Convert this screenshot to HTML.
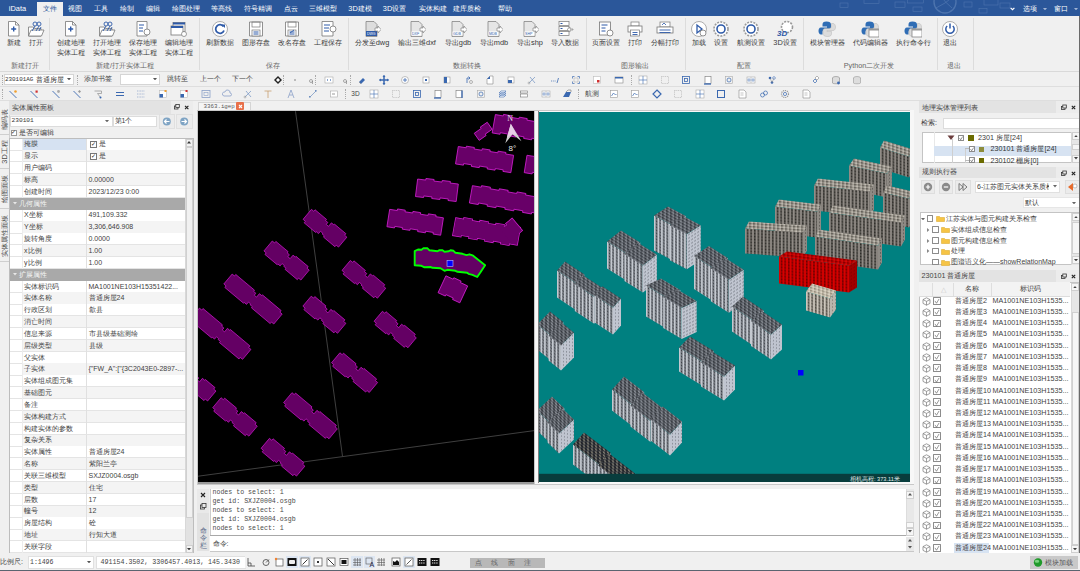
<!DOCTYPE html>
<html><head><meta charset="utf-8"><style>
html,body{margin:0;padding:0;width:1080px;height:571px;overflow:hidden;background:#f0f0f0}
body{position:relative;font-family:"Liberation Sans",sans-serif}
#r>div{position:absolute}
#r>svg{position:absolute;overflow:hidden}
</style></head><body><div id="r" style="position:absolute;left:0;top:0;width:1080px;height:571px;overflow:hidden">
<div style="left:0px;top:100.5px;width:1080px;height:471px;background:#f0f0f0"></div>
<div style="left:8.6px;top:101px;width:0.6px;height:170px;background:#d0d0d0"></div>
<div style="left:0px;top:104px;width:9px;height:30.5px;background:#f0f0f0;border-bottom:1px solid #cfcfcf;box-sizing:border-box"></div>
<div style="left:-45.5px;top:114.25px;width:100px;height:10px;line-height:10px;text-align:center;font-size:7.3px;color:#4a4a4a;white-space:nowrap;transform:rotate(-90deg)">编码表</div>
<div style="left:0px;top:134.5px;width:9px;height:34.5px;background:#f0f0f0;border-bottom:1px solid #cfcfcf;box-sizing:border-box"></div>
<div style="left:-45.5px;top:146.75px;width:100px;height:10px;line-height:10px;text-align:center;font-size:7.3px;color:#4a4a4a;white-space:nowrap;transform:rotate(-90deg)">3D工程</div>
<div style="left:0px;top:169px;width:9px;height:40px;background:#f0f0f0;border-bottom:1px solid #cfcfcf;box-sizing:border-box"></div>
<div style="left:-45.5px;top:184.0px;width:100px;height:10px;line-height:10px;text-align:center;font-size:7.3px;color:#4a4a4a;white-space:nowrap;transform:rotate(-90deg)">绘图面板</div>
<div style="left:0px;top:209px;width:9px;height:53px;background:#f0f0f0;border-bottom:1px solid #cfcfcf;box-sizing:border-box"></div>
<div style="left:-45.5px;top:230.5px;width:100px;height:10px;line-height:10px;text-align:center;font-size:7.3px;color:#4a4a4a;white-space:nowrap;transform:rotate(-90deg)">实体属性面板</div>
<div style="left:9px;top:101px;width:184px;height:13.5px;background:#e3e3e3"></div>
<div style="left:171px;top:101px;width:22px;height:13.5px;background:#ececec"></div>
<div style="left:12px;top:100.6px;height:14.4px;line-height:14.4px;font-size:7.2px;color:#424242;white-space:nowrap;">实体属性面板</div>
<svg style="position:absolute;left:171px;top:101px;" width="22" height="13" viewBox="0 0 22 13"><rect x="3.5" y="5" width="3.5" height="3" fill="none" stroke="#333" stroke-width="0.8"/><rect x="4.8" y="3.5" width="3.5" height="3" fill="#ececec" stroke="#333" stroke-width="0.8"/><path d="M14 4.8l3.4 3.4M17.4 4.8l-3.4 3.4" stroke="#222" stroke-width="1.1"/></svg>
<div style="left:9.5px;top:115.5px;width:103px;height:11px;background:#fff;border:1px solid #dcdcdc;box-sizing:border-box"></div>
<div style="left:11.5px;top:115.0px;height:12.4px;line-height:12.4px;font-size:6.2px;color:#3a3a3a;white-space:nowrap;font-family:'Liberation Mono',monospace">230101</div>
<svg style="position:absolute;left:105.0px;top:119.8px" width="4" height="2.4"><polygon points="0,0 4,0 2.0,2.4" fill="#666"/></svg>
<div style="left:113px;top:115.5px;width:44px;height:11px;background:#fff;border:1px solid #dcdcdc;box-sizing:border-box"></div>
<div style="left:114.5px;top:114px;height:14px;line-height:14px;font-size:7px;color:#3a3a3a;white-space:nowrap;">第1个</div>
<div style="left:158.5px;top:114px;width:16px;height:15px;background:#ececec;border:1px solid #e0e0e0;box-sizing:border-box"></div>
<div style="left:175.5px;top:114px;width:17px;height:15px;background:#ececec;border:1px solid #e0e0e0;box-sizing:border-box"></div>
<svg style="position:absolute;left:160px;top:115px;" width="14" height="13" viewBox="0 0 14 13"><circle cx="6.8" cy="6.5" r="4" fill="#7fa4c4"/><path d="M9.5 6.5h-5M6.5 4.5l-2 2 2 2" stroke="#fff" stroke-width="1.2" fill="none"/></svg>
<svg style="position:absolute;left:177px;top:115px;" width="14" height="13" viewBox="0 0 14 13"><circle cx="7.2" cy="6.5" r="4" fill="#7fa4c4"/><path d="M4.5 6.5h5M7.5 4.5l2 2-2 2" stroke="#fff" stroke-width="1.2" fill="none"/></svg>
<div style="left:10.5px;top:130px;width:6px;height:6px;background:#fff;border:1px solid #999;box-sizing:border-box"></div>
<div style="left:11px;top:127.30000000000001px;height:11.0px;line-height:11.0px;font-size:5.5px;color:#333;white-space:nowrap;">✓</div>
<div style="left:19px;top:125.8px;height:14.4px;line-height:14.4px;font-size:7.2px;color:#3a3a3a;white-space:nowrap;">是否可编辑</div>
<div style="left:9px;top:138px;width:184.5px;height:415.5px;background:#fff;border:1px solid #bdbdbd;box-sizing:border-box"></div>
<div style="left:22px;top:138.5px;width:163px;height:11.84px;background:#ffffff"></div>
<div style="left:22px;top:138.5px;width:64px;height:11.84px;background:#d6e2f2"></div>
<div style="left:10px;top:149.64000000000001px;width:175px;height:0.8px;background:#e4e4e4"></div>
<div style="left:86px;top:138.5px;width:0.8px;height:11.84px;background:#e0e0e0"></div>
<div style="left:22px;top:138.5px;width:0.8px;height:11.84px;background:#ececec"></div>
<div style="left:24px;top:137.42px;height:14px;line-height:14px;font-size:7px;color:#424242;white-space:nowrap;">掩膜</div>
<div style="left:89.5px;top:141.0px;width:7px;height:7px;background:#fff;border:1px solid #777;box-sizing:border-box"></div>
<div style="left:90.5px;top:138.42px;height:12px;line-height:12px;font-size:6px;color:#222;white-space:nowrap;">✓</div>
<div style="left:99px;top:137.42px;height:14px;line-height:14px;font-size:7px;color:#424242;white-space:nowrap;">是</div>
<div style="left:22px;top:150.34px;width:163px;height:11.84px;background:#f4f4f4"></div>
<div style="left:10px;top:161.48000000000002px;width:175px;height:0.8px;background:#e4e4e4"></div>
<div style="left:86px;top:150.34px;width:0.8px;height:11.84px;background:#e0e0e0"></div>
<div style="left:22px;top:150.34px;width:0.8px;height:11.84px;background:#ececec"></div>
<div style="left:24px;top:149.26px;height:14px;line-height:14px;font-size:7px;color:#424242;white-space:nowrap;">显示</div>
<div style="left:89.5px;top:152.84px;width:7px;height:7px;background:#fff;border:1px solid #777;box-sizing:border-box"></div>
<div style="left:90.5px;top:150.26px;height:12px;line-height:12px;font-size:6px;color:#222;white-space:nowrap;">✓</div>
<div style="left:99px;top:149.26px;height:14px;line-height:14px;font-size:7px;color:#424242;white-space:nowrap;">是</div>
<div style="left:22px;top:162.18px;width:163px;height:11.84px;background:#ffffff"></div>
<div style="left:10px;top:173.32000000000002px;width:175px;height:0.8px;background:#e4e4e4"></div>
<div style="left:86px;top:162.18px;width:0.8px;height:11.84px;background:#e0e0e0"></div>
<div style="left:22px;top:162.18px;width:0.8px;height:11.84px;background:#ececec"></div>
<div style="left:24px;top:161.1px;height:14px;line-height:14px;font-size:7px;color:#424242;white-space:nowrap;">用户编码</div>
<div style="left:22px;top:174.02px;width:163px;height:11.84px;background:#f4f4f4"></div>
<div style="left:10px;top:185.16000000000003px;width:175px;height:0.8px;background:#e4e4e4"></div>
<div style="left:86px;top:174.02px;width:0.8px;height:11.84px;background:#e0e0e0"></div>
<div style="left:22px;top:174.02px;width:0.8px;height:11.84px;background:#ececec"></div>
<div style="left:24px;top:172.94px;height:14px;line-height:14px;font-size:7px;color:#424242;white-space:nowrap;">标高</div>
<div style="left:88.5px;top:172.94px;height:14px;line-height:14px;font-size:7px;color:#424242;white-space:nowrap;">0.00000</div>
<div style="left:22px;top:185.86px;width:163px;height:11.84px;background:#ffffff"></div>
<div style="left:10px;top:197.00000000000003px;width:175px;height:0.8px;background:#e4e4e4"></div>
<div style="left:86px;top:185.86px;width:0.8px;height:11.84px;background:#e0e0e0"></div>
<div style="left:22px;top:185.86px;width:0.8px;height:11.84px;background:#ececec"></div>
<div style="left:24px;top:184.78px;height:14px;line-height:14px;font-size:7px;color:#424242;white-space:nowrap;">创建时间</div>
<div style="left:88.5px;top:184.78px;height:14px;line-height:14px;font-size:7px;color:#424242;white-space:nowrap;">2023/12/23 0:00</div>
<div style="left:10px;top:197.70000000000002px;width:175px;height:11.84px;background:#a9a9a9"></div>
<svg style="position:absolute;left:13.0px;top:202.42000000000002px" width="4" height="2.4"><polygon points="0,0 4,0 2.0,2.4" fill="#e8e8e8"/></svg>
<div style="left:19px;top:196.62px;height:14px;line-height:14px;font-size:7px;color:#f4f4f4;white-space:nowrap;">几何属性</div>
<div style="left:22px;top:209.54000000000002px;width:163px;height:11.84px;background:#ffffff"></div>
<div style="left:10px;top:220.68000000000004px;width:175px;height:0.8px;background:#e4e4e4"></div>
<div style="left:86px;top:209.54000000000002px;width:0.8px;height:11.84px;background:#e0e0e0"></div>
<div style="left:22px;top:209.54000000000002px;width:0.8px;height:11.84px;background:#ececec"></div>
<div style="left:24px;top:208.46px;height:14px;line-height:14px;font-size:7px;color:#424242;white-space:nowrap;">X坐标</div>
<div style="left:88.5px;top:208.46px;height:14px;line-height:14px;font-size:7px;color:#424242;white-space:nowrap;">491,109.332</div>
<div style="left:22px;top:221.38000000000002px;width:163px;height:11.84px;background:#f4f4f4"></div>
<div style="left:10px;top:232.52000000000004px;width:175px;height:0.8px;background:#e4e4e4"></div>
<div style="left:86px;top:221.38000000000002px;width:0.8px;height:11.84px;background:#e0e0e0"></div>
<div style="left:22px;top:221.38000000000002px;width:0.8px;height:11.84px;background:#ececec"></div>
<div style="left:24px;top:220.3px;height:14px;line-height:14px;font-size:7px;color:#424242;white-space:nowrap;">Y坐标</div>
<div style="left:88.5px;top:220.3px;height:14px;line-height:14px;font-size:7px;color:#424242;white-space:nowrap;">3,306,646.908</div>
<div style="left:22px;top:233.22000000000003px;width:163px;height:11.84px;background:#ffffff"></div>
<div style="left:10px;top:244.36000000000004px;width:175px;height:0.8px;background:#e4e4e4"></div>
<div style="left:86px;top:233.22000000000003px;width:0.8px;height:11.84px;background:#e0e0e0"></div>
<div style="left:22px;top:233.22000000000003px;width:0.8px;height:11.84px;background:#ececec"></div>
<div style="left:24px;top:232.14000000000001px;height:14px;line-height:14px;font-size:7px;color:#424242;white-space:nowrap;">旋转角度</div>
<div style="left:88.5px;top:232.14000000000001px;height:14px;line-height:14px;font-size:7px;color:#424242;white-space:nowrap;">0.0000</div>
<div style="left:22px;top:245.06000000000003px;width:163px;height:11.84px;background:#f4f4f4"></div>
<div style="left:10px;top:256.20000000000005px;width:175px;height:0.8px;background:#e4e4e4"></div>
<div style="left:86px;top:245.06000000000003px;width:0.8px;height:11.84px;background:#e0e0e0"></div>
<div style="left:22px;top:245.06000000000003px;width:0.8px;height:11.84px;background:#ececec"></div>
<div style="left:24px;top:243.98000000000002px;height:14px;line-height:14px;font-size:7px;color:#424242;white-space:nowrap;">x比例</div>
<div style="left:88.5px;top:243.98000000000002px;height:14px;line-height:14px;font-size:7px;color:#424242;white-space:nowrap;">1.00</div>
<div style="left:22px;top:256.90000000000003px;width:163px;height:11.84px;background:#ffffff"></div>
<div style="left:10px;top:268.04px;width:175px;height:0.8px;background:#e4e4e4"></div>
<div style="left:86px;top:256.90000000000003px;width:0.8px;height:11.84px;background:#e0e0e0"></div>
<div style="left:22px;top:256.90000000000003px;width:0.8px;height:11.84px;background:#ececec"></div>
<div style="left:24px;top:255.82000000000005px;height:14px;line-height:14px;font-size:7px;color:#424242;white-space:nowrap;">y比例</div>
<div style="left:88.5px;top:255.82000000000005px;height:14px;line-height:14px;font-size:7px;color:#424242;white-space:nowrap;">1.00</div>
<div style="left:10px;top:268.74px;width:175px;height:11.84px;background:#a9a9a9"></div>
<svg style="position:absolute;left:13.0px;top:273.46000000000004px" width="4" height="2.4"><polygon points="0,0 4,0 2.0,2.4" fill="#e8e8e8"/></svg>
<div style="left:19px;top:267.66px;height:14px;line-height:14px;font-size:7px;color:#f4f4f4;white-space:nowrap;">扩展属性</div>
<div style="left:22px;top:280.58px;width:163px;height:11.84px;background:#ffffff"></div>
<div style="left:10px;top:291.71999999999997px;width:175px;height:0.8px;background:#e4e4e4"></div>
<div style="left:86px;top:280.58px;width:0.8px;height:11.84px;background:#e0e0e0"></div>
<div style="left:22px;top:280.58px;width:0.8px;height:11.84px;background:#ececec"></div>
<div style="left:24px;top:279.5px;height:14px;line-height:14px;font-size:7px;color:#424242;white-space:nowrap;">实体标识码</div>
<div style="left:88.5px;top:279.5px;height:14px;line-height:14px;font-size:7px;color:#424242;white-space:nowrap;">MA1001NE103H15351422...</div>
<div style="left:22px;top:292.41999999999996px;width:163px;height:11.84px;background:#f4f4f4"></div>
<div style="left:10px;top:303.55999999999995px;width:175px;height:0.8px;background:#e4e4e4"></div>
<div style="left:86px;top:292.41999999999996px;width:0.8px;height:11.84px;background:#e0e0e0"></div>
<div style="left:22px;top:292.41999999999996px;width:0.8px;height:11.84px;background:#ececec"></div>
<div style="left:24px;top:291.34px;height:14px;line-height:14px;font-size:7px;color:#424242;white-space:nowrap;">实体名称</div>
<div style="left:88.5px;top:291.34px;height:14px;line-height:14px;font-size:7px;color:#424242;white-space:nowrap;">普通房屋24</div>
<div style="left:22px;top:304.25999999999993px;width:163px;height:11.84px;background:#ffffff"></div>
<div style="left:10px;top:315.3999999999999px;width:175px;height:0.8px;background:#e4e4e4"></div>
<div style="left:86px;top:304.25999999999993px;width:0.8px;height:11.84px;background:#e0e0e0"></div>
<div style="left:22px;top:304.25999999999993px;width:0.8px;height:11.84px;background:#ececec"></div>
<div style="left:24px;top:303.17999999999995px;height:14px;line-height:14px;font-size:7px;color:#424242;white-space:nowrap;">行政区划</div>
<div style="left:88.5px;top:303.17999999999995px;height:14px;line-height:14px;font-size:7px;color:#424242;white-space:nowrap;">歙县</div>
<div style="left:22px;top:316.0999999999999px;width:163px;height:11.84px;background:#f4f4f4"></div>
<div style="left:10px;top:327.2399999999999px;width:175px;height:0.8px;background:#e4e4e4"></div>
<div style="left:86px;top:316.0999999999999px;width:0.8px;height:11.84px;background:#e0e0e0"></div>
<div style="left:22px;top:316.0999999999999px;width:0.8px;height:11.84px;background:#ececec"></div>
<div style="left:24px;top:315.0199999999999px;height:14px;line-height:14px;font-size:7px;color:#424242;white-space:nowrap;">消亡时间</div>
<div style="left:22px;top:327.9399999999999px;width:163px;height:11.84px;background:#ffffff"></div>
<div style="left:10px;top:339.07999999999987px;width:175px;height:0.8px;background:#e4e4e4"></div>
<div style="left:86px;top:327.9399999999999px;width:0.8px;height:11.84px;background:#e0e0e0"></div>
<div style="left:22px;top:327.9399999999999px;width:0.8px;height:11.84px;background:#ececec"></div>
<div style="left:24px;top:326.8599999999999px;height:14px;line-height:14px;font-size:7px;color:#424242;white-space:nowrap;">信息来源</div>
<div style="left:88.5px;top:326.8599999999999px;height:14px;line-height:14px;font-size:7px;color:#424242;white-space:nowrap;">市县级基础测绘</div>
<div style="left:22px;top:339.77999999999986px;width:163px;height:11.84px;background:#f4f4f4"></div>
<div style="left:10px;top:350.91999999999985px;width:175px;height:0.8px;background:#e4e4e4"></div>
<div style="left:86px;top:339.77999999999986px;width:0.8px;height:11.84px;background:#e0e0e0"></div>
<div style="left:22px;top:339.77999999999986px;width:0.8px;height:11.84px;background:#ececec"></div>
<div style="left:24px;top:338.6999999999999px;height:14px;line-height:14px;font-size:7px;color:#424242;white-space:nowrap;">层级类型</div>
<div style="left:88.5px;top:338.6999999999999px;height:14px;line-height:14px;font-size:7px;color:#424242;white-space:nowrap;">县级</div>
<div style="left:22px;top:351.61999999999983px;width:163px;height:11.84px;background:#ffffff"></div>
<div style="left:10px;top:362.7599999999998px;width:175px;height:0.8px;background:#e4e4e4"></div>
<div style="left:86px;top:351.61999999999983px;width:0.8px;height:11.84px;background:#e0e0e0"></div>
<div style="left:22px;top:351.61999999999983px;width:0.8px;height:11.84px;background:#ececec"></div>
<div style="left:24px;top:350.53999999999985px;height:14px;line-height:14px;font-size:7px;color:#424242;white-space:nowrap;">父实体</div>
<div style="left:22px;top:363.4599999999998px;width:163px;height:11.84px;background:#f4f4f4"></div>
<div style="left:10px;top:374.5999999999998px;width:175px;height:0.8px;background:#e4e4e4"></div>
<div style="left:86px;top:363.4599999999998px;width:0.8px;height:11.84px;background:#e0e0e0"></div>
<div style="left:22px;top:363.4599999999998px;width:0.8px;height:11.84px;background:#ececec"></div>
<div style="left:24px;top:362.3799999999998px;height:14px;line-height:14px;font-size:7px;color:#424242;white-space:nowrap;">子实体</div>
<div style="left:88.5px;top:362.3799999999998px;height:14px;line-height:14px;font-size:7px;color:#424242;white-space:nowrap;">{"FW_A":["{3C2043E0-2897-...</div>
<div style="left:22px;top:375.2999999999998px;width:163px;height:11.84px;background:#ffffff"></div>
<div style="left:10px;top:386.43999999999977px;width:175px;height:0.8px;background:#e4e4e4"></div>
<div style="left:86px;top:375.2999999999998px;width:0.8px;height:11.84px;background:#e0e0e0"></div>
<div style="left:22px;top:375.2999999999998px;width:0.8px;height:11.84px;background:#ececec"></div>
<div style="left:24px;top:374.2199999999998px;height:14px;line-height:14px;font-size:7px;color:#424242;white-space:nowrap;">实体组成图元集</div>
<div style="left:22px;top:387.13999999999976px;width:163px;height:11.84px;background:#f4f4f4"></div>
<div style="left:10px;top:398.27999999999975px;width:175px;height:0.8px;background:#e4e4e4"></div>
<div style="left:86px;top:387.13999999999976px;width:0.8px;height:11.84px;background:#e0e0e0"></div>
<div style="left:22px;top:387.13999999999976px;width:0.8px;height:11.84px;background:#ececec"></div>
<div style="left:24px;top:386.0599999999998px;height:14px;line-height:14px;font-size:7px;color:#424242;white-space:nowrap;">基础图元</div>
<div style="left:22px;top:398.97999999999973px;width:163px;height:11.84px;background:#ffffff"></div>
<div style="left:10px;top:410.1199999999997px;width:175px;height:0.8px;background:#e4e4e4"></div>
<div style="left:86px;top:398.97999999999973px;width:0.8px;height:11.84px;background:#e0e0e0"></div>
<div style="left:22px;top:398.97999999999973px;width:0.8px;height:11.84px;background:#ececec"></div>
<div style="left:24px;top:397.89999999999975px;height:14px;line-height:14px;font-size:7px;color:#424242;white-space:nowrap;">备注</div>
<div style="left:22px;top:410.8199999999997px;width:163px;height:11.84px;background:#f4f4f4"></div>
<div style="left:10px;top:421.9599999999997px;width:175px;height:0.8px;background:#e4e4e4"></div>
<div style="left:86px;top:410.8199999999997px;width:0.8px;height:11.84px;background:#e0e0e0"></div>
<div style="left:22px;top:410.8199999999997px;width:0.8px;height:11.84px;background:#ececec"></div>
<div style="left:24px;top:409.7399999999997px;height:14px;line-height:14px;font-size:7px;color:#424242;white-space:nowrap;">实体构建方式</div>
<div style="left:22px;top:422.6599999999997px;width:163px;height:11.84px;background:#ffffff"></div>
<div style="left:10px;top:433.79999999999967px;width:175px;height:0.8px;background:#e4e4e4"></div>
<div style="left:86px;top:422.6599999999997px;width:0.8px;height:11.84px;background:#e0e0e0"></div>
<div style="left:22px;top:422.6599999999997px;width:0.8px;height:11.84px;background:#ececec"></div>
<div style="left:24px;top:421.5799999999997px;height:14px;line-height:14px;font-size:7px;color:#424242;white-space:nowrap;">构建实体的参数</div>
<div style="left:22px;top:434.49999999999966px;width:163px;height:11.84px;background:#f4f4f4"></div>
<div style="left:10px;top:445.63999999999965px;width:175px;height:0.8px;background:#e4e4e4"></div>
<div style="left:86px;top:434.49999999999966px;width:0.8px;height:11.84px;background:#e0e0e0"></div>
<div style="left:22px;top:434.49999999999966px;width:0.8px;height:11.84px;background:#ececec"></div>
<div style="left:24px;top:433.4199999999997px;height:14px;line-height:14px;font-size:7px;color:#424242;white-space:nowrap;">复杂关系</div>
<div style="left:22px;top:446.33999999999963px;width:163px;height:11.84px;background:#ffffff"></div>
<div style="left:10px;top:457.4799999999996px;width:175px;height:0.8px;background:#e4e4e4"></div>
<div style="left:86px;top:446.33999999999963px;width:0.8px;height:11.84px;background:#e0e0e0"></div>
<div style="left:22px;top:446.33999999999963px;width:0.8px;height:11.84px;background:#ececec"></div>
<div style="left:24px;top:445.25999999999965px;height:14px;line-height:14px;font-size:7px;color:#424242;white-space:nowrap;">实体属性</div>
<div style="left:88.5px;top:445.25999999999965px;height:14px;line-height:14px;font-size:7px;color:#424242;white-space:nowrap;">普通房屋24</div>
<div style="left:22px;top:458.1799999999996px;width:163px;height:11.84px;background:#f4f4f4"></div>
<div style="left:10px;top:469.3199999999996px;width:175px;height:0.8px;background:#e4e4e4"></div>
<div style="left:86px;top:458.1799999999996px;width:0.8px;height:11.84px;background:#e0e0e0"></div>
<div style="left:22px;top:458.1799999999996px;width:0.8px;height:11.84px;background:#ececec"></div>
<div style="left:24px;top:457.0999999999996px;height:14px;line-height:14px;font-size:7px;color:#424242;white-space:nowrap;">名称</div>
<div style="left:88.5px;top:457.0999999999996px;height:14px;line-height:14px;font-size:7px;color:#424242;white-space:nowrap;">紫阳兰亭</div>
<div style="left:22px;top:470.0199999999996px;width:163px;height:11.84px;background:#ffffff"></div>
<div style="left:10px;top:481.15999999999957px;width:175px;height:0.8px;background:#e4e4e4"></div>
<div style="left:86px;top:470.0199999999996px;width:0.8px;height:11.84px;background:#e0e0e0"></div>
<div style="left:22px;top:470.0199999999996px;width:0.8px;height:11.84px;background:#ececec"></div>
<div style="left:24px;top:468.9399999999996px;height:14px;line-height:14px;font-size:7px;color:#424242;white-space:nowrap;">关联三维模型</div>
<div style="left:88.5px;top:468.9399999999996px;height:14px;line-height:14px;font-size:7px;color:#424242;white-space:nowrap;">SXJZ0004.osgb</div>
<div style="left:22px;top:481.85999999999956px;width:163px;height:11.84px;background:#f4f4f4"></div>
<div style="left:10px;top:492.99999999999955px;width:175px;height:0.8px;background:#e4e4e4"></div>
<div style="left:86px;top:481.85999999999956px;width:0.8px;height:11.84px;background:#e0e0e0"></div>
<div style="left:22px;top:481.85999999999956px;width:0.8px;height:11.84px;background:#ececec"></div>
<div style="left:24px;top:480.7799999999996px;height:14px;line-height:14px;font-size:7px;color:#424242;white-space:nowrap;">类型</div>
<div style="left:88.5px;top:480.7799999999996px;height:14px;line-height:14px;font-size:7px;color:#424242;white-space:nowrap;">住宅</div>
<div style="left:22px;top:493.69999999999953px;width:163px;height:11.84px;background:#ffffff"></div>
<div style="left:10px;top:504.8399999999995px;width:175px;height:0.8px;background:#e4e4e4"></div>
<div style="left:86px;top:493.69999999999953px;width:0.8px;height:11.84px;background:#e0e0e0"></div>
<div style="left:22px;top:493.69999999999953px;width:0.8px;height:11.84px;background:#ececec"></div>
<div style="left:24px;top:492.61999999999955px;height:14px;line-height:14px;font-size:7px;color:#424242;white-space:nowrap;">层数</div>
<div style="left:88.5px;top:492.61999999999955px;height:14px;line-height:14px;font-size:7px;color:#424242;white-space:nowrap;">17</div>
<div style="left:22px;top:505.5399999999995px;width:163px;height:11.84px;background:#f4f4f4"></div>
<div style="left:10px;top:516.6799999999995px;width:175px;height:0.8px;background:#e4e4e4"></div>
<div style="left:86px;top:505.5399999999995px;width:0.8px;height:11.84px;background:#e0e0e0"></div>
<div style="left:22px;top:505.5399999999995px;width:0.8px;height:11.84px;background:#ececec"></div>
<div style="left:24px;top:504.4599999999995px;height:14px;line-height:14px;font-size:7px;color:#424242;white-space:nowrap;">幢号</div>
<div style="left:88.5px;top:504.4599999999995px;height:14px;line-height:14px;font-size:7px;color:#424242;white-space:nowrap;">12</div>
<div style="left:22px;top:517.3799999999995px;width:163px;height:11.84px;background:#ffffff"></div>
<div style="left:10px;top:528.5199999999995px;width:175px;height:0.8px;background:#e4e4e4"></div>
<div style="left:86px;top:517.3799999999995px;width:0.8px;height:11.84px;background:#e0e0e0"></div>
<div style="left:22px;top:517.3799999999995px;width:0.8px;height:11.84px;background:#ececec"></div>
<div style="left:24px;top:516.2999999999995px;height:14px;line-height:14px;font-size:7px;color:#424242;white-space:nowrap;">房屋结构</div>
<div style="left:88.5px;top:516.2999999999995px;height:14px;line-height:14px;font-size:7px;color:#424242;white-space:nowrap;">砼</div>
<div style="left:22px;top:529.2199999999996px;width:163px;height:11.84px;background:#f4f4f4"></div>
<div style="left:10px;top:540.3599999999996px;width:175px;height:0.8px;background:#e4e4e4"></div>
<div style="left:86px;top:529.2199999999996px;width:0.8px;height:11.84px;background:#e0e0e0"></div>
<div style="left:22px;top:529.2199999999996px;width:0.8px;height:11.84px;background:#ececec"></div>
<div style="left:24px;top:528.1399999999995px;height:14px;line-height:14px;font-size:7px;color:#424242;white-space:nowrap;">地址</div>
<div style="left:88.5px;top:528.1399999999995px;height:14px;line-height:14px;font-size:7px;color:#424242;white-space:nowrap;">行知大道</div>
<div style="left:22px;top:541.0599999999996px;width:163px;height:11.84px;background:#ffffff"></div>
<div style="left:10px;top:552.1999999999996px;width:175px;height:0.8px;background:#e4e4e4"></div>
<div style="left:86px;top:541.0599999999996px;width:0.8px;height:11.84px;background:#e0e0e0"></div>
<div style="left:22px;top:541.0599999999996px;width:0.8px;height:11.84px;background:#ececec"></div>
<div style="left:24px;top:539.9799999999996px;height:14px;line-height:14px;font-size:7px;color:#424242;white-space:nowrap;">关联字段</div>
<div style="left:185px;top:138.5px;width:8px;height:414px;background:#e2e2e2;border-left:1px solid #d8d8d8;box-sizing:border-box"></div>
<div style="left:185.5px;top:146.5px;width:7px;height:371.5px;background:#f1f1f1;border:1px solid #d0d0d0;box-sizing:border-box"></div>
<div style="left:185.5px;top:138.5px;width:7.5px;height:8px;background:#f4f4f4;border:1px solid #cfcfcf;box-sizing:border-box"></div>
<svg style="position:absolute;left:187.3px;top:141.3px" width="4" height="2.4"><polygon points="0,2.4 4,2.4 2.0,0" fill="#3a3a3a"/></svg>
<div style="left:185.5px;top:545px;width:7.5px;height:8px;background:#f4f4f4;border:1px solid #cfcfcf;box-sizing:border-box"></div>
<svg style="position:absolute;left:187.3px;top:547.8px" width="4" height="2.4"><polygon points="0,0 4,0 2.0,2.4" fill="#3a3a3a"/></svg>
<div style="left:0px;top:0px;width:1080px;height:15.5px;background:#2b579a"></div>
<svg style="position:absolute;left:800px;top:0px;" width="280" height="15.5" viewBox="0 0 280 15.5"><rect x="40" y="3" width="8" height="4.5" fill="none" stroke="#4d74ae" stroke-width="0.6"/><rect x="64" y="-1" width="15" height="4.5" fill="none" stroke="#4d74ae" stroke-width="0.6"/><rect x="95" y="2" width="10" height="5.5" fill="none" stroke="#4d74ae" stroke-width="0.6"/><rect x="107.5" y="-1" width="16" height="4" fill="none" stroke="#4d74ae" stroke-width="0.6"/><rect x="113" y="7" width="9" height="4.5" fill="none" stroke="#4d74ae" stroke-width="0.6"/><rect x="164" y="2" width="8" height="5" fill="none" stroke="#4d74ae" stroke-width="0.6"/><rect x="179" y="8.5" width="8" height="4.5" fill="none" stroke="#4d74ae" stroke-width="0.6"/><rect x="184" y="-1" width="14" height="6" fill="none" stroke="#4d74ae" stroke-width="0.6"/><rect x="200" y="3" width="10" height="5" fill="none" stroke="#4d74ae" stroke-width="0.6"/><circle cx="145" cy="2" r="11" fill="none" stroke="#4d74ae" stroke-width="1.4"/><path d="M136 8 q9 -4 18 -12 M140 -6 q4 8 12 14" fill="none" stroke="#4d74ae" stroke-width="0.8"/></svg>
<div style="left:37px;top:1.6px;width:25.5px;height:14px;background:#f0f0f0"></div>
<div style="left:-82.5px;width:200px;text-align:center;top:1.9000000000000004px;height:14.8px;line-height:14.8px;font-size:7.4px;color:#ffffff;white-space:nowrap;">iData</div>
<div style="left:-50.5px;width:200px;text-align:center;top:1.9000000000000004px;height:14.8px;line-height:14.8px;font-size:7.4px;color:#2b579a;white-space:nowrap;">文件</div>
<div style="left:-25px;width:200px;text-align:center;top:1.9000000000000004px;height:14.8px;line-height:14.8px;font-size:7.4px;color:#ffffff;white-space:nowrap;">视图</div>
<div style="left:1px;width:200px;text-align:center;top:1.9000000000000004px;height:14.8px;line-height:14.8px;font-size:7.4px;color:#ffffff;white-space:nowrap;">工具</div>
<div style="left:27px;width:200px;text-align:center;top:1.9000000000000004px;height:14.8px;line-height:14.8px;font-size:7.4px;color:#ffffff;white-space:nowrap;">绘制</div>
<div style="left:53px;width:200px;text-align:center;top:1.9000000000000004px;height:14.8px;line-height:14.8px;font-size:7.4px;color:#ffffff;white-space:nowrap;">编辑</div>
<div style="left:86px;width:200px;text-align:center;top:1.9000000000000004px;height:14.8px;line-height:14.8px;font-size:7.4px;color:#ffffff;white-space:nowrap;">绘图处理</div>
<div style="left:121px;width:200px;text-align:center;top:1.9000000000000004px;height:14.8px;line-height:14.8px;font-size:7.4px;color:#ffffff;white-space:nowrap;">等高线</div>
<div style="left:157.5px;width:200px;text-align:center;top:1.9000000000000004px;height:14.8px;line-height:14.8px;font-size:7.4px;color:#ffffff;white-space:nowrap;">符号精调</div>
<div style="left:190.5px;width:200px;text-align:center;top:1.9000000000000004px;height:14.8px;line-height:14.8px;font-size:7.4px;color:#ffffff;white-space:nowrap;">点云</div>
<div style="left:223px;width:200px;text-align:center;top:1.9000000000000004px;height:14.8px;line-height:14.8px;font-size:7.4px;color:#ffffff;white-space:nowrap;">三维模型</div>
<div style="left:260px;width:200px;text-align:center;top:1.9000000000000004px;height:14.8px;line-height:14.8px;font-size:7.4px;color:#ffffff;white-space:nowrap;">3D建模</div>
<div style="left:294.5px;width:200px;text-align:center;top:1.9000000000000004px;height:14.8px;line-height:14.8px;font-size:7.4px;color:#ffffff;white-space:nowrap;">3D设置</div>
<div style="left:332.5px;width:200px;text-align:center;top:1.9000000000000004px;height:14.8px;line-height:14.8px;font-size:7.4px;color:#ffffff;white-space:nowrap;">实体构建</div>
<div style="left:367px;width:200px;text-align:center;top:1.9000000000000004px;height:14.8px;line-height:14.8px;font-size:7.4px;color:#ffffff;white-space:nowrap;">建库质检</div>
<div style="left:405px;width:200px;text-align:center;top:1.9000000000000004px;height:14.8px;line-height:14.8px;font-size:7.4px;color:#ffffff;white-space:nowrap;">帮助</div>
<svg style="position:absolute;left:1009.5px;top:6.5px;" width="5" height="4" viewBox="0 0 5 4"><path d="M0.6 0.8l1.9 1.9 1.9-1.9" fill="none" stroke="#fff" stroke-width="1.2"/></svg>
<div style="left:930px;width:200px;text-align:center;top:1.9000000000000004px;height:14.8px;line-height:14.8px;font-size:7.4px;color:#fff;white-space:nowrap;">选项</div>
<svg style="position:absolute;left:1042.5px;top:7.8px" width="4" height="2.4"><polygon points="0,0 4,0 2.0,2.4" fill="#9fb3d3"/></svg>
<div style="left:960.5px;width:200px;text-align:center;top:1.9000000000000004px;height:14.8px;line-height:14.8px;font-size:7.4px;color:#fff;white-space:nowrap;">窗口</div>
<svg style="position:absolute;left:1073.5px;top:7.8px" width="4" height="2.4"><polygon points="0,0 4,0 2.0,2.4" fill="#9fb3d3"/></svg>
<div style="left:0px;top:15.5px;width:1080px;height:56.5px;background:#f0f0f0;border-bottom:1px solid #d9d9d9;box-sizing:border-box"></div>
<div style="left:49px;top:18px;width:0.8px;height:52px;background:#dcdcdc"></div>
<div style="left:199px;top:18px;width:0.8px;height:52px;background:#dcdcdc"></div>
<div style="left:348px;top:18px;width:0.8px;height:52px;background:#dcdcdc"></div>
<div style="left:586px;top:18px;width:0.8px;height:52px;background:#dcdcdc"></div>
<div style="left:685px;top:18px;width:0.8px;height:52px;background:#dcdcdc"></div>
<div style="left:802.6px;top:18px;width:0.8px;height:52px;background:#dcdcdc"></div>
<div style="left:937px;top:18px;width:0.8px;height:52px;background:#dcdcdc"></div>
<div style="left:972.6px;top:18px;width:0.8px;height:52px;background:#dcdcdc"></div>
<div style="left:-75px;width:200px;text-align:center;top:59.099999999999994px;height:14.4px;line-height:14.4px;font-size:7.2px;color:#666;white-space:nowrap;">新建打开</div>
<div style="left:25px;width:200px;text-align:center;top:59.099999999999994px;height:14.4px;line-height:14.4px;font-size:7.2px;color:#666;white-space:nowrap;">新建/打开实体工程</div>
<div style="left:173px;width:200px;text-align:center;top:59.099999999999994px;height:14.4px;line-height:14.4px;font-size:7.2px;color:#666;white-space:nowrap;">保存</div>
<div style="left:367px;width:200px;text-align:center;top:59.099999999999994px;height:14.4px;line-height:14.4px;font-size:7.2px;color:#666;white-space:nowrap;">数据转换</div>
<div style="left:535px;width:200px;text-align:center;top:59.099999999999994px;height:14.4px;line-height:14.4px;font-size:7.2px;color:#666;white-space:nowrap;">图形输出</div>
<div style="left:644px;width:200px;text-align:center;top:59.099999999999994px;height:14.4px;line-height:14.4px;font-size:7.2px;color:#666;white-space:nowrap;">配置</div>
<div style="left:769px;width:200px;text-align:center;top:59.099999999999994px;height:14.4px;line-height:14.4px;font-size:7.2px;color:#666;white-space:nowrap;">Python二次开发</div>
<div style="left:854px;width:200px;text-align:center;top:59.099999999999994px;height:14.4px;line-height:14.4px;font-size:7.2px;color:#666;white-space:nowrap;">退出</div>
<div style="left:-86px;width:200px;text-align:center;top:36.4px;height:14.8px;line-height:14.8px;font-size:7.4px;color:#383838;white-space:nowrap;">新建</div>
<svg style="position:absolute;left:5px;top:19.5px;" width="18" height="18" viewBox="0 0 18 18"><path d="M3.5 1.5h7l3.5 3.5v11h-10.5z" fill="#fff" stroke="#777" stroke-width="0.8"/><path d="M10.5 1.5v3.5h3.5" fill="none" stroke="#777" stroke-width="0.8"/><path d="M8.7 6.5v5M6.2 9h5" stroke="#2e5aa8" stroke-width="1.4"/></svg>
<div style="left:-64px;width:200px;text-align:center;top:36.4px;height:14.8px;line-height:14.8px;font-size:7.4px;color:#383838;white-space:nowrap;">打开</div>
<svg style="position:absolute;left:27px;top:19.5px;" width="18" height="18" viewBox="0 0 18 18"><path d="M1.5 7h5l1 1.5h6.5v7.5h-12.5z" fill="#fff" stroke="#777" stroke-width="0.8"/><path d="M1.5 16l2.5-6h13l-2.5 6z" fill="#fff" stroke="#777" stroke-width="0.8"/><circle cx="8" cy="4" r="2" fill="none" stroke="#2e5aa8" stroke-width="0.9"/><circle cx="12" cy="4" r="2" fill="none" stroke="#2e5aa8" stroke-width="0.9"/><path d="M5 11l3-5M9 11l3-5M12 11l2-4" stroke="#2e5aa8" stroke-width="0.9"/></svg>
<div style="left:-29px;width:200px;text-align:center;top:36.4px;height:14.8px;line-height:14.8px;font-size:7.4px;color:#383838;white-space:nowrap;">创建地理</div>
<div style="left:-29px;width:200px;text-align:center;top:45.9px;height:14.8px;line-height:14.8px;font-size:7.4px;color:#383838;white-space:nowrap;">实体工程</div>
<svg style="position:absolute;left:62px;top:19.5px;" width="18" height="18" viewBox="0 0 18 18"><path d="M3.5 1.5h7l3.5 3.5v11h-10.5z" fill="#fff" stroke="#777" stroke-width="0.8"/><path d="M10.5 1.5v3.5h3.5" fill="none" stroke="#777" stroke-width="0.8"/><path d="M8.7 6.5v5M6.2 9h5" stroke="#2e5aa8" stroke-width="1.4"/></svg>
<div style="left:7px;width:200px;text-align:center;top:36.4px;height:14.8px;line-height:14.8px;font-size:7.4px;color:#383838;white-space:nowrap;">打开地理</div>
<div style="left:7px;width:200px;text-align:center;top:45.9px;height:14.8px;line-height:14.8px;font-size:7.4px;color:#383838;white-space:nowrap;">实体工程</div>
<svg style="position:absolute;left:98px;top:19.5px;" width="18" height="18" viewBox="0 0 18 18"><path d="M1.5 7h5l1 1.5h6.5v7.5h-12.5z" fill="#fff" stroke="#777" stroke-width="0.8"/><path d="M1.5 16l2.5-6h13l-2.5 6z" fill="#fff" stroke="#777" stroke-width="0.8"/><circle cx="8" cy="4" r="2" fill="none" stroke="#2e5aa8" stroke-width="0.9"/><circle cx="12" cy="4" r="2" fill="none" stroke="#2e5aa8" stroke-width="0.9"/><path d="M5 11l3-5M9 11l3-5M12 11l2-4" stroke="#2e5aa8" stroke-width="0.9"/></svg>
<div style="left:43px;width:200px;text-align:center;top:36.4px;height:14.8px;line-height:14.8px;font-size:7.4px;color:#383838;white-space:nowrap;">保存地理</div>
<div style="left:43px;width:200px;text-align:center;top:45.9px;height:14.8px;line-height:14.8px;font-size:7.4px;color:#383838;white-space:nowrap;">实体工程</div>
<svg style="position:absolute;left:134px;top:19.5px;" width="18" height="18" viewBox="0 0 18 18"><path d="M3 1.5h10v14.5h-10z" fill="#fff" stroke="#777" stroke-width="0.8"/><path d="M5 5h5M5 8h4M5 11h4" stroke="#2e5aa8" stroke-width="1"/><circle cx="13" cy="12" r="3" fill="#fff" stroke="#777" stroke-width="0.8"/></svg>
<div style="left:79px;width:200px;text-align:center;top:36.4px;height:14.8px;line-height:14.8px;font-size:7.4px;color:#383838;white-space:nowrap;">编辑地理</div>
<div style="left:79px;width:200px;text-align:center;top:45.9px;height:14.8px;line-height:14.8px;font-size:7.4px;color:#383838;white-space:nowrap;">实体工程</div>
<svg style="position:absolute;left:170px;top:19.5px;" width="18" height="18" viewBox="0 0 18 18"><rect x="3" y="2.5" width="12" height="9" fill="#fff" stroke="#777" stroke-width="0.8"/><rect x="3" y="2.5" width="12" height="2" fill="#2e5aa8"/><rect x="1" y="6" width="12" height="9" fill="#fff" stroke="#777" stroke-width="0.8"/><rect x="1" y="6" width="12" height="2" fill="#2e5aa8"/><circle cx="14" cy="14" r="2.5" fill="#fff" stroke="#777" stroke-width="0.7"/></svg>
<div style="left:120px;width:200px;text-align:center;top:36.4px;height:14.8px;line-height:14.8px;font-size:7.4px;color:#383838;white-space:nowrap;">刷新数据</div>
<svg style="position:absolute;left:211px;top:19.5px;" width="18" height="18" viewBox="0 0 18 18"><circle cx="9" cy="9" r="7.5" fill="#fff" stroke="#999" stroke-width="0.8"/><path d="M12.5 6.5a4.3 4.3 0 1 0 0.5 4" fill="none" stroke="#2e5aa8" stroke-width="1.8"/><path d="M10.5 4.5h3.5v3.5z" fill="#2e5aa8"/></svg>
<div style="left:156px;width:200px;text-align:center;top:36.4px;height:14.8px;line-height:14.8px;font-size:7.4px;color:#383838;white-space:nowrap;">图形存盘</div>
<svg style="position:absolute;left:247px;top:19.5px;" width="18" height="18" viewBox="0 0 18 18"><path d="M2.5 2h13v14h-13z" fill="#fff" stroke="#777" stroke-width="0.8"/><rect x="5" y="2" width="8" height="5" fill="none" stroke="#777" stroke-width="0.7"/><rect x="5" y="10" width="8" height="6" fill="#fff" stroke="#777" stroke-width="0.7"/><path d="M6.5 12h5M6.5 14h5" stroke="#2e5aa8" stroke-width="1"/></svg>
<div style="left:192px;width:200px;text-align:center;top:36.4px;height:14.8px;line-height:14.8px;font-size:7.4px;color:#383838;white-space:nowrap;">改名存盘</div>
<svg style="position:absolute;left:283px;top:19.5px;" width="18" height="18" viewBox="0 0 18 18"><path d="M2.5 2h13v14h-13z" fill="#fff" stroke="#777" stroke-width="0.8"/><rect x="5" y="2" width="8" height="5" fill="none" stroke="#777" stroke-width="0.7"/><rect x="5" y="10" width="8" height="6" fill="#fff" stroke="#777" stroke-width="0.7"/><path d="M6.5 12h5M6.5 14h5" stroke="#2e5aa8" stroke-width="1"/><path d="M7 13l4-3" stroke="#2e5aa8" stroke-width="0.9"/></svg>
<div style="left:228px;width:200px;text-align:center;top:36.4px;height:14.8px;line-height:14.8px;font-size:7.4px;color:#383838;white-space:nowrap;">工程保存</div>
<svg style="position:absolute;left:319px;top:19.5px;" width="18" height="18" viewBox="0 0 18 18"><path d="M3 1.5h11v14.5h-11z" fill="#fff" stroke="#777" stroke-width="0.8"/><path d="M5 5h6M5 8h5M5 11h5" stroke="#2e5aa8" stroke-width="1"/><circle cx="14" cy="9" r="3" fill="#fff" stroke="#777" stroke-width="0.8"/></svg>
<div style="left:272px;width:200px;text-align:center;top:36.4px;height:14.8px;line-height:14.8px;font-size:7.4px;color:#383838;white-space:nowrap;">分发至dwg</div>
<svg style="position:absolute;left:363px;top:19.5px;" width="18" height="18" viewBox="0 0 18 18"><path d="M3 1.5h8l3 3v12h-11z" fill="#ddd" stroke="#777" stroke-width="0.7"/><rect x="3" y="11" width="11" height="5" fill="#2e5aa8"/><text x="4" y="15.3" font-size="3.5" fill="#fff" font-family="Liberation Sans">DWG</text><path d="M12 8h3v-2l3 3.5-3 3.5v-2h-3z" fill="#fff" stroke="#777" stroke-width="0.6"/></svg>
<div style="left:317px;width:200px;text-align:center;top:36.4px;height:14.8px;line-height:14.8px;font-size:7.4px;color:#383838;white-space:nowrap;">输出三维dxf</div>
<svg style="position:absolute;left:408px;top:19.5px;" width="18" height="18" viewBox="0 0 18 18"><path d="M3 1.5h8l3 3v12h-11z" fill="#e6e6e6" stroke="#777" stroke-width="0.7"/><rect x="3.5" y="11.5" width="10" height="4" fill="#fff"/><text x="4" y="15.2" font-size="3.6" fill="#2e5aa8" font-family="Liberation Sans">DXF</text><path d="M12 8h3v-2l3 3.5-3 3.5v-2h-3z" fill="#fff" stroke="#777" stroke-width="0.6"/></svg>
<div style="left:358px;width:200px;text-align:center;top:36.4px;height:14.8px;line-height:14.8px;font-size:7.4px;color:#383838;white-space:nowrap;">导出gdb</div>
<svg style="position:absolute;left:449px;top:19.5px;" width="18" height="18" viewBox="0 0 18 18"><path d="M3 1.5h8l3 3v12h-11z" fill="#e6e6e6" stroke="#777" stroke-width="0.7"/><rect x="3.5" y="11.5" width="10" height="4" fill="#fff"/><text x="4" y="15.2" font-size="3.6" fill="#2e5aa8" font-family="Liberation Sans">GDB</text><path d="M12 8h3v-2l3 3.5-3 3.5v-2h-3z" fill="#fff" stroke="#777" stroke-width="0.6"/></svg>
<div style="left:394px;width:200px;text-align:center;top:36.4px;height:14.8px;line-height:14.8px;font-size:7.4px;color:#383838;white-space:nowrap;">导出mdb</div>
<svg style="position:absolute;left:485px;top:19.5px;" width="18" height="18" viewBox="0 0 18 18"><path d="M3 1.5h8l3 3v12h-11z" fill="#e6e6e6" stroke="#777" stroke-width="0.7"/><rect x="3.5" y="11.5" width="10" height="4" fill="#fff"/><text x="4" y="15.2" font-size="3.6" fill="#2e5aa8" font-family="Liberation Sans">MDB</text><path d="M12 8h3v-2l3 3.5-3 3.5v-2h-3z" fill="#fff" stroke="#777" stroke-width="0.6"/></svg>
<div style="left:430px;width:200px;text-align:center;top:36.4px;height:14.8px;line-height:14.8px;font-size:7.4px;color:#383838;white-space:nowrap;">导出shp</div>
<svg style="position:absolute;left:521px;top:19.5px;" width="18" height="18" viewBox="0 0 18 18"><path d="M3 1.5h8l3 3v12h-11z" fill="#e6e6e6" stroke="#777" stroke-width="0.7"/><rect x="3.5" y="11.5" width="10" height="4" fill="#fff"/><text x="4" y="15.2" font-size="3.6" fill="#2e5aa8" font-family="Liberation Sans">SHP</text><path d="M12 8h3v-2l3 3.5-3 3.5v-2h-3z" fill="#fff" stroke="#777" stroke-width="0.6"/></svg>
<div style="left:465px;width:200px;text-align:center;top:36.4px;height:14.8px;line-height:14.8px;font-size:7.4px;color:#383838;white-space:nowrap;">导入数据</div>
<svg style="position:absolute;left:556px;top:19.5px;" width="18" height="18" viewBox="0 0 18 18"><rect x="3" y="1.5" width="10" height="4" fill="#fff" stroke="#777" stroke-width="0.7"/><rect x="3" y="6.5" width="10" height="4" fill="#fff" stroke="#777" stroke-width="0.7"/><rect x="3" y="11.5" width="10" height="4" fill="#fff" stroke="#777" stroke-width="0.7"/><path d="M4.5 3.5h2M4.5 8.5h2M4.5 13.5h2" stroke="#2e5aa8" stroke-width="1"/><path d="M17 9h-3v-2l-3 2.5 3 2.5v-2h3z" fill="#fff" stroke="#777" stroke-width="0.6"/></svg>
<div style="left:506px;width:200px;text-align:center;top:36.4px;height:14.8px;line-height:14.8px;font-size:7.4px;color:#383838;white-space:nowrap;">页面设置</div>
<svg style="position:absolute;left:597px;top:19.5px;" width="18" height="18" viewBox="0 0 18 18"><rect x="2.5" y="2" width="11" height="13" fill="#fff" stroke="#777" stroke-width="0.8"/><path d="M4.5 5h6M4.5 8h4M4.5 11h4" stroke="#2e5aa8" stroke-width="1"/><circle cx="13" cy="13" r="3" fill="#fff" stroke="#777" stroke-width="0.8"/></svg>
<div style="left:535px;width:200px;text-align:center;top:36.4px;height:14.8px;line-height:14.8px;font-size:7.4px;color:#383838;white-space:nowrap;">打印</div>
<svg style="position:absolute;left:626px;top:19.5px;" width="18" height="18" viewBox="0 0 18 18"><rect x="5" y="2" width="8" height="4" fill="#fff" stroke="#777" stroke-width="0.7"/><rect x="2" y="6" width="14" height="6" fill="#fff" stroke="#777" stroke-width="0.8"/><rect x="4.5" y="10" width="9" height="6" fill="#fff" stroke="#777" stroke-width="0.7"/><path d="M6.5 12.5h5M6.5 14.5h5" stroke="#2e5aa8" stroke-width="0.9"/></svg>
<div style="left:565px;width:200px;text-align:center;top:36.4px;height:14.8px;line-height:14.8px;font-size:7.4px;color:#383838;white-space:nowrap;">分幅打印</div>
<svg style="position:absolute;left:656px;top:19.5px;" width="18" height="18" viewBox="0 0 18 18"><rect x="4" y="2" width="10" height="5" fill="#fff" stroke="#777" stroke-width="0.7"/><rect x="1" y="7" width="16" height="6" fill="#fff" stroke="#777" stroke-width="0.8"/><path d="M3.5 10h11M3.5 12.5h11" stroke="#2e5aa8" stroke-width="0.9"/><path d="M6 5l2-2 2 2" stroke="#2e5aa8" stroke-width="0.8" fill="none"/></svg>
<div style="left:599px;width:200px;text-align:center;top:36.4px;height:14.8px;line-height:14.8px;font-size:7.4px;color:#383838;white-space:nowrap;">加载</div>
<svg style="position:absolute;left:690px;top:19.5px;" width="18" height="18" viewBox="0 0 18 18"><circle cx="9" cy="9" r="7.5" fill="#fff" stroke="#999" stroke-width="0.8"/><path d="M7 5v8l5-4z" fill="none" stroke="#2e5aa8" stroke-width="1.3"/><circle cx="13" cy="13" r="3" fill="#fff" stroke="#777" stroke-width="0.8"/></svg>
<div style="left:621px;width:200px;text-align:center;top:36.4px;height:14.8px;line-height:14.8px;font-size:7.4px;color:#383838;white-space:nowrap;">设置</div>
<svg style="position:absolute;left:712px;top:19.5px;" width="18" height="18" viewBox="0 0 18 18"><circle cx="9" cy="9" r="7" fill="#fff" stroke="#999" stroke-width="1.6" stroke-dasharray="2 1.2"/><circle cx="9" cy="9" r="4" fill="#fff" stroke="#2e5aa8" stroke-width="1.6"/></svg>
<div style="left:650.5px;width:200px;text-align:center;top:36.4px;height:14.8px;line-height:14.8px;font-size:7.4px;color:#383838;white-space:nowrap;">航测设置</div>
<svg style="position:absolute;left:741.5px;top:19.5px;" width="18" height="18" viewBox="0 0 18 18"><circle cx="9" cy="9" r="7" fill="#fff" stroke="#999" stroke-width="1.6" stroke-dasharray="2 1.2"/><circle cx="9" cy="9" r="4" fill="#fff" stroke="#2e5aa8" stroke-width="1.6"/></svg>
<div style="left:685px;width:200px;text-align:center;top:36.4px;height:14.8px;line-height:14.8px;font-size:7.4px;color:#383838;white-space:nowrap;">3D设置</div>
<svg style="position:absolute;left:776px;top:19.5px;" width="18" height="18" viewBox="0 0 18 18"><circle cx="11" cy="7" r="5.5" fill="#fff" stroke="#999" stroke-width="1.6" stroke-dasharray="2 1.2"/><text x="1" y="16" font-size="8" font-weight="bold" font-style="italic" fill="#2e5aa8" font-family="Liberation Sans">3D</text></svg>
<div style="left:727px;width:200px;text-align:center;top:36.4px;height:14.8px;line-height:14.8px;font-size:7.4px;color:#383838;white-space:nowrap;">模块管理器</div>
<svg style="position:absolute;left:818px;top:19.5px;" width="18" height="18" viewBox="0 0 18 18"><path d="M8.5 1.5c-3 0-4 1-4 3v2h4.5v1h-6c-2 0-2.5 2-2.5 3.5s0.8 3.5 2.5 3.5h1.5v-2.5c0-1.5 1-2.5 2.5-2.5h4c1.5 0 2-1 2-2v-3c0-2-1.5-3-4.5-3z" fill="#2f6db5"/><path d="M9.5 16.5c3 0 4-1 4-3v-2h-4.5v-1h6c2 0 2.5-2 2.5-3.5s-0.8-3.5-2.5-3.5h-1.5v2.5c0 1.5-1 2.5-2.5 2.5h-4c-1.5 0-2 1-2 2v3c0 2 1.5 3 4.5 3z" fill="#dcdcdc" stroke="#aaa" stroke-width="0.4"/></svg>
<div style="left:770px;width:200px;text-align:center;top:36.4px;height:14.8px;line-height:14.8px;font-size:7.4px;color:#383838;white-space:nowrap;">代码编辑器</div>
<svg style="position:absolute;left:861px;top:19.5px;" width="18" height="18" viewBox="0 0 18 18"><path d="M8.5 1.5c-3 0-4 1-4 3v2h4.5v1h-6c-2 0-2.5 2-2.5 3.5s0.8 3.5 2.5 3.5h1.5v-2.5c0-1.5 1-2.5 2.5-2.5h4c1.5 0 2-1 2-2v-3c0-2-1.5-3-4.5-3z" fill="#2f6db5"/><path d="M9.5 16.5c3 0 4-1 4-3v-2h-4.5v-1h6c2 0 2.5-2 2.5-3.5s-0.8-3.5-2.5-3.5h-1.5v2.5c0 1.5-1 2.5-2.5 2.5h-4c-1.5 0-2 1-2 2v3c0 2 1.5 3 4.5 3z" fill="#dcdcdc" stroke="#aaa" stroke-width="0.4"/><rect x="8" y="9" width="10" height="8" fill="#fff" stroke="#777" stroke-width="0.7"/><rect x="8" y="9" width="10" height="1.5" fill="#999"/></svg>
<div style="left:813px;width:200px;text-align:center;top:36.4px;height:14.8px;line-height:14.8px;font-size:7.4px;color:#383838;white-space:nowrap;">执行命令行</div>
<svg style="position:absolute;left:904px;top:19.5px;" width="18" height="18" viewBox="0 0 18 18"><path d="M8.5 1.5c-3 0-4 1-4 3v2h4.5v1h-6c-2 0-2.5 2-2.5 3.5s0.8 3.5 2.5 3.5h1.5v-2.5c0-1.5 1-2.5 2.5-2.5h4c1.5 0 2-1 2-2v-3c0-2-1.5-3-4.5-3z" fill="#2f6db5"/><path d="M9.5 16.5c3 0 4-1 4-3v-2h-4.5v-1h6c2 0 2.5-2 2.5-3.5s-0.8-3.5-2.5-3.5h-1.5v2.5c0 1.5-1 2.5-2.5 2.5h-4c-1.5 0-2 1-2 2v3c0 2 1.5 3 4.5 3z" fill="#dcdcdc" stroke="#aaa" stroke-width="0.4"/><rect x="8" y="9" width="10" height="8" fill="#fff" stroke="#777" stroke-width="0.7"/><rect x="8" y="9" width="10" height="1.5" fill="#999"/></svg>
<div style="left:850px;width:200px;text-align:center;top:36.4px;height:14.8px;line-height:14.8px;font-size:7.4px;color:#383838;white-space:nowrap;">退出</div>
<svg style="position:absolute;left:941px;top:19.5px;" width="18" height="18" viewBox="0 0 18 18"><circle cx="9" cy="9" r="7.5" fill="#fff" stroke="#999" stroke-width="0.8"/><path d="M6.2 6a4.2 4.2 0 1 0 5.6 0" fill="none" stroke="#2e5aa8" stroke-width="1.5"/><path d="M9 3.5v5" stroke="#2e5aa8" stroke-width="1.5"/></svg>
<div style="left:0px;top:72px;width:1080px;height:14.5px;background:#f0f0f0;border-bottom:1px solid #dedede;box-sizing:border-box"></div>
<div style="left:0px;top:86.5px;width:1080px;height:14px;background:#f0f0f0;border-bottom:1px solid #dedede;box-sizing:border-box"></div>
<div style="left:3.5px;top:74px;width:70.5px;height:10.5px;background:#fff;border:1px solid #d5d5d5;box-sizing:border-box"></div>
<div style="left:5px;top:73.6px;height:11.8px;line-height:11.8px;font-size:5.9px;color:#333;white-space:nowrap;font-family:'Liberation Mono',monospace">230101AG</div>
<div style="left:35.5px;top:72.6px;height:13.4px;line-height:13.4px;font-size:6.7px;color:#333;white-space:nowrap;">普通房屋</div>
<svg style="position:absolute;left:66.5px;top:78.1px" width="4" height="2.4"><polygon points="0,0 4,0 2.0,2.4" fill="#555"/></svg>
<div style="left:1.5px;top:74.5px;width:0.8px;height:10px;border-left:1px dotted #aaa"></div>
<div style="left:77px;top:74.5px;width:0.8px;height:10px;border-left:1px dotted #aaa"></div>
<div style="left:283px;top:74.5px;width:0.8px;height:10px;border-left:1px dotted #aaa"></div>
<div style="left:315px;top:74.5px;width:0.8px;height:10px;border-left:1px dotted #aaa"></div>
<div style="left:350px;top:74.5px;width:0.8px;height:10px;border-left:1px dotted #aaa"></div>
<div style="left:630.5px;top:74.5px;width:0.8px;height:10px;border-left:1px dotted #aaa"></div>
<div style="left:-2px;width:200px;text-align:center;top:72.1px;height:14.4px;line-height:14.4px;font-size:7.2px;color:#444;white-space:nowrap;">添加书签</div>
<div style="left:120px;top:74px;width:39.5px;height:10.5px;background:#fff;border:1px solid #d5d5d5;box-sizing:border-box"></div>
<svg style="position:absolute;left:152.5px;top:78.1px" width="4" height="2.4"><polygon points="0,0 4,0 2.0,2.4" fill="#555"/></svg>
<div style="left:77px;width:200px;text-align:center;top:72.1px;height:14.4px;line-height:14.4px;font-size:7.2px;color:#444;white-space:nowrap;">跳转至</div>
<div style="left:110px;width:200px;text-align:center;top:72.1px;height:14.4px;line-height:14.4px;font-size:7.2px;color:#444;white-space:nowrap;">上一个</div>
<div style="left:142px;width:200px;text-align:center;top:72.1px;height:14.4px;line-height:14.4px;font-size:7.2px;color:#444;white-space:nowrap;">下一个</div>
<svg style="position:absolute;left:272.5px;top:74.5px;" width="10" height="10" viewBox="0 0 10 10"><path d="M1 5l4-4 4 4-4 4z" fill="#222"/><path d="M3 5l2-2 2 2-2 2z" fill="#fff"/></svg>
<svg style="position:absolute;left:290px;top:74.5px;" width="10" height="10" viewBox="0 0 10 10"><rect x="4" y="4" width="2" height="2" fill="#bbb"/></svg>
<svg style="position:absolute;left:305px;top:74.5px;" width="10" height="10" viewBox="0 0 10 10"><circle cx="6" cy="6" r="1.5" fill="none" stroke="#777" stroke-width="0.6"/><path d="M7.5 6v3" stroke="#777" stroke-width="0.6"/></svg>
<svg style="position:absolute;left:324px;top:74.5px;" width="10" height="10" viewBox="0 0 10 10"><rect x="1" y="2" width="8" height="6" fill="#fff" stroke="#aaa" stroke-width="0.6"/><path d="M3.5 4v2M6.5 4v2" stroke="#3a68b0" stroke-width="0.6"/></svg>
<svg style="position:absolute;left:339px;top:74.5px;" width="10" height="10" viewBox="0 0 10 10"><circle cx="6" cy="6" r="1.5" fill="none" stroke="#777" stroke-width="0.6"/><path d="M7.5 6v3" stroke="#777" stroke-width="0.6"/></svg>
<svg style="position:absolute;left:357px;top:74.5px;" width="10" height="10" viewBox="0 0 10 10"><path d="M2 7l4-4 2 2-4 4z" fill="#3a68b0"/><path d="M2 7l2 2" stroke="#888" stroke-width="0.6"/></svg>
<svg style="position:absolute;left:379px;top:74.5px;" width="10" height="10" viewBox="0 0 10 10"><path d="M5 0.5v9M0.5 5h9" stroke="#3a68b0" stroke-width="1.5"/><path d="M5 0l1.5 2h-3zM5 10l1.5-2h-3zM0 5l2-1.5v3zM10 5l-2-1.5v3z" fill="#3a68b0"/></svg>
<svg style="position:absolute;left:400px;top:74.5px;" width="10" height="10" viewBox="0 0 10 10"><circle cx="5" cy="5" r="3.5" fill="#fff" stroke="#999" stroke-width="0.6"/><path d="M5 3v4M3 5h4" stroke="#3a68b0" stroke-width="0.8"/></svg>
<svg style="position:absolute;left:421px;top:74.5px;" width="10" height="10" viewBox="0 0 10 10"><rect x="2" y="2" width="6" height="6" fill="#fff" stroke="#999" stroke-width="0.6"/><rect x="4" y="4" width="2" height="2" fill="#3a68b0"/></svg>
<svg style="position:absolute;left:442px;top:74.5px;" width="10" height="10" viewBox="0 0 10 10"><rect x="2" y="2" width="6" height="6" fill="#fff" stroke="#999" stroke-width="0.6"/><rect x="2" y="2" width="3" height="6" fill="#3a68b0"/></svg>
<svg style="position:absolute;left:464px;top:74.5px;" width="10" height="10" viewBox="0 0 10 10"><path d="M3 8v-5h3l-1.5-1.5M6 3l-1.5 1.5" fill="none" stroke="#3a68b0" stroke-width="0.8"/><circle cx="7" cy="7" r="1.5" fill="none" stroke="#888" stroke-width="0.6"/></svg>
<svg style="position:absolute;left:485px;top:74.5px;" width="10" height="10" viewBox="0 0 10 10"><path d="M2 9v-5l3-3h3v8z" fill="#fff" stroke="#888" stroke-width="0.6"/><path d="M5 1v3h-3" fill="#3a68b0"/></svg>
<svg style="position:absolute;left:506px;top:74.5px;" width="10" height="10" viewBox="0 0 10 10"><rect x="2" y="2" width="6" height="6" fill="#fff" stroke="#999" stroke-width="0.6"/><rect x="2" y="5" width="4" height="3" fill="#3a68b0"/></svg>
<svg style="position:absolute;left:527px;top:74.5px;" width="10" height="10" viewBox="0 0 10 10"><path d="M2 8l6-6M3 2l5 6" stroke="#7090c0" stroke-width="0.7"/><circle cx="2" cy="8" r="1" fill="none" stroke="#9a9a9a" stroke-width="0.6"/></svg>
<svg style="position:absolute;left:550px;top:74.5px;" width="10" height="10" viewBox="0 0 10 10"><path d="M1 6h5" stroke="#3a68b0" stroke-width="0.7" stroke-dasharray="1 0.8"/><path d="M7 8l1.5-5" stroke="#3a68b0" stroke-width="0.8"/></svg>
<svg style="position:absolute;left:571px;top:74.5px;" width="10" height="10" viewBox="0 0 10 10"><path d="M1.5 3.5v-2h2M6.5 1.5h2v2M8.5 6.5v2h-2M3.5 8.5h-2v-2" fill="none" stroke="#3a68b0" stroke-width="0.7"/><rect x="3" y="3" width="4" height="4" fill="none" stroke="#aaa" stroke-width="0.5"/></svg>
<svg style="position:absolute;left:592px;top:74.5px;" width="10" height="10" viewBox="0 0 10 10"><rect x="1.5" y="1.5" width="7" height="7" fill="#fff" stroke="#bbb" stroke-width="0.6"/><rect x="5" y="5" width="2.5" height="2.5" fill="#d03030"/></svg>
<svg style="position:absolute;left:614px;top:74.5px;" width="10" height="10" viewBox="0 0 10 10"><rect x="1" y="2" width="8" height="6" fill="#fff" stroke="#888" stroke-width="0.6"/><rect x="1" y="2" width="8" height="1.5" fill="#3a68b0"/></svg>
<svg style="position:absolute;left:638px;top:74.5px;" width="10" height="10" viewBox="0 0 10 10"><rect x="1" y="1" width="8" height="8" fill="#fff" stroke="#aaa" stroke-width="0.6"/><path d="M5 1v8M1 5h8" stroke="#3a68b0" stroke-width="0.6"/></svg>
<svg style="position:absolute;left:660px;top:74.5px;" width="10" height="10" viewBox="0 0 10 10"><rect x="1.5" y="1.5" width="7" height="7" fill="none" stroke="#aaa" stroke-width="0.6" stroke-dasharray="1 0.8"/></svg>
<svg style="position:absolute;left:681px;top:74.5px;" width="10" height="10" viewBox="0 0 10 10"><rect x="1.5" y="1.5" width="7" height="7" fill="none" stroke="#3a68b0" stroke-width="0.8"/><rect x="3.5" y="3.5" width="3" height="3" fill="none" stroke="#3a68b0" stroke-width="0.8"/></svg>
<svg style="position:absolute;left:703px;top:74.5px;" width="10" height="10" viewBox="0 0 10 10"><rect x="2" y="1.5" width="6" height="7" fill="#fff" stroke="#777" stroke-width="0.6"/><path d="M1 9h7" stroke="#3a68b0" stroke-width="1.3"/></svg>
<svg style="position:absolute;left:724px;top:74.5px;" width="10" height="10" viewBox="0 0 10 10"><rect x="1.5" y="1.5" width="7" height="7" fill="none" stroke="#aaa" stroke-width="0.6"/><circle cx="5" cy="5" r="2" fill="none" stroke="#3a68b0" stroke-width="0.7"/></svg>
<svg style="position:absolute;left:746px;top:74.5px;" width="10" height="10" viewBox="0 0 10 10"><rect x="1" y="2" width="8" height="6" fill="#fff" stroke="#aaa" stroke-width="0.6"/><path d="M5 2v6" stroke="#aaa" stroke-width="0.5"/><rect x="2" y="4" width="2" height="2" fill="none" stroke="#3a68b0" stroke-width="0.5"/><rect x="6" y="4" width="2" height="2" fill="none" stroke="#3a68b0" stroke-width="0.5"/></svg>
<svg style="position:absolute;left:767px;top:74.5px;" width="10" height="10" viewBox="0 0 10 10"><circle cx="3" cy="3" r="1.3" fill="#3a68b0"/><circle cx="7" cy="3" r="1.3" fill="#fff" stroke="#3a68b0" stroke-width="0.6"/><circle cx="5" cy="7.5" r="1.3" fill="#3a68b0"/><path d="M3 3l2 4.5 2-4.5" fill="none" stroke="#888" stroke-width="0.5"/></svg>
<svg style="position:absolute;left:810px;top:74.5px;" width="10" height="10" viewBox="0 0 10 10"><path d="M3 6l2-2 2 2-2 2z" fill="none" stroke="#3a68b0" stroke-width="0.7"/><path d="M5 3l2-2 2 2-2 2z" fill="#fff" stroke="#888" stroke-width="0.6"/></svg>
<svg style="position:absolute;left:831px;top:74.5px;" width="10" height="10" viewBox="0 0 10 10"><ellipse cx="5" cy="3" rx="3.5" ry="1.5" fill="#ddd" stroke="#888" stroke-width="0.6"/><path d="M1.5 3v5c0 1 7 1 7 0v-5" fill="#ddd" stroke="#888" stroke-width="0.6"/><circle cx="7.5" cy="8" r="1.4" fill="#3a68b0"/></svg>
<svg style="position:absolute;left:852px;top:74.5px;" width="10" height="10" viewBox="0 0 10 10"><ellipse cx="5" cy="3" rx="3.5" ry="1.5" fill="#ddd" stroke="#999" stroke-width="0.6"/><path d="M1.5 3v5c0 1 7 1 7 0v-5" fill="#ddd" stroke="#999" stroke-width="0.6"/></svg>
<svg style="position:absolute;left:7.5px;top:88.5px;" width="10" height="10" viewBox="0 0 10 10"><path d="M1.5 2l7 7" stroke="#3a68b0" stroke-width="0.9"/><circle cx="7.5" cy="2.5" r="1.3" fill="#f0a030"/></svg>
<svg style="position:absolute;left:29px;top:88.5px;" width="10" height="10" viewBox="0 0 10 10"><path d="M1.5 2l7 7" stroke="#3a68b0" stroke-width="0.9"/><rect x="6.5" y="1.5" width="2.2" height="2.2" fill="#d03030"/></svg>
<svg style="position:absolute;left:50.5px;top:88.5px;" width="10" height="10" viewBox="0 0 10 10"><path d="M1.5 2l7 7" stroke="#3a68b0" stroke-width="0.9"/><circle cx="7.5" cy="2.5" r="1.4" fill="#aaa"/></svg>
<svg style="position:absolute;left:72px;top:88.5px;" width="10" height="10" viewBox="0 0 10 10"><path d="M1.5 2l7 7" stroke="#3a68b0" stroke-width="0.9"/><path d="M7.5 1l1.5 1.5-1.5 1.5-1.5-1.5z" fill="#999"/></svg>
<svg style="position:absolute;left:93px;top:88.5px;" width="10" height="10" viewBox="0 0 10 10"><path d="M1.5 2h7v2.5h-4l3 4" fill="none" stroke="#9a9a9a" stroke-width="0.8"/><circle cx="7.5" cy="8.5" r="1" fill="#3a68b0"/></svg>
<svg style="position:absolute;left:115px;top:88.5px;" width="10" height="10" viewBox="0 0 10 10"><path d="M1 3.5h8M1 6.5h8" stroke="#3a68b0" stroke-width="1"/></svg>
<svg style="position:absolute;left:136px;top:88.5px;" width="10" height="10" viewBox="0 0 10 10"><path d="M1 2h8M1 5h8M1 8h8" stroke="#8aa0c8" stroke-width="0.7" stroke-dasharray="1 0.6"/></svg>
<svg style="position:absolute;left:157.5px;top:88.5px;" width="10" height="10" viewBox="0 0 10 10"><rect x="1.5" y="1.5" width="7" height="7" fill="#fff" stroke="#bbb" stroke-width="0.6"/><rect x="1.5" y="5" width="3.5" height="3.5" fill="#3a68b0"/><rect x="6.5" y="1" width="2" height="2" fill="#f0a030"/></svg>
<svg style="position:absolute;left:179px;top:88.5px;" width="10" height="10" viewBox="0 0 10 10"><rect x="1.5" y="1.5" width="7" height="7" fill="#fff" stroke="#bbb" stroke-width="0.6"/><rect x="1.5" y="5" width="3.5" height="3.5" fill="#3a68b0"/><rect x="6.5" y="1" width="2" height="2" fill="#d03030"/></svg>
<svg style="position:absolute;left:200.5px;top:88.5px;" width="10" height="10" viewBox="0 0 10 10"><rect x="1" y="1.5" width="8" height="7" fill="none" stroke="#8aa0c8" stroke-width="0.8"/><rect x="3" y="3.5" width="4" height="3" fill="none" stroke="#8aa0c8" stroke-width="0.6"/></svg>
<svg style="position:absolute;left:222px;top:88.5px;" width="10" height="10" viewBox="0 0 10 10"><path d="M2 7a2 2 0 0 1 1-4a2.5 2.5 0 0 1 5 1a1.5 1.5 0 0 1 0 3z" fill="none" stroke="#8aa0c8" stroke-width="0.8"/></svg>
<svg style="position:absolute;left:243px;top:88.5px;" width="10" height="10" viewBox="0 0 10 10"><path d="M2 8l6-6M3 2l5 6" stroke="#7090c0" stroke-width="0.7"/><circle cx="2" cy="8" r="1" fill="none" stroke="#9a9a9a" stroke-width="0.6"/></svg>
<svg style="position:absolute;left:262.5px;top:88.5px;" width="10" height="10" viewBox="0 0 10 10"><path d="M1.5 2h7M5 2v7" stroke="#c8a070" stroke-width="0.8"/></svg>
<svg style="position:absolute;left:286px;top:88.5px;" width="10" height="10" viewBox="0 0 10 10"><path d="M2 9l3-8 3 8M3.3 6h3.4" fill="none" stroke="#8aa0c8" stroke-width="0.8"/></svg>
<svg style="position:absolute;left:307.5px;top:88.5px;" width="10" height="10" viewBox="0 0 10 10"><path d="M2 8l6-6" stroke="#7090c0" stroke-width="0.7"/><rect x="1" y="7" width="1.6" height="1.6" fill="#7090c0"/><rect x="7" y="1" width="1.6" height="1.6" fill="#7090c0"/></svg>
<svg style="position:absolute;left:329px;top:88.5px;" width="10" height="10" viewBox="0 0 10 10"><rect x="1.5" y="2" width="7" height="6" fill="#fff" stroke="#aaa" stroke-width="0.6"/><rect x="3" y="4" width="3" height="2" fill="#ccc"/></svg>
<svg style="position:absolute;left:369px;top:88.5px;" width="10" height="10" viewBox="0 0 10 10"><rect x="1" y="1" width="8" height="8" fill="#fff" stroke="#aaa" stroke-width="0.6"/><path d="M5 1v8M1 5h8" stroke="#3a68b0" stroke-width="0.6"/></svg>
<svg style="position:absolute;left:391px;top:88.5px;" width="10" height="10" viewBox="0 0 10 10"><rect x="1.5" y="1.5" width="7" height="7" fill="none" stroke="#aaa" stroke-width="0.6" stroke-dasharray="1 0.8"/></svg>
<svg style="position:absolute;left:412px;top:88.5px;" width="10" height="10" viewBox="0 0 10 10"><rect x="1.5" y="1.5" width="7" height="7" fill="none" stroke="#3a68b0" stroke-width="0.8"/><rect x="3.5" y="3.5" width="3" height="3" fill="none" stroke="#3a68b0" stroke-width="0.8"/></svg>
<svg style="position:absolute;left:433px;top:88.5px;" width="10" height="10" viewBox="0 0 10 10"><rect x="2" y="1.5" width="6" height="7" fill="#fff" stroke="#777" stroke-width="0.6"/><path d="M1 9h7" stroke="#3a68b0" stroke-width="1.3"/></svg>
<svg style="position:absolute;left:454px;top:88.5px;" width="10" height="10" viewBox="0 0 10 10"><rect x="2" y="1.5" width="6" height="7" fill="#fff" stroke="#777" stroke-width="0.6"/><path d="M8 1.5v7.5" stroke="#3a68b0" stroke-width="1.3"/></svg>
<svg style="position:absolute;left:476px;top:88.5px;" width="10" height="10" viewBox="0 0 10 10"><rect x="1.5" y="1.5" width="7" height="7" fill="none" stroke="#aaa" stroke-width="0.6"/><circle cx="5" cy="5" r="2" fill="none" stroke="#3a68b0" stroke-width="0.7"/></svg>
<svg style="position:absolute;left:497px;top:88.5px;" width="10" height="10" viewBox="0 0 10 10"><path d="M2 4l2-2h5l-2 2z M2 6l2-2h5l-2 2z M2 8l2-2h5l-2 2z" fill="#fff" stroke="#3a68b0" stroke-width="0.6"/></svg>
<svg style="position:absolute;left:519px;top:88.5px;" width="10" height="10" viewBox="0 0 10 10"><rect x="1.5" y="2" width="7" height="2" fill="#fff" stroke="#777" stroke-width="0.6"/><rect x="1.5" y="5" width="7" height="3" fill="#fff" stroke="#777" stroke-width="0.6"/></svg>
<svg style="position:absolute;left:540.5px;top:88.5px;" width="10" height="10" viewBox="0 0 10 10"><rect x="1" y="2" width="8" height="6" fill="#fff" stroke="#aaa" stroke-width="0.6"/><path d="M5 2v6" stroke="#aaa" stroke-width="0.5"/><rect x="2" y="4" width="2" height="2" fill="none" stroke="#3a68b0" stroke-width="0.5"/><rect x="6" y="4" width="2" height="2" fill="none" stroke="#3a68b0" stroke-width="0.5"/></svg>
<svg style="position:absolute;left:562px;top:88.5px;" width="10" height="10" viewBox="0 0 10 10"><path d="M1 8l3-5h5l-2 5z" fill="#3a68b0"/><path d="M4 3l2-2h3v2" fill="none" stroke="#777" stroke-width="0.6"/></svg>
<svg style="position:absolute;left:609px;top:88.5px;" width="10" height="10" viewBox="0 0 10 10"><rect x="1.5" y="1.5" width="7" height="7" fill="#fff" stroke="#999" stroke-width="0.6"/><path d="M2.5 7l2-3 2 2 1-1" fill="none" stroke="#3a68b0" stroke-width="0.7"/></svg>
<svg style="position:absolute;left:630px;top:88.5px;" width="10" height="10" viewBox="0 0 10 10"><rect x="1.5" y="1.5" width="7" height="7" fill="#fff" stroke="#999" stroke-width="0.6"/><path d="M2.5 7l2-3 2 2 1-1" fill="none" stroke="#3a68b0" stroke-width="0.7"/></svg>
<svg style="position:absolute;left:652px;top:88.5px;" width="10" height="10" viewBox="0 0 10 10"><path d="M5 1l4 4-4 4-4-4z" fill="none" stroke="#3a68b0" stroke-width="1.2"/></svg>
<svg style="position:absolute;left:673px;top:88.5px;" width="10" height="10" viewBox="0 0 10 10"><rect x="1.5" y="1.5" width="7" height="7" fill="none" stroke="#aaa" stroke-width="0.6" stroke-dasharray="1 0.8"/></svg>
<svg style="position:absolute;left:695px;top:88.5px;" width="10" height="10" viewBox="0 0 10 10"><rect x="1" y="1" width="8" height="8" fill="#fff" stroke="#aaa" stroke-width="0.6"/><path d="M5 1v8M1 5h8" stroke="#3a68b0" stroke-width="0.6"/></svg>
<svg style="position:absolute;left:716px;top:88.5px;" width="10" height="10" viewBox="0 0 10 10"><rect x="1.5" y="1.5" width="7" height="7" fill="none" stroke="#3a68b0" stroke-width="1"/></svg>
<svg style="position:absolute;left:737px;top:88.5px;" width="10" height="10" viewBox="0 0 10 10"><path d="M2 1h5l2 2v6h-7z" fill="#fff" stroke="#888" stroke-width="0.6"/><path d="M3.5 4h3M3.5 6h3" stroke="#888" stroke-width="0.5"/></svg>
<svg style="position:absolute;left:759px;top:88.5px;" width="10" height="10" viewBox="0 0 10 10"><circle cx="3.5" cy="6" r="2" fill="none" stroke="#3a68b0" stroke-width="0.7"/><circle cx="6.5" cy="4" r="2" fill="none" stroke="#3a68b0" stroke-width="0.7"/></svg>
<svg style="position:absolute;left:780px;top:88.5px;" width="10" height="10" viewBox="0 0 10 10"><circle cx="5" cy="5" r="3.5" fill="none" stroke="#999" stroke-width="1.2" stroke-dasharray="1.2 0.8"/><circle cx="5" cy="5" r="1.6" fill="none" stroke="#3a68b0" stroke-width="0.7"/></svg>
<svg style="position:absolute;left:801px;top:88.5px;" width="10" height="10" viewBox="0 0 10 10"><path d="M2 1h5l2 2v6h-7z" fill="#fff" stroke="#888" stroke-width="0.6"/><path d="M3.5 4h3M3.5 6h3" stroke="#888" stroke-width="0.5"/></svg>
<div style="left:345px;top:88.5px;width:0.8px;height:10px;border-left:1px dotted #aaa"></div>
<div style="left:578px;top:88.5px;width:0.8px;height:10px;border-left:1px dotted #aaa"></div>
<div style="left:255.5px;width:200px;text-align:center;top:87.0px;height:13.0px;line-height:13.0px;font-size:6.5px;color:#444;white-space:nowrap;">3D</div>
<div style="left:492px;width:200px;text-align:center;top:86.5px;height:14px;line-height:14px;font-size:7px;color:#444;white-space:nowrap;">航测</div>
<div style="left:1.5px;top:88.5px;width:0.8px;height:10px;border-left:1px dotted #aaa"></div>
<div style="left:197px;top:101px;width:716px;height:10px;background:#f0f0f0"></div>
<div style="left:197.5px;top:102px;width:53.5px;height:9px;background:#f5f5f5;border:1px solid #d5d5d5;border-bottom:none;box-sizing:border-box"></div>
<div style="left:203.5px;top:100.8px;height:11.6px;line-height:11.6px;font-size:5.8px;color:#555;white-space:nowrap;font-family:'Liberation Mono',monospace">3363.igep</div>
<div style="left:236px;top:102.2px;width:8px;height:8px;background:#e8704a;border-radius:1px"></div>
<svg style="position:absolute;left:237.5px;top:104px;" width="5" height="5" viewBox="0 0 5 5"><path d="M1 1l3 3M4 1l-3 3" stroke="#fff" stroke-width="1.1"/></svg>
<div style="left:196.5px;top:110px;width:338px;height:374.5px;background:#f4f4f4;border:1px solid #c8c8c8;box-sizing:border-box"></div>
<svg style="position:absolute;left:197.5px;top:110.7px;background:#000" width="336.5" height="371.3" viewBox="0 0 336.5 371.3"><line x1="97.5" y1="0.29999999999999716" x2="144.5" y2="345.3" stroke="#5a5a5a" stroke-width="0.7"/><line x1="-0.5" y1="365.3" x2="338.5" y2="319.3" stroke="#5a5a5a" stroke-width="0.7"/><polygon transform="translate(126.5,117.8) rotate(40)" points="-22.5,-6.5 -19.5,-6.5 -19.5,-8.5 -4.5,-8.5 -4.5,-7.0 -1.5,-7.0 -1.5,-4.5 1.5,-4.5 1.5,-9.0 4.5,-9.0 4.5,-10.0 19.5,-10.0 19.5,-8.0 22.5,-8.0 22.5,5.0 19.5,5.0 19.5,7.0 4.5,7.0 4.5,5.5 1.5,5.5 1.5,4.5 -1.5,4.5 -1.5,7.5 -4.5,7.5 -4.5,8.5 -19.5,8.5 -19.5,6.5 -22.5,6.5" fill="#640064" stroke="#c818c8" stroke-width="0.7"/><polygon transform="translate(88.10000000000002,150.10000000000002) rotate(40)" points="-23.5,-6.5 -20.5,-6.5 -20.5,-8.5 -4.5,-8.5 -4.5,-7.0 -1.5,-7.0 -1.5,-4.5 1.5,-4.5 1.5,-9.0 4.5,-9.0 4.5,-10.0 20.5,-10.0 20.5,-8.0 23.5,-8.0 23.5,5.0 20.5,5.0 20.5,7.0 4.5,7.0 4.5,5.5 1.5,5.5 1.5,4.5 -1.5,4.5 -1.5,7.5 -4.5,7.5 -4.5,8.5 -20.5,8.5 -20.5,6.5 -23.5,6.5" fill="#640064" stroke="#c818c8" stroke-width="0.7"/><polygon transform="translate(54.5,188.60000000000002) rotate(40)" points="-32.0,-6.5 -29.0,-6.5 -29.0,-8.5 -4.5,-8.5 -4.5,-7.0 -1.5,-7.0 -1.5,-4.5 1.5,-4.5 1.5,-9.0 4.5,-9.0 4.5,-10.0 29.0,-10.0 29.0,-8.0 32.0,-8.0 32.0,5.0 29.0,5.0 29.0,7.0 4.5,7.0 4.5,5.5 1.5,5.5 1.5,4.5 -1.5,4.5 -1.5,7.5 -4.5,7.5 -4.5,8.5 -29.0,8.5 -29.0,6.5 -32.0,6.5" fill="#640064" stroke="#c818c8" stroke-width="0.7"/><polygon transform="translate(22.5,223.3) rotate(40)" points="-33.0,-6.5 -30.0,-6.5 -30.0,-8.5 -4.5,-8.5 -4.5,-7.0 -1.5,-7.0 -1.5,-4.5 1.5,-4.5 1.5,-9.0 4.5,-9.0 4.5,-10.0 30.0,-10.0 30.0,-8.0 33.0,-8.0 33.0,5.0 30.0,5.0 30.0,7.0 4.5,7.0 4.5,5.5 1.5,5.5 1.5,4.5 -1.5,4.5 -1.5,7.5 -4.5,7.5 -4.5,8.5 -30.0,8.5 -30.0,6.5 -33.0,6.5" fill="#640064" stroke="#c818c8" stroke-width="0.7"/><polygon transform="translate(165.39999999999998,168.90000000000003) rotate(40)" points="-22.5,-6.5 -19.5,-6.5 -19.5,-8.5 -4.5,-8.5 -4.5,-7.0 -1.5,-7.0 -1.5,-4.5 1.5,-4.5 1.5,-9.0 4.5,-9.0 4.5,-10.0 19.5,-10.0 19.5,-8.0 22.5,-8.0 22.5,5.0 19.5,5.0 19.5,7.0 4.5,7.0 4.5,5.5 1.5,5.5 1.5,4.5 -1.5,4.5 -1.5,7.5 -4.5,7.5 -4.5,8.5 -19.5,8.5 -19.5,6.5 -22.5,6.5" fill="#640064" stroke="#c818c8" stroke-width="0.7"/><polygon transform="translate(125.89999999999998,204.3) rotate(40)" points="-22.0,-6.5 -19.0,-6.5 -19.0,-8.5 -4.5,-8.5 -4.5,-7.0 -1.5,-7.0 -1.5,-4.5 1.5,-4.5 1.5,-9.0 4.5,-9.0 4.5,-10.0 19.0,-10.0 19.0,-8.0 22.0,-8.0 22.0,5.0 19.0,5.0 19.0,7.0 4.5,7.0 4.5,5.5 1.5,5.5 1.5,4.5 -1.5,4.5 -1.5,7.5 -4.5,7.5 -4.5,8.5 -19.0,8.5 -19.0,6.5 -22.0,6.5" fill="#640064" stroke="#c818c8" stroke-width="0.7"/><polygon transform="translate(196.7,219.10000000000002) rotate(40)" points="-21.5,-6.5 -18.5,-6.5 -18.5,-8.5 -4.5,-8.5 -4.5,-7.0 -1.5,-7.0 -1.5,-4.5 1.5,-4.5 1.5,-9.0 4.5,-9.0 4.5,-10.0 18.5,-10.0 18.5,-8.0 21.5,-8.0 21.5,5.0 18.5,5.0 18.5,7.0 4.5,7.0 4.5,5.5 1.5,5.5 1.5,4.5 -1.5,4.5 -1.5,7.5 -4.5,7.5 -4.5,8.5 -18.5,8.5 -18.5,6.5 -21.5,6.5" fill="#640064" stroke="#c818c8" stroke-width="0.7"/><polygon transform="translate(156.10000000000002,262.2) rotate(40)" points="-24.0,-6.5 -21.0,-6.5 -21.0,-8.5 -4.5,-8.5 -4.5,-7.0 -1.5,-7.0 -1.5,-4.5 1.5,-4.5 1.5,-9.0 4.5,-9.0 4.5,-10.0 21.0,-10.0 21.0,-8.0 24.0,-8.0 24.0,5.0 21.0,5.0 21.0,7.0 4.5,7.0 4.5,5.5 1.5,5.5 1.5,4.5 -1.5,4.5 -1.5,7.5 -4.5,7.5 -4.5,8.5 -21.0,8.5 -21.0,6.5 -24.0,6.5" fill="#640064" stroke="#c818c8" stroke-width="0.7"/><polygon transform="translate(36.5,306.5) rotate(40)" points="-23.0,-6.5 -20.0,-6.5 -20.0,-8.5 -4.5,-8.5 -4.5,-7.0 -1.5,-7.0 -1.5,-4.5 1.5,-4.5 1.5,-9.0 4.5,-9.0 4.5,-10.0 20.0,-10.0 20.0,-8.0 23.0,-8.0 23.0,5.0 20.0,5.0 20.0,7.0 4.5,7.0 4.5,5.5 1.5,5.5 1.5,4.5 -1.5,4.5 -1.5,7.5 -4.5,7.5 -4.5,8.5 -20.0,8.5 -20.0,6.5 -23.0,6.5" fill="#640064" stroke="#c818c8" stroke-width="0.7"/><polygon transform="translate(112.0,305.3) rotate(40)" points="-29.0,-6.5 -26.0,-6.5 -26.0,-8.5 -4.5,-8.5 -4.5,-7.0 -1.5,-7.0 -1.5,-4.5 1.5,-4.5 1.5,-9.0 4.5,-9.0 4.5,-10.0 26.0,-10.0 26.0,-8.0 29.0,-8.0 29.0,5.0 26.0,5.0 26.0,7.0 4.5,7.0 4.5,5.5 1.5,5.5 1.5,4.5 -1.5,4.5 -1.5,7.5 -4.5,7.5 -4.5,8.5 -26.0,8.5 -26.0,6.5 -29.0,6.5" fill="#640064" stroke="#c818c8" stroke-width="0.7"/><polygon transform="translate(84.5,346.8) rotate(40)" points="-22.5,-6.5 -19.5,-6.5 -19.5,-8.5 -4.5,-8.5 -4.5,-7.0 -1.5,-7.0 -1.5,-4.5 1.5,-4.5 1.5,-9.0 4.5,-9.0 4.5,-10.0 19.5,-10.0 19.5,-8.0 22.5,-8.0 22.5,5.0 19.5,5.0 19.5,7.0 4.5,7.0 4.5,5.5 1.5,5.5 1.5,4.5 -1.5,4.5 -1.5,7.5 -4.5,7.5 -4.5,8.5 -19.5,8.5 -19.5,6.5 -22.5,6.5" fill="#640064" stroke="#c818c8" stroke-width="0.7"/><polygon transform="translate(-2.5,273.3) rotate(40)" points="-20.0,-6.5 -17.0,-6.5 -17.0,-8.5 -4.5,-8.5 -4.5,-7.0 -1.5,-7.0 -1.5,-4.5 1.5,-4.5 1.5,-9.0 4.5,-9.0 4.5,-10.0 17.0,-10.0 17.0,-8.0 20.0,-8.0 20.0,5.0 17.0,5.0 17.0,7.0 4.5,7.0 4.5,5.5 1.5,5.5 1.5,4.5 -1.5,4.5 -1.5,7.5 -4.5,7.5 -4.5,8.5 -17.0,8.5 -17.0,6.5 -20.0,6.5" fill="#640064" stroke="#c818c8" stroke-width="0.7"/><polygon transform="translate(286.7,47.8) rotate(9)" points="-28.0,-8.0 -20.0,-8.0 -20.0,-9.6 -12.0,-9.6 -12.0,-8.0 -4.0,-8.0 -4.0,-9.6 4.0,-9.6 4.0,-8.0 12.0,-8.0 12.0,-9.6 20.0,-9.6 20.0,-8.0 28.0,-8.0 28.0,9.6 20.0,9.6 20.0,8.0 12.0,8.0 12.0,9.6 4.0,9.6 4.0,8.0 -4.0,8.0 -4.0,9.6 -12.0,9.6 -12.0,8.0 -20.0,8.0 -20.0,9.6 -28.0,9.6" fill="#680068" stroke="#d020d0" stroke-width="0.8"/><polygon transform="translate(239.0,78.49999999999999) rotate(7)" points="-20.5,-8.0 -12.3,-8.0 -12.3,-9.6 -4.1,-9.6 -4.1,-8.0 4.1,-8.0 4.1,-9.6 12.3,-9.6 12.3,-8.0 20.5,-8.0 20.5,9.6 12.3,9.6 12.3,8.0 4.1,8.0 4.1,9.6 -4.1,9.6 -4.1,8.0 -12.3,8.0 -12.3,9.6 -20.5,9.6" fill="#680068" stroke="#d020d0" stroke-width="0.8"/><polygon transform="translate(308.5,88.8) rotate(10)" points="-36.0,-8.0 -27.0,-8.0 -27.0,-9.6 -18.0,-9.6 -18.0,-8.0 -9.0,-8.0 -9.0,-9.6 0.0,-9.6 0.0,-8.0 9.0,-8.0 9.0,-9.6 18.0,-9.6 18.0,-8.0 27.0,-8.0 27.0,-9.6 36.0,-9.6 36.0,8.0 27.0,8.0 27.0,9.6 18.0,9.6 18.0,8.0 9.0,8.0 9.0,9.6 0.0,9.6 0.0,8.0 -9.0,8.0 -9.0,9.6 -18.0,9.6 -18.0,8.0 -27.0,8.0 -27.0,9.6 -36.0,9.6" fill="#680068" stroke="#d020d0" stroke-width="0.8"/><polygon transform="translate(217.3,110.49999999999999) rotate(9)" points="-27.2,-8.0 -19.5,-8.0 -19.5,-9.6 -11.7,-9.6 -11.7,-8.0 -3.9,-8.0 -3.9,-9.6 3.9,-9.6 3.9,-8.0 11.7,-8.0 11.7,-9.6 19.5,-9.6 19.5,-8.0 27.2,-8.0 27.2,9.6 19.5,9.6 19.5,8.0 11.7,8.0 11.7,9.6 3.9,9.6 3.9,8.0 -3.9,8.0 -3.9,9.6 -11.7,9.6 -11.7,8.0 -19.5,8.0 -19.5,9.6 -27.2,9.6" fill="#680068" stroke="#d020d0" stroke-width="0.8"/><polygon transform="translate(255.2,177.60000000000002) rotate(25)" points="-12.0,-8.5 -4.0,-8.5 -4.0,-10.1 4.0,-10.1 4.0,-8.5 12.0,-8.5 12.0,10.1 4.0,10.1 4.0,8.5 -4.0,8.5 -4.0,10.1 -12.0,10.1" fill="#680068" stroke="#d020d0" stroke-width="0.8"/><polygon transform="translate(323.5,16.799999999999997) rotate(10)" points="-28.0,-8.5 -20.0,-8.5 -20.0,-10.1 -12.0,-10.1 -12.0,-8.5 -4.0,-8.5 -4.0,-10.1 4.0,-10.1 4.0,-8.5 12.0,-8.5 12.0,-10.1 20.0,-10.1 20.0,-8.5 28.0,-8.5 28.0,10.1 20.0,10.1 20.0,8.5 12.0,8.5 12.0,10.1 4.0,10.1 4.0,8.5 -4.0,8.5 -4.0,10.1 -12.0,10.1 -12.0,8.5 -20.0,8.5 -20.0,10.1 -28.0,10.1" fill="#680068" stroke="#d020d0" stroke-width="0.8"/><polygon transform="translate(347.5,55.3) rotate(9)" points="-20.0,-8.0 -12.0,-8.0 -12.0,-9.6 -4.0,-9.6 -4.0,-8.0 4.0,-8.0 4.0,-9.6 12.0,-9.6 12.0,-8.0 20.0,-8.0 20.0,9.6 12.0,9.6 12.0,8.0 4.0,8.0 4.0,9.6 -4.0,9.6 -4.0,8.0 -12.0,8.0 -12.0,9.6 -20.0,9.6" fill="#680068" stroke="#d020d0" stroke-width="0.8"/><polygon transform="translate(285.2,20.299999999999997) rotate(-35)" points="-8.5,-3.5 0.0,-3.5 0.0,-5.1 8.5,-5.1 8.5,3.5 0.0,3.5 0.0,5.1 -8.5,5.1" fill="#680068" stroke="#d020d0" stroke-width="0.8"/><polygon transform="translate(288.5,120.49999999999999) rotate(10)" points="-32.5,-8.0 -24.4,-8.0 -24.4,-9.6 -16.2,-9.6 -16.2,-8.0 -8.1,-8.0 -8.1,-9.6 0.0,-9.6 0.0,-8.0 8.1,-8.0 8.1,-9.6 16.2,-9.6 16.2,-8.0 24.4,-8.0 24.4,-9.6 32.5,-9.6 32.5,8.0 24.4,8.0 24.4,9.6 16.2,9.6 16.2,8.0 8.1,8.0 8.1,9.6 0.0,9.6 0.0,8.0 -8.1,8.0 -8.1,9.6 -16.2,9.6 -16.2,8.0 -24.4,8.0 -24.4,9.6 -32.5,9.6" fill="#680068" stroke="#d020d0" stroke-width="1.4"/><polygon transform="translate(313.5,119.3) rotate(-40)" points="-8.0,-7.0 0.0,-7.0 0.0,-8.6 8.0,-8.6 8.0,7.0 0.0,7.0 0.0,8.6 -8.0,8.6" fill="#680068" stroke="#d020d0" stroke-width="1.4"/><polygon transform="translate(288.5,120.49999999999999) rotate(10)" points="-32.5,-8.0 -24.4,-8.0 -24.4,-9.6 -16.2,-9.6 -16.2,-8.0 -8.1,-8.0 -8.1,-9.6 0.0,-9.6 0.0,-8.0 8.1,-8.0 8.1,-9.6 16.2,-9.6 16.2,-8.0 24.4,-8.0 24.4,-9.6 32.5,-9.6 32.5,8.0 24.4,8.0 24.4,9.6 16.2,9.6 16.2,8.0 8.1,8.0 8.1,9.6 0.0,9.6 0.0,8.0 -8.1,8.0 -8.1,9.6 -16.2,9.6 -16.2,8.0 -24.4,8.0 -24.4,9.6 -32.5,9.6" fill="#680068" stroke="none" stroke-width="0.8"/><polygon transform="translate(313.5,119.3) rotate(-40)" points="-8.0,-7.0 0.0,-7.0 0.0,-8.6 8.0,-8.6 8.0,7.0 0.0,7.0 0.0,8.6 -8.0,8.6" fill="#680068" stroke="none" stroke-width="0.8"/><polygon points="216.7,140.1 220.0,138.5 223.5,138.8 225.5,137.1 229.5,137.3 231.5,139.3 239.5,140.3 241.5,139.1 244.5,139.3 246.5,140.8 250.8,140.3 252.5,139.3 255.5,139.8 257.5,141.8 264.5,142.8 268.5,144.1 271.5,143.3 274.5,144.3 278.3,147.3 287.1,154.3 282.5,161.3 279.2,166.0 274.5,163.8 270.5,162.8 269.2,161.8 259.5,160.8 257.5,159.8 249.2,158.8 246.5,159.8 242.5,157.3 234.5,156.8 232.5,156.0 226.5,156.3 223.5,154.8 216.7,154.3" fill="#640064" stroke="#00ff00" stroke-width="1.9" stroke-linejoin="round"/><rect x="249.0" y="149.3" width="6" height="6" fill="#0000ff" stroke="#bbbbff" stroke-width="0.6"/><text x="309.3" y="9.799999999999997" font-size="8" fill="#ece4ec" font-family="Liberation Serif">N</text><path d="M312.8 12.799999999999997L307.3 32.3L314.5 23.299999999999997L323.5 30.299999999999997Z" fill="#cfcfcf"/><path d="M312.8 12.799999999999997L309.0 26.299999999999997L314.5 23.299999999999997L318.5 23.799999999999997Z" fill="#e8cde8"/><text x="310.5" y="40.3" font-size="8" fill="#e8e8e8" font-family="Liberation Sans">8°</text></svg>
<div style="left:197.5px;top:482px;width:336.5px;height:2px;background:#9a9a9a"></div>
<div style="left:534px;top:110px;width:380px;height:374.5px;background:#f8f8f8;border:1px solid #c8c8c8;box-sizing:border-box"></div>
<div style="left:538.2px;top:111px;width:0.9px;height:372px;background:#808080"></div>
<svg style="position:absolute;left:539px;top:111.5px;background:#008080" width="371.0" height="370.5" viewBox="0 0 371.0 370.5"><defs>
<pattern id="win" width="3" height="3.2" patternUnits="userSpaceOnUse"><rect x="0.6" y="0.8" width="1.6" height="1.6" fill="#3b3f47" opacity="0.75"/></pattern>
<pattern id="win2" width="3" height="3.2" patternUnits="userSpaceOnUse"><rect x="0.8" y="0.8" width="1.2" height="1.4" fill="#4a4e57" opacity="0.6"/></pattern>
<pattern id="roofpat" width="4" height="3" patternUnits="userSpaceOnUse"><rect x="0" y="0" width="2" height="1.5" fill="#3d4046"/><rect x="2" y="1.5" width="2" height="1.5" fill="#b5b8be"/></pattern>
<pattern id="wb" width="3" height="3.2" patternUnits="userSpaceOnUse"><rect x="0.5" y="0.8" width="1.8" height="1.8" fill="#2e2a26" opacity="0.8"/></pattern>
<pattern id="wb2" width="3" height="3.2" patternUnits="userSpaceOnUse"><rect x="0.5" y="0.8" width="1.6" height="1.6" fill="#2e2a26" opacity="0.6"/></pattern>
<pattern id="wr" width="3" height="3.2" patternUnits="userSpaceOnUse"><rect x="0.5" y="0.8" width="1.8" height="1.8" fill="#5a0000" opacity="0.9"/></pattern>
<pattern id="wr2" width="3" height="3.2" patternUnits="userSpaceOnUse"><rect x="0.5" y="0.8" width="1.8" height="1.8" fill="#5a0000" opacity="0.9"/></pattern>
</defs><defs><pattern id="pf1" width="3.6" height="3" patternUnits="userSpaceOnUse" patternTransform="translate(341,35.5) skewY(17.2)"><rect width="3.6" height="3" fill="#716d68"/><rect x="0" y="0" width="1.5" height="3" fill="#9a958e" opacity="0.8"/><rect x="1.8" y="0.5" width="1.5" height="2" fill="#24221f" opacity="0.9"/></pattern>
<pattern id="pe1" width="3" height="3.4" patternUnits="userSpaceOnUse" patternTransform="translate(370,44.5) skewY(-60.3)"><rect width="3" height="3.4" fill="#8e8a84"/><rect x="1.8" y="0.8" width="0.9" height="1.6" fill="#24221f" opacity="0.55"/></pattern>
<pattern id="pr1" width="4" height="3" patternUnits="userSpaceOnUse" patternTransform="translate(341,35.5) skewY(17.2)"><rect width="4" height="3" fill="#9c978e"/><rect x="0" y="0" width="2.2" height="1.5" fill="#55514b" opacity="0.8"/><rect x="2" y="1.5" width="2" height="1.5" fill="#d4cec4" opacity="0.7"/></pattern></defs><polygon points="341.0,35.5 370.0,44.5 370.0,65.5 341.0,56.5" fill="url(#pf1)"/><polygon points="370.0,44.5 374.0,37.5 374.0,58.5 370.0,65.5" fill="url(#pe1)"/><polygon points="341.0,35.5 370.0,44.5 374.0,37.5 345.0,28.5" fill="url(#pr1)"/><defs><pattern id="pf2" width="3.6" height="3" patternUnits="userSpaceOnUse" patternTransform="translate(310,53.5) skewY(11.9)"><rect width="3.6" height="3" fill="#716d68"/><rect x="0" y="0" width="1.5" height="3" fill="#9a958e" opacity="0.8"/><rect x="1.8" y="0.5" width="1.5" height="2" fill="#24221f" opacity="0.9"/></pattern>
<pattern id="pe2" width="3" height="3.4" patternUnits="userSpaceOnUse" patternTransform="translate(348,61.5) skewY(-54.5)"><rect width="3" height="3.4" fill="#8e8a84"/><rect x="1.8" y="0.8" width="0.9" height="1.6" fill="#24221f" opacity="0.55"/></pattern>
<pattern id="pr2" width="4" height="3" patternUnits="userSpaceOnUse" patternTransform="translate(310,53.5) skewY(11.9)"><rect width="4" height="3" fill="#9c978e"/><rect x="0" y="0" width="2.2" height="1.5" fill="#55514b" opacity="0.8"/><rect x="2" y="1.5" width="2" height="1.5" fill="#d4cec4" opacity="0.7"/></pattern></defs><polygon points="310.0,53.5 348.0,61.5 348.0,85.5 310.0,77.5" fill="url(#pf2)"/><polygon points="348.0,61.5 353.0,54.5 353.0,78.5 348.0,85.5" fill="url(#pe2)"/><polygon points="310.0,53.5 348.0,61.5 353.0,54.5 315.0,46.5" fill="url(#pr2)"/><defs><pattern id="pf3" width="3.6" height="3" patternUnits="userSpaceOnUse" patternTransform="translate(275,73.5) skewY(6.1)"><rect width="3.6" height="3" fill="#716d68"/><rect x="0" y="0" width="1.5" height="3" fill="#9a958e" opacity="0.8"/><rect x="1.8" y="0.5" width="1.5" height="2" fill="#24221f" opacity="0.9"/></pattern>
<pattern id="pe3" width="3" height="3.4" patternUnits="userSpaceOnUse" patternTransform="translate(331,79.5) skewY(-60.3)"><rect width="3" height="3.4" fill="#8e8a84"/><rect x="1.8" y="0.8" width="0.9" height="1.6" fill="#24221f" opacity="0.55"/></pattern>
<pattern id="pr3" width="4" height="3" patternUnits="userSpaceOnUse" patternTransform="translate(275,73.5) skewY(6.1)"><rect width="4" height="3" fill="#9c978e"/><rect x="0" y="0" width="2.2" height="1.5" fill="#55514b" opacity="0.8"/><rect x="2" y="1.5" width="2" height="1.5" fill="#d4cec4" opacity="0.7"/></pattern></defs><polygon points="275.0,73.5 331.0,79.5 331.0,104.5 275.0,98.5" fill="url(#pf3)"/><polygon points="331.0,79.5 335.0,72.5 335.0,97.5 331.0,104.5" fill="url(#pe3)"/><polygon points="275.0,73.5 331.0,79.5 335.0,72.5 279.0,66.5" fill="url(#pr3)"/><defs><pattern id="pf4" width="3.6" height="3" patternUnits="userSpaceOnUse" patternTransform="translate(344,80.5) skewY(13.0)"><rect width="3.6" height="3" fill="#716d68"/><rect x="0" y="0" width="1.5" height="3" fill="#9a958e" opacity="0.8"/><rect x="1.8" y="0.5" width="1.5" height="2" fill="#24221f" opacity="0.9"/></pattern>
<pattern id="pe4" width="3" height="3.4" patternUnits="userSpaceOnUse" patternTransform="translate(370,86.5) skewY(-60.3)"><rect width="3" height="3.4" fill="#8e8a84"/><rect x="1.8" y="0.8" width="0.9" height="1.6" fill="#24221f" opacity="0.55"/></pattern>
<pattern id="pr4" width="4" height="3" patternUnits="userSpaceOnUse" patternTransform="translate(344,80.5) skewY(13.0)"><rect width="4" height="3" fill="#9c978e"/><rect x="0" y="0" width="2.2" height="1.5" fill="#55514b" opacity="0.8"/><rect x="2" y="1.5" width="2" height="1.5" fill="#d4cec4" opacity="0.7"/></pattern></defs><polygon points="344.0,80.5 370.0,86.5 370.0,115.5 344.0,109.5" fill="url(#pf4)"/><polygon points="370.0,86.5 374.0,79.5 374.0,108.5 370.0,115.5" fill="url(#pe4)"/><polygon points="344.0,80.5 370.0,86.5 374.0,79.5 348.0,73.5" fill="url(#pr4)"/><defs><pattern id="pf5" width="3.6" height="3" patternUnits="userSpaceOnUse" patternTransform="translate(236,94.5) skewY(6.8)"><rect width="3.6" height="3" fill="#716d68"/><rect x="0" y="0" width="1.5" height="3" fill="#9a958e" opacity="0.8"/><rect x="1.8" y="0.5" width="1.5" height="2" fill="#24221f" opacity="0.9"/></pattern>
<pattern id="pe5" width="3" height="3.4" patternUnits="userSpaceOnUse" patternTransform="translate(278,99.5) skewY(-60.3)"><rect width="3" height="3.4" fill="#8e8a84"/><rect x="1.8" y="0.8" width="0.9" height="1.6" fill="#24221f" opacity="0.55"/></pattern>
<pattern id="pr5" width="4" height="3" patternUnits="userSpaceOnUse" patternTransform="translate(236,94.5) skewY(6.8)"><rect width="4" height="3" fill="#9c978e"/><rect x="0" y="0" width="2.2" height="1.5" fill="#55514b" opacity="0.8"/><rect x="2" y="1.5" width="2" height="1.5" fill="#d4cec4" opacity="0.7"/></pattern></defs><polygon points="236.0,94.5 278.0,99.5 278.0,125.5 236.0,120.5" fill="url(#pf5)"/><polygon points="278.0,99.5 282.0,92.5 282.0,118.5 278.0,125.5" fill="url(#pe5)"/><polygon points="236.0,94.5 278.0,99.5 282.0,92.5 240.0,87.5" fill="url(#pr5)"/><defs><pattern id="pf6" width="3.6" height="3" patternUnits="userSpaceOnUse" patternTransform="translate(290,100.5) skewY(7.9)"><rect width="3.6" height="3" fill="#716d68"/><rect x="0" y="0" width="1.5" height="3" fill="#9a958e" opacity="0.8"/><rect x="1.8" y="0.5" width="1.5" height="2" fill="#24221f" opacity="0.9"/></pattern>
<pattern id="pe6" width="3" height="3.4" patternUnits="userSpaceOnUse" patternTransform="translate(362,110.5) skewY(-60.3)"><rect width="3" height="3.4" fill="#8e8a84"/><rect x="1.8" y="0.8" width="0.9" height="1.6" fill="#24221f" opacity="0.55"/></pattern>
<pattern id="pr6" width="4" height="3" patternUnits="userSpaceOnUse" patternTransform="translate(290,100.5) skewY(7.9)"><rect width="4" height="3" fill="#9c978e"/><rect x="0" y="0" width="2.2" height="1.5" fill="#55514b" opacity="0.8"/><rect x="2" y="1.5" width="2" height="1.5" fill="#d4cec4" opacity="0.7"/></pattern></defs><polygon points="290.0,100.5 362.0,110.5 362.0,134.5 290.0,124.5" fill="url(#pf6)"/><polygon points="362.0,110.5 366.0,103.5 366.0,127.5 362.0,134.5" fill="url(#pe6)"/><polygon points="290.0,100.5 362.0,110.5 366.0,103.5 294.0,93.5" fill="url(#pr6)"/><defs><pattern id="pf7" width="3.6" height="3" patternUnits="userSpaceOnUse" patternTransform="translate(206,116.5) skewY(3.9)"><rect width="3.6" height="3" fill="#716d68"/><rect x="0" y="0" width="1.5" height="3" fill="#9a958e" opacity="0.8"/><rect x="1.8" y="0.5" width="1.5" height="2" fill="#24221f" opacity="0.9"/></pattern>
<pattern id="pe7" width="3" height="3.4" patternUnits="userSpaceOnUse" patternTransform="translate(264,120.5) skewY(-60.3)"><rect width="3" height="3.4" fill="#8e8a84"/><rect x="1.8" y="0.8" width="0.9" height="1.6" fill="#24221f" opacity="0.55"/></pattern>
<pattern id="pr7" width="4" height="3" patternUnits="userSpaceOnUse" patternTransform="translate(206,116.5) skewY(3.9)"><rect width="4" height="3" fill="#9c978e"/><rect x="0" y="0" width="2.2" height="1.5" fill="#55514b" opacity="0.8"/><rect x="2" y="1.5" width="2" height="1.5" fill="#d4cec4" opacity="0.7"/></pattern></defs><polygon points="206.0,116.5 264.0,120.5 264.0,145.5 206.0,141.5" fill="url(#pf7)"/><polygon points="264.0,120.5 268.0,113.5 268.0,138.5 264.0,145.5" fill="url(#pe7)"/><polygon points="206.0,116.5 264.0,120.5 268.0,113.5 210.0,109.5" fill="url(#pr7)"/><defs><pattern id="pf8" width="3.6" height="3" patternUnits="userSpaceOnUse" patternTransform="translate(276,124.5) skewY(8.1)"><rect width="3.6" height="3" fill="#716d68"/><rect x="0" y="0" width="1.5" height="3" fill="#9a958e" opacity="0.8"/><rect x="1.8" y="0.5" width="1.5" height="2" fill="#24221f" opacity="0.9"/></pattern>
<pattern id="pe8" width="3" height="3.4" patternUnits="userSpaceOnUse" patternTransform="translate(339,133.5) skewY(-60.3)"><rect width="3" height="3.4" fill="#8e8a84"/><rect x="1.8" y="0.8" width="0.9" height="1.6" fill="#24221f" opacity="0.55"/></pattern>
<pattern id="pr8" width="4" height="3" patternUnits="userSpaceOnUse" patternTransform="translate(276,124.5) skewY(8.1)"><rect width="4" height="3" fill="#9c978e"/><rect x="0" y="0" width="2.2" height="1.5" fill="#55514b" opacity="0.8"/><rect x="2" y="1.5" width="2" height="1.5" fill="#d4cec4" opacity="0.7"/></pattern></defs><polygon points="276.0,124.5 339.0,133.5 339.0,157.5 276.0,148.5" fill="url(#pf8)"/><polygon points="339.0,133.5 343.0,126.5 343.0,150.5 339.0,157.5" fill="url(#pe8)"/><polygon points="276.0,124.5 339.0,133.5 343.0,126.5 280.0,117.5" fill="url(#pr8)"/><defs><pattern id="pf9" width="3.6" height="3" patternUnits="userSpaceOnUse" patternTransform="translate(240,144.5) skewY(7.3)"><rect width="3.6" height="3" fill="#c00000"/><rect x="0" y="0" width="1.5" height="3" fill="#e00000" opacity="0.8"/><rect x="1.8" y="0.5" width="1.5" height="2" fill="#600000" opacity="0.9"/></pattern>
<pattern id="pe9" width="3" height="3.4" patternUnits="userSpaceOnUse" patternTransform="translate(310,153.5) skewY(-32.0)"><rect width="3" height="3.4" fill="#a00000"/><rect x="1.8" y="0.8" width="0.9" height="1.6" fill="#600000" opacity="0.55"/></pattern>
<pattern id="pr9" width="4" height="3" patternUnits="userSpaceOnUse" patternTransform="translate(240,144.5) skewY(7.3)"><rect width="4" height="3" fill="#c00000"/><rect x="0" y="0" width="2.2" height="1.5" fill="#700000" opacity="0.8"/><rect x="2" y="1.5" width="2" height="1.5" fill="#e01010" opacity="0.7"/></pattern></defs><polygon points="240.0,144.5 310.0,153.5 310.0,180.5 240.0,171.5" fill="url(#pf9)"/><polygon points="310.0,153.5 318.0,148.5 318.0,175.5 310.0,180.5" fill="url(#pe9)"/><polygon points="240.0,144.5 310.0,153.5 318.0,148.5 248.0,139.5" fill="url(#pr9)"/><defs><pattern id="pf10" width="3.6" height="3" patternUnits="userSpaceOnUse" patternTransform="translate(267,179.5) skewY(16.3)"><rect width="3.6" height="3" fill="#a09a90"/><rect x="0" y="0" width="1.5" height="3" fill="#d8d2c8" opacity="0.8"/><rect x="1.8" y="0.5" width="1.5" height="2" fill="#3a3630" opacity="0.9"/></pattern>
<pattern id="pe10" width="3" height="3.4" patternUnits="userSpaceOnUse" patternTransform="translate(291,186.5) skewY(-53.1)"><rect width="3" height="3.4" fill="#bab5ac"/><rect x="1.8" y="0.8" width="0.9" height="1.6" fill="#3a3630" opacity="0.55"/></pattern>
<pattern id="pr10" width="4" height="3" patternUnits="userSpaceOnUse" patternTransform="translate(267,179.5) skewY(16.3)"><rect width="4" height="3" fill="#c4bcac"/><rect x="0" y="0" width="2.2" height="1.5" fill="#8a8272" opacity="0.8"/><rect x="2" y="1.5" width="2" height="1.5" fill="#e8e0d0" opacity="0.7"/></pattern></defs><polygon points="267.0,179.5 291.0,186.5 291.0,205.5 267.0,198.5" fill="url(#pf10)"/><polygon points="291.0,186.5 297.0,178.5 297.0,197.5 291.0,205.5" fill="url(#pe10)"/><polygon points="267.0,179.5 291.0,186.5 297.0,178.5 273.0,171.5" fill="url(#pr10)"/><defs><pattern id="pf11" width="3.6" height="3" patternUnits="userSpaceOnUse" patternTransform="translate(115.0,103.5) skewY(27.9)"><rect width="3.6" height="3" fill="#969aa2"/><rect x="0" y="0" width="1.5" height="3" fill="#d0d4dc" opacity="0.8"/><rect x="1.8" y="0.5" width="1.5" height="2" fill="#33373e" opacity="0.9"/></pattern>
<pattern id="pe11" width="3" height="3.4" patternUnits="userSpaceOnUse" patternTransform="translate(132.8,112.9235294117647) skewY(-32.7)"><rect width="3" height="3.4" fill="#c0c5d0"/><rect x="1.8" y="0.8" width="0.9" height="1.6" fill="#33373e" opacity="0.55"/></pattern>
<pattern id="pr11" width="4" height="3" patternUnits="userSpaceOnUse" patternTransform="translate(115.0,103.5) skewY(27.9)"><rect width="4" height="3" fill="#5c6068"/><rect x="0" y="0" width="2.2" height="1.5" fill="#2c2f35" opacity="0.8"/><rect x="2" y="1.5" width="2" height="1.5" fill="#9a9ea6" opacity="0.7"/></pattern></defs><polygon points="115.0,103.5 132.8,112.9 132.8,147.9 115.0,138.5" fill="url(#pf11)"/><polygon points="132.8,112.9 146.8,103.9 146.8,138.9 132.8,147.9" fill="url(#pe11)"/><polygon points="115.0,103.5 132.8,112.9 146.8,103.9 129.0,94.5" fill="url(#pr11)"/><defs><pattern id="pf12" width="3.6" height="3" patternUnits="userSpaceOnUse" patternTransform="translate(130.8223501344728,113.25706062783891) skewY(27.9)"><rect width="3.6" height="3" fill="#969aa2"/><rect x="0" y="0" width="1.5" height="3" fill="#d0d4dc" opacity="0.8"/><rect x="1.8" y="0.5" width="1.5" height="2" fill="#33373e" opacity="0.9"/></pattern>
<pattern id="pe12" width="3" height="3.4" patternUnits="userSpaceOnUse" patternTransform="translate(147.8223501344728,122.25706062783891) skewY(-32.7)"><rect width="3" height="3.4" fill="#c0c5d0"/><rect x="1.8" y="0.8" width="0.9" height="1.6" fill="#33373e" opacity="0.55"/></pattern>
<pattern id="pr12" width="4" height="3" patternUnits="userSpaceOnUse" patternTransform="translate(130.8223501344728,113.25706062783891) skewY(27.9)"><rect width="4" height="3" fill="#5c6068"/><rect x="0" y="0" width="2.2" height="1.5" fill="#2c2f35" opacity="0.8"/><rect x="2" y="1.5" width="2" height="1.5" fill="#9a9ea6" opacity="0.7"/></pattern></defs><polygon points="130.8,113.3 147.8,122.3 147.8,157.3 130.8,148.3" fill="url(#pf12)"/><polygon points="147.8,122.3 161.8,113.3 161.8,148.3 147.8,157.3" fill="url(#pe12)"/><polygon points="130.8,113.3 147.8,122.3 161.8,113.3 144.8,104.3" fill="url(#pr12)"/><defs><pattern id="pf13" width="3.6" height="3" patternUnits="userSpaceOnUse" patternTransform="translate(68.0,129.5) skewY(31.9)"><rect width="3.6" height="3" fill="#969aa2"/><rect x="0" y="0" width="1.5" height="3" fill="#d0d4dc" opacity="0.8"/><rect x="1.8" y="0.5" width="1.5" height="2" fill="#33373e" opacity="0.9"/></pattern>
<pattern id="pe13" width="3" height="3.4" patternUnits="userSpaceOnUse" patternTransform="translate(87.3,141.4972972972973) skewY(-38.2)"><rect width="3" height="3.4" fill="#c0c5d0"/><rect x="1.8" y="0.8" width="0.9" height="1.6" fill="#33373e" opacity="0.55"/></pattern>
<pattern id="pr13" width="4" height="3" patternUnits="userSpaceOnUse" patternTransform="translate(68.0,129.5) skewY(31.9)"><rect width="4" height="3" fill="#5c6068"/><rect x="0" y="0" width="2.2" height="1.5" fill="#2c2f35" opacity="0.8"/><rect x="2" y="1.5" width="2" height="1.5" fill="#9a9ea6" opacity="0.7"/></pattern></defs><polygon points="68.0,129.5 87.3,141.5 87.3,168.5 68.0,156.5" fill="url(#pf13)"/><polygon points="87.3,141.5 101.3,130.5 101.3,157.5 87.3,168.5" fill="url(#pe13)"/><polygon points="68.0,129.5 87.3,141.5 101.3,130.5 82.0,118.5" fill="url(#pr13)"/><defs><pattern id="pf14" width="3.6" height="3" patternUnits="userSpaceOnUse" patternTransform="translate(85.39915432564862,141.86495017270465) skewY(31.9)"><rect width="3.6" height="3" fill="#969aa2"/><rect x="0" y="0" width="1.5" height="3" fill="#d0d4dc" opacity="0.8"/><rect x="1.8" y="0.5" width="1.5" height="2" fill="#33373e" opacity="0.9"/></pattern>
<pattern id="pe14" width="3" height="3.4" patternUnits="userSpaceOnUse" patternTransform="translate(103.89915432564862,153.36495017270465) skewY(-38.2)"><rect width="3" height="3.4" fill="#c0c5d0"/><rect x="1.8" y="0.8" width="0.9" height="1.6" fill="#33373e" opacity="0.55"/></pattern>
<pattern id="pr14" width="4" height="3" patternUnits="userSpaceOnUse" patternTransform="translate(85.39915432564862,141.86495017270465) skewY(31.9)"><rect width="4" height="3" fill="#5c6068"/><rect x="0" y="0" width="2.2" height="1.5" fill="#2c2f35" opacity="0.8"/><rect x="2" y="1.5" width="2" height="1.5" fill="#9a9ea6" opacity="0.7"/></pattern></defs><polygon points="85.4,141.9 103.9,153.4 103.9,180.4 85.4,168.9" fill="url(#pf14)"/><polygon points="103.9,153.4 117.9,142.4 117.9,169.4 103.9,180.4" fill="url(#pe14)"/><polygon points="85.4,141.9 103.9,153.4 117.9,142.4 99.4,130.9" fill="url(#pr14)"/><defs><pattern id="pf15" width="3.6" height="3" patternUnits="userSpaceOnUse" patternTransform="translate(155.0,144.0) skewY(32.6)"><rect width="3.6" height="3" fill="#969aa2"/><rect x="0" y="0" width="1.5" height="3" fill="#d0d4dc" opacity="0.8"/><rect x="1.8" y="0.5" width="1.5" height="2" fill="#33373e" opacity="0.9"/></pattern>
<pattern id="pe15" width="3" height="3.4" patternUnits="userSpaceOnUse" patternTransform="translate(173.8,156.01111111111112) skewY(-33.7)"><rect width="3" height="3.4" fill="#c0c5d0"/><rect x="1.8" y="0.8" width="0.9" height="1.6" fill="#33373e" opacity="0.55"/></pattern>
<pattern id="pr15" width="4" height="3" patternUnits="userSpaceOnUse" patternTransform="translate(155.0,144.0) skewY(32.6)"><rect width="4" height="3" fill="#5c6068"/><rect x="0" y="0" width="2.2" height="1.5" fill="#2c2f35" opacity="0.8"/><rect x="2" y="1.5" width="2" height="1.5" fill="#9a9ea6" opacity="0.7"/></pattern></defs><polygon points="155.0,144.0 173.8,156.0 173.8,189.0 155.0,177.0" fill="url(#pf15)"/><polygon points="173.8,156.0 188.8,146.0 188.8,179.0 173.8,189.0" fill="url(#pe15)"/><polygon points="155.0,144.0 173.8,156.0 188.8,146.0 170.0,134.0" fill="url(#pr15)"/><defs><pattern id="pf16" width="3.6" height="3" patternUnits="userSpaceOnUse" patternTransform="translate(171.83512958792699,156.27658027471534) skewY(32.6)"><rect width="3.6" height="3" fill="#969aa2"/><rect x="0" y="0" width="1.5" height="3" fill="#d0d4dc" opacity="0.8"/><rect x="1.8" y="0.5" width="1.5" height="2" fill="#33373e" opacity="0.9"/></pattern>
<pattern id="pe16" width="3" height="3.4" patternUnits="userSpaceOnUse" patternTransform="translate(189.83512958792699,167.77658027471534) skewY(-33.7)"><rect width="3" height="3.4" fill="#c0c5d0"/><rect x="1.8" y="0.8" width="0.9" height="1.6" fill="#33373e" opacity="0.55"/></pattern>
<pattern id="pr16" width="4" height="3" patternUnits="userSpaceOnUse" patternTransform="translate(171.83512958792699,156.27658027471534) skewY(32.6)"><rect width="4" height="3" fill="#5c6068"/><rect x="0" y="0" width="2.2" height="1.5" fill="#2c2f35" opacity="0.8"/><rect x="2" y="1.5" width="2" height="1.5" fill="#9a9ea6" opacity="0.7"/></pattern></defs><polygon points="171.8,156.3 189.8,167.8 189.8,200.8 171.8,189.3" fill="url(#pf16)"/><polygon points="189.8,167.8 204.8,157.8 204.8,190.8 189.8,200.8" fill="url(#pe16)"/><polygon points="171.8,156.3 189.8,167.8 204.8,157.8 186.8,146.3" fill="url(#pr16)"/><defs><pattern id="pf17" width="3.6" height="3" patternUnits="userSpaceOnUse" patternTransform="translate(18.0,158.5) skewY(33.5)"><rect width="3.6" height="3" fill="#969aa2"/><rect x="0" y="0" width="1.5" height="3" fill="#d0d4dc" opacity="0.8"/><rect x="1.8" y="0.5" width="1.5" height="2" fill="#33373e" opacity="0.9"/></pattern>
<pattern id="pe17" width="3" height="3.4" patternUnits="userSpaceOnUse" patternTransform="translate(37.46666666666667,171.36190476190475) skewY(-48.4)"><rect width="3" height="3.4" fill="#c0c5d0"/><rect x="1.8" y="0.8" width="0.9" height="1.6" fill="#33373e" opacity="0.55"/></pattern>
<pattern id="pr17" width="4" height="3" patternUnits="userSpaceOnUse" patternTransform="translate(18.0,158.5) skewY(33.5)"><rect width="4" height="3" fill="#5c6068"/><rect x="0" y="0" width="2.2" height="1.5" fill="#2c2f35" opacity="0.8"/><rect x="2" y="1.5" width="2" height="1.5" fill="#9a9ea6" opacity="0.7"/></pattern></defs><polygon points="18.0,158.5 37.5,171.4 37.5,198.4 18.0,185.5" fill="url(#pf17)"/><polygon points="37.5,171.4 45.5,162.4 45.5,189.4 37.5,198.4" fill="url(#pe17)"/><polygon points="18.0,158.5 37.5,171.4 45.5,162.4 26.0,149.5" fill="url(#pr17)"/><defs><pattern id="pf18" width="3.6" height="3" patternUnits="userSpaceOnUse" patternTransform="translate(35.736557292304724,171.87970637949041) skewY(33.5)"><rect width="3.6" height="3" fill="#969aa2"/><rect x="0" y="0" width="1.5" height="3" fill="#d0d4dc" opacity="0.8"/><rect x="1.8" y="0.5" width="1.5" height="2" fill="#33373e" opacity="0.9"/></pattern>
<pattern id="pe18" width="3" height="3.4" patternUnits="userSpaceOnUse" patternTransform="translate(55.20322395897139,184.74161114139517) skewY(-48.4)"><rect width="3" height="3.4" fill="#c0c5d0"/><rect x="1.8" y="0.8" width="0.9" height="1.6" fill="#33373e" opacity="0.55"/></pattern>
<pattern id="pr18" width="4" height="3" patternUnits="userSpaceOnUse" patternTransform="translate(35.736557292304724,171.87970637949041) skewY(33.5)"><rect width="4" height="3" fill="#5c6068"/><rect x="0" y="0" width="2.2" height="1.5" fill="#2c2f35" opacity="0.8"/><rect x="2" y="1.5" width="2" height="1.5" fill="#9a9ea6" opacity="0.7"/></pattern></defs><polygon points="35.7,171.9 55.2,184.7 55.2,211.7 35.7,198.9" fill="url(#pf18)"/><polygon points="55.2,184.7 63.2,175.7 63.2,202.7 55.2,211.7" fill="url(#pe18)"/><polygon points="35.7,171.9 55.2,184.7 63.2,175.7 43.7,162.9" fill="url(#pr18)"/><defs><pattern id="pf19" width="3.6" height="3" patternUnits="userSpaceOnUse" patternTransform="translate(55.33333333333337,183.16666666666669) skewY(33.5)"><rect width="3.6" height="3" fill="#969aa2"/><rect x="0" y="0" width="1.5" height="3" fill="#d0d4dc" opacity="0.8"/><rect x="1.8" y="0.5" width="1.5" height="2" fill="#33373e" opacity="0.9"/></pattern>
<pattern id="pe19" width="3" height="3.4" patternUnits="userSpaceOnUse" patternTransform="translate(74.00000000000004,195.50000000000003) skewY(-48.4)"><rect width="3" height="3.4" fill="#c0c5d0"/><rect x="1.8" y="0.8" width="0.9" height="1.6" fill="#33373e" opacity="0.55"/></pattern>
<pattern id="pr19" width="4" height="3" patternUnits="userSpaceOnUse" patternTransform="translate(55.33333333333337,183.16666666666669) skewY(33.5)"><rect width="4" height="3" fill="#5c6068"/><rect x="0" y="0" width="2.2" height="1.5" fill="#2c2f35" opacity="0.8"/><rect x="2" y="1.5" width="2" height="1.5" fill="#9a9ea6" opacity="0.7"/></pattern></defs><polygon points="55.3,183.2 74.0,195.5 74.0,222.5 55.3,210.2" fill="url(#pf19)"/><polygon points="74.0,195.5 82.0,186.5 82.0,213.5 74.0,222.5" fill="url(#pe19)"/><polygon points="55.3,183.2 74.0,195.5 82.0,186.5 63.3,174.2" fill="url(#pr19)"/><defs><pattern id="pf20" width="3.6" height="3" patternUnits="userSpaceOnUse" patternTransform="translate(107.0,173.5) skewY(30.7)"><rect width="3.6" height="3" fill="#969aa2"/><rect x="0" y="0" width="1.5" height="3" fill="#d0d4dc" opacity="0.8"/><rect x="1.8" y="0.5" width="1.5" height="2" fill="#33373e" opacity="0.9"/></pattern>
<pattern id="pe20" width="3" height="3.4" patternUnits="userSpaceOnUse" patternTransform="translate(126.3,184.9756756756757) skewY(-25.0)"><rect width="3" height="3.4" fill="#c0c5d0"/><rect x="1.8" y="0.8" width="0.9" height="1.6" fill="#33373e" opacity="0.55"/></pattern>
<pattern id="pr20" width="4" height="3" patternUnits="userSpaceOnUse" patternTransform="translate(107.0,173.5) skewY(30.7)"><rect width="4" height="3" fill="#5c6068"/><rect x="0" y="0" width="2.2" height="1.5" fill="#2c2f35" opacity="0.8"/><rect x="2" y="1.5" width="2" height="1.5" fill="#9a9ea6" opacity="0.7"/></pattern></defs><polygon points="107.0,173.5 126.3,185.0 126.3,216.0 107.0,204.5" fill="url(#pf20)"/><polygon points="126.3,185.0 141.3,178.0 141.3,209.0 126.3,216.0" fill="url(#pe20)"/><polygon points="107.0,173.5 126.3,185.0 141.3,178.0 122.0,166.5" fill="url(#pr20)"/><defs><pattern id="pf21" width="3.6" height="3" patternUnits="userSpaceOnUse" patternTransform="translate(124.23134360400661,185.09203965146355) skewY(30.7)"><rect width="3.6" height="3" fill="#969aa2"/><rect x="0" y="0" width="1.5" height="3" fill="#d0d4dc" opacity="0.8"/><rect x="1.8" y="0.5" width="1.5" height="2" fill="#33373e" opacity="0.9"/></pattern>
<pattern id="pe21" width="3" height="3.4" patternUnits="userSpaceOnUse" patternTransform="translate(142.7313436040066,196.09203965146355) skewY(-25.0)"><rect width="3" height="3.4" fill="#c0c5d0"/><rect x="1.8" y="0.8" width="0.9" height="1.6" fill="#33373e" opacity="0.55"/></pattern>
<pattern id="pr21" width="4" height="3" patternUnits="userSpaceOnUse" patternTransform="translate(124.23134360400661,185.09203965146355) skewY(30.7)"><rect width="4" height="3" fill="#5c6068"/><rect x="0" y="0" width="2.2" height="1.5" fill="#2c2f35" opacity="0.8"/><rect x="2" y="1.5" width="2" height="1.5" fill="#9a9ea6" opacity="0.7"/></pattern></defs><polygon points="124.2,185.1 142.7,196.1 142.7,227.1 124.2,216.1" fill="url(#pf21)"/><polygon points="142.7,196.1 157.7,189.1 157.7,220.1 142.7,227.1" fill="url(#pe21)"/><polygon points="124.2,185.1 142.7,196.1 157.7,189.1 139.2,178.1" fill="url(#pr21)"/><defs><pattern id="pf22" width="3.6" height="3" patternUnits="userSpaceOnUse" patternTransform="translate(193.0,194.5) skewY(34.0)"><rect width="3.6" height="3" fill="#969aa2"/><rect x="0" y="0" width="1.5" height="3" fill="#d0d4dc" opacity="0.8"/><rect x="1.8" y="0.5" width="1.5" height="2" fill="#33373e" opacity="0.9"/></pattern>
<pattern id="pe22" width="3" height="3.4" patternUnits="userSpaceOnUse" patternTransform="translate(213.8,208.54) skewY(-42.3)"><rect width="3" height="3.4" fill="#c0c5d0"/><rect x="1.8" y="0.8" width="0.9" height="1.6" fill="#33373e" opacity="0.55"/></pattern>
<pattern id="pr22" width="4" height="3" patternUnits="userSpaceOnUse" patternTransform="translate(193.0,194.5) skewY(34.0)"><rect width="4" height="3" fill="#5c6068"/><rect x="0" y="0" width="2.2" height="1.5" fill="#2c2f35" opacity="0.8"/><rect x="2" y="1.5" width="2" height="1.5" fill="#9a9ea6" opacity="0.7"/></pattern></defs><polygon points="193.0,194.5 213.8,208.5 213.8,233.5 193.0,219.5" fill="url(#pf22)"/><polygon points="213.8,208.5 224.8,198.5 224.8,223.5 213.8,233.5" fill="url(#pe22)"/><polygon points="193.0,194.5 213.8,208.5 224.8,198.5 204.0,184.5" fill="url(#pr22)"/><defs><pattern id="pf23" width="3.6" height="3" patternUnits="userSpaceOnUse" patternTransform="translate(211.9640838972457,208.94174191159482) skewY(34.0)"><rect width="3.6" height="3" fill="#969aa2"/><rect x="0" y="0" width="1.5" height="3" fill="#d0d4dc" opacity="0.8"/><rect x="1.8" y="0.5" width="1.5" height="2" fill="#33373e" opacity="0.9"/></pattern>
<pattern id="pe23" width="3" height="3.4" patternUnits="userSpaceOnUse" patternTransform="translate(231.9640838972457,222.44174191159482) skewY(-42.3)"><rect width="3" height="3.4" fill="#c0c5d0"/><rect x="1.8" y="0.8" width="0.9" height="1.6" fill="#33373e" opacity="0.55"/></pattern>
<pattern id="pr23" width="4" height="3" patternUnits="userSpaceOnUse" patternTransform="translate(211.9640838972457,208.94174191159482) skewY(34.0)"><rect width="4" height="3" fill="#5c6068"/><rect x="0" y="0" width="2.2" height="1.5" fill="#2c2f35" opacity="0.8"/><rect x="2" y="1.5" width="2" height="1.5" fill="#9a9ea6" opacity="0.7"/></pattern></defs><polygon points="212.0,208.9 232.0,222.4 232.0,247.4 212.0,233.9" fill="url(#pf23)"/><polygon points="232.0,222.4 243.0,212.4 243.0,237.4 232.0,247.4" fill="url(#pe23)"/><polygon points="212.0,208.9 232.0,222.4 243.0,212.4 223.0,198.9" fill="url(#pr23)"/><defs><pattern id="pf24" width="3.6" height="3" patternUnits="userSpaceOnUse" patternTransform="translate(-2.0,212.5) skewY(38.7)"><rect width="3.6" height="3" fill="#969aa2"/><rect x="0" y="0" width="1.5" height="3" fill="#d0d4dc" opacity="0.8"/><rect x="1.8" y="0.5" width="1.5" height="2" fill="#33373e" opacity="0.9"/></pattern>
<pattern id="pe24" width="3" height="3.4" patternUnits="userSpaceOnUse" patternTransform="translate(11.3,223.14) skewY(-45.0)"><rect width="3" height="3.4" fill="#c0c5d0"/><rect x="1.8" y="0.8" width="0.9" height="1.6" fill="#33373e" opacity="0.55"/></pattern>
<pattern id="pr24" width="4" height="3" patternUnits="userSpaceOnUse" patternTransform="translate(-2.0,212.5) skewY(38.7)"><rect width="4" height="3" fill="#5c6068"/><rect x="0" y="0" width="2.2" height="1.5" fill="#2c2f35" opacity="0.8"/><rect x="2" y="1.5" width="2" height="1.5" fill="#9a9ea6" opacity="0.7"/></pattern></defs><polygon points="-2.0,212.5 11.3,223.1 11.3,248.1 -2.0,237.5" fill="url(#pf24)"/><polygon points="11.3,223.1 24.3,210.1 24.3,235.1 11.3,248.1" fill="url(#pe24)"/><polygon points="-2.0,212.5 11.3,223.1 24.3,210.1 11.0,199.5" fill="url(#pr24)"/><defs><pattern id="pf25" width="3.6" height="3" patternUnits="userSpaceOnUse" patternTransform="translate(9.510050506338871,223.4899494936612) skewY(38.7)"><rect width="3.6" height="3" fill="#969aa2"/><rect x="0" y="0" width="1.5" height="3" fill="#d0d4dc" opacity="0.8"/><rect x="1.8" y="0.5" width="1.5" height="2" fill="#33373e" opacity="0.9"/></pattern>
<pattern id="pe25" width="3" height="3.4" patternUnits="userSpaceOnUse" patternTransform="translate(22.01005050633887,233.4899494936612) skewY(-45.0)"><rect width="3" height="3.4" fill="#c0c5d0"/><rect x="1.8" y="0.8" width="0.9" height="1.6" fill="#33373e" opacity="0.55"/></pattern>
<pattern id="pr25" width="4" height="3" patternUnits="userSpaceOnUse" patternTransform="translate(9.510050506338871,223.4899494936612) skewY(38.7)"><rect width="4" height="3" fill="#5c6068"/><rect x="0" y="0" width="2.2" height="1.5" fill="#2c2f35" opacity="0.8"/><rect x="2" y="1.5" width="2" height="1.5" fill="#9a9ea6" opacity="0.7"/></pattern></defs><polygon points="9.5,223.5 22.0,233.5 22.0,258.5 9.5,248.5" fill="url(#pf25)"/><polygon points="22.0,233.5 35.0,220.5 35.0,245.5 22.0,258.5" fill="url(#pe25)"/><polygon points="9.5,223.5 22.0,233.5 35.0,220.5 22.5,210.5" fill="url(#pr25)"/><defs><pattern id="pf26" width="3.6" height="3" patternUnits="userSpaceOnUse" patternTransform="translate(140.0,235.5) skewY(31.3)"><rect width="3.6" height="3" fill="#969aa2"/><rect x="0" y="0" width="1.5" height="3" fill="#d0d4dc" opacity="0.8"/><rect x="1.8" y="0.5" width="1.5" height="2" fill="#33373e" opacity="0.9"/></pattern>
<pattern id="pe26" width="3" height="3.4" patternUnits="userSpaceOnUse" patternTransform="translate(163.8,249.98695652173913) skewY(-45.0)"><rect width="3" height="3.4" fill="#c0c5d0"/><rect x="1.8" y="0.8" width="0.9" height="1.6" fill="#33373e" opacity="0.55"/></pattern>
<pattern id="pr26" width="4" height="3" patternUnits="userSpaceOnUse" patternTransform="translate(140.0,235.5) skewY(31.3)"><rect width="4" height="3" fill="#5c6068"/><rect x="0" y="0" width="2.2" height="1.5" fill="#2c2f35" opacity="0.8"/><rect x="2" y="1.5" width="2" height="1.5" fill="#9a9ea6" opacity="0.7"/></pattern></defs><polygon points="140.0,235.5 163.8,250.0 163.8,274.0 140.0,259.5" fill="url(#pf26)"/><polygon points="163.8,250.0 174.8,239.0 174.8,263.0 163.8,274.0" fill="url(#pe26)"/><polygon points="140.0,235.5 163.8,250.0 174.8,239.0 151.0,224.5" fill="url(#pr26)"/><defs><pattern id="pf27" width="3.6" height="3" patternUnits="userSpaceOnUse" patternTransform="translate(162.01005050633887,250.4899494936612) skewY(31.3)"><rect width="3.6" height="3" fill="#969aa2"/><rect x="0" y="0" width="1.5" height="3" fill="#d0d4dc" opacity="0.8"/><rect x="1.8" y="0.5" width="1.5" height="2" fill="#33373e" opacity="0.9"/></pattern>
<pattern id="pe27" width="3" height="3.4" patternUnits="userSpaceOnUse" patternTransform="translate(185.01005050633887,264.4899494936612) skewY(-45.0)"><rect width="3" height="3.4" fill="#c0c5d0"/><rect x="1.8" y="0.8" width="0.9" height="1.6" fill="#33373e" opacity="0.55"/></pattern>
<pattern id="pr27" width="4" height="3" patternUnits="userSpaceOnUse" patternTransform="translate(162.01005050633887,250.4899494936612) skewY(31.3)"><rect width="4" height="3" fill="#5c6068"/><rect x="0" y="0" width="2.2" height="1.5" fill="#2c2f35" opacity="0.8"/><rect x="2" y="1.5" width="2" height="1.5" fill="#9a9ea6" opacity="0.7"/></pattern></defs><polygon points="162.0,250.5 185.0,264.5 185.0,288.5 162.0,274.5" fill="url(#pf27)"/><polygon points="185.0,264.5 196.0,253.5 196.0,277.5 185.0,288.5" fill="url(#pe27)"/><polygon points="162.0,250.5 185.0,264.5 196.0,253.5 173.0,239.5" fill="url(#pr27)"/><defs><pattern id="pf28" width="3.6" height="3" patternUnits="userSpaceOnUse" patternTransform="translate(73.0,277.5) skewY(37.8)"><rect width="3.6" height="3" fill="#969aa2"/><rect x="0" y="0" width="1.5" height="3" fill="#d0d4dc" opacity="0.8"/><rect x="1.8" y="0.5" width="1.5" height="2" fill="#33373e" opacity="0.9"/></pattern>
<pattern id="pe28" width="3" height="3.4" patternUnits="userSpaceOnUse" patternTransform="translate(93.13333333333333,293.12068965517244) skewY(-47.3)"><rect width="3" height="3.4" fill="#c0c5d0"/><rect x="1.8" y="0.8" width="0.9" height="1.6" fill="#33373e" opacity="0.55"/></pattern>
<pattern id="pr28" width="4" height="3" patternUnits="userSpaceOnUse" patternTransform="translate(73.0,277.5) skewY(37.8)"><rect width="4" height="3" fill="#5c6068"/><rect x="0" y="0" width="2.2" height="1.5" fill="#2c2f35" opacity="0.8"/><rect x="2" y="1.5" width="2" height="1.5" fill="#9a9ea6" opacity="0.7"/></pattern></defs><polygon points="73.0,277.5 93.1,293.1 93.1,314.1 73.0,298.5" fill="url(#pf28)"/><polygon points="93.1,293.1 105.1,280.1 105.1,301.1 93.1,314.1" fill="url(#pe28)"/><polygon points="73.0,277.5 93.1,293.1 105.1,280.1 85.0,264.5" fill="url(#pr28)"/><defs><pattern id="pf29" width="3.6" height="3" patternUnits="userSpaceOnUse" patternTransform="translate(91.38374118950708,293.52872482247847) skewY(37.8)"><rect width="3.6" height="3" fill="#969aa2"/><rect x="0" y="0" width="1.5" height="3" fill="#d0d4dc" opacity="0.8"/><rect x="1.8" y="0.5" width="1.5" height="2" fill="#33373e" opacity="0.9"/></pattern>
<pattern id="pe29" width="3" height="3.4" patternUnits="userSpaceOnUse" patternTransform="translate(111.5170745228404,309.1494144776509) skewY(-47.3)"><rect width="3" height="3.4" fill="#c0c5d0"/><rect x="1.8" y="0.8" width="0.9" height="1.6" fill="#33373e" opacity="0.55"/></pattern>
<pattern id="pr29" width="4" height="3" patternUnits="userSpaceOnUse" patternTransform="translate(91.38374118950708,293.52872482247847) skewY(37.8)"><rect width="4" height="3" fill="#5c6068"/><rect x="0" y="0" width="2.2" height="1.5" fill="#2c2f35" opacity="0.8"/><rect x="2" y="1.5" width="2" height="1.5" fill="#9a9ea6" opacity="0.7"/></pattern></defs><polygon points="91.4,293.5 111.5,309.1 111.5,330.1 91.4,314.5" fill="url(#pf29)"/><polygon points="111.5,309.1 123.5,296.1 123.5,317.1 111.5,330.1" fill="url(#pe29)"/><polygon points="91.4,293.5 111.5,309.1 123.5,296.1 103.4,280.5" fill="url(#pr29)"/><defs><pattern id="pf30" width="3.6" height="3" patternUnits="userSpaceOnUse" patternTransform="translate(111.66666666666663,307.5) skewY(37.8)"><rect width="3.6" height="3" fill="#969aa2"/><rect x="0" y="0" width="1.5" height="3" fill="#d0d4dc" opacity="0.8"/><rect x="1.8" y="0.5" width="1.5" height="2" fill="#33373e" opacity="0.9"/></pattern>
<pattern id="pe30" width="3" height="3.4" patternUnits="userSpaceOnUse" patternTransform="translate(130.99999999999997,322.5) skewY(-47.3)"><rect width="3" height="3.4" fill="#c0c5d0"/><rect x="1.8" y="0.8" width="0.9" height="1.6" fill="#33373e" opacity="0.55"/></pattern>
<pattern id="pr30" width="4" height="3" patternUnits="userSpaceOnUse" patternTransform="translate(111.66666666666663,307.5) skewY(37.8)"><rect width="4" height="3" fill="#5c6068"/><rect x="0" y="0" width="2.2" height="1.5" fill="#2c2f35" opacity="0.8"/><rect x="2" y="1.5" width="2" height="1.5" fill="#9a9ea6" opacity="0.7"/></pattern></defs><polygon points="111.7,307.5 131.0,322.5 131.0,343.5 111.7,328.5" fill="url(#pf30)"/><polygon points="131.0,322.5 143.0,309.5 143.0,330.5 131.0,343.5" fill="url(#pe30)"/><polygon points="111.7,307.5 131.0,322.5 143.0,309.5 123.7,294.5" fill="url(#pr30)"/><defs><pattern id="pf31" width="3.6" height="3" patternUnits="userSpaceOnUse" patternTransform="translate(-2.0,298.5) skewY(43.7)"><rect width="3.6" height="3" fill="#969aa2"/><rect x="0" y="0" width="1.5" height="3" fill="#d0d4dc" opacity="0.8"/><rect x="1.8" y="0.5" width="1.5" height="2" fill="#33373e" opacity="0.9"/></pattern>
<pattern id="pe31" width="3" height="3.4" patternUnits="userSpaceOnUse" patternTransform="translate(10.3,310.26521739130436) skewY(-43.0)"><rect width="3" height="3.4" fill="#c0c5d0"/><rect x="1.8" y="0.8" width="0.9" height="1.6" fill="#33373e" opacity="0.55"/></pattern>
<pattern id="pr31" width="4" height="3" patternUnits="userSpaceOnUse" patternTransform="translate(-2.0,298.5) skewY(43.7)"><rect width="4" height="3" fill="#5c6068"/><rect x="0" y="0" width="2.2" height="1.5" fill="#2c2f35" opacity="0.8"/><rect x="2" y="1.5" width="2" height="1.5" fill="#9a9ea6" opacity="0.7"/></pattern></defs><polygon points="-2.0,298.5 10.3,310.3 10.3,330.3 -2.0,318.5" fill="url(#pf31)"/><polygon points="10.3,310.3 25.3,296.3 25.3,316.3 10.3,330.3" fill="url(#pe31)"/><polygon points="-2.0,298.5 10.3,310.3 25.3,296.3 13.0,284.5" fill="url(#pr31)"/><defs><pattern id="pf32" width="3.6" height="3" patternUnits="userSpaceOnUse" patternTransform="translate(8.476522624460017,310.455245550504) skewY(43.7)"><rect width="3.6" height="3" fill="#969aa2"/><rect x="0" y="0" width="1.5" height="3" fill="#d0d4dc" opacity="0.8"/><rect x="1.8" y="0.5" width="1.5" height="2" fill="#33373e" opacity="0.9"/></pattern>
<pattern id="pe32" width="3" height="3.4" patternUnits="userSpaceOnUse" patternTransform="translate(19.976522624460017,321.455245550504) skewY(-43.0)"><rect width="3" height="3.4" fill="#c0c5d0"/><rect x="1.8" y="0.8" width="0.9" height="1.6" fill="#33373e" opacity="0.55"/></pattern>
<pattern id="pr32" width="4" height="3" patternUnits="userSpaceOnUse" patternTransform="translate(8.476522624460017,310.455245550504) skewY(43.7)"><rect width="4" height="3" fill="#5c6068"/><rect x="0" y="0" width="2.2" height="1.5" fill="#2c2f35" opacity="0.8"/><rect x="2" y="1.5" width="2" height="1.5" fill="#9a9ea6" opacity="0.7"/></pattern></defs><polygon points="8.5,310.5 20.0,321.5 20.0,341.5 8.5,330.5" fill="url(#pf32)"/><polygon points="20.0,321.5 35.0,307.5 35.0,327.5 20.0,341.5" fill="url(#pe32)"/><polygon points="8.5,310.5 20.0,321.5 35.0,307.5 23.5,296.5" fill="url(#pr32)"/><defs><pattern id="pf33" width="3.6" height="3" patternUnits="userSpaceOnUse" patternTransform="translate(34.0,332.5) skewY(37.6)"><rect width="3.6" height="3" fill="#969aa2"/><rect x="0" y="0" width="1.5" height="3" fill="#d0d4dc" opacity="0.8"/><rect x="1.8" y="0.5" width="1.5" height="2" fill="#33373e" opacity="0.9"/></pattern>
<pattern id="pe33" width="3" height="3.4" patternUnits="userSpaceOnUse" patternTransform="translate(60.8,353.11538461538464) skewY(-47.5)"><rect width="3" height="3.4" fill="#c0c5d0"/><rect x="1.8" y="0.8" width="0.9" height="1.6" fill="#33373e" opacity="0.55"/></pattern>
<pattern id="pr33" width="4" height="3" patternUnits="userSpaceOnUse" patternTransform="translate(34.0,332.5) skewY(37.6)"><rect width="4" height="3" fill="#3a3d43"/><rect x="0" y="0" width="2.2" height="1.5" fill="#16181c" opacity="0.8"/><rect x="2" y="1.5" width="2" height="1.5" fill="#9a9480" opacity="0.7"/></pattern></defs><polygon points="34.0,332.5 60.8,353.1 60.8,373.1 34.0,352.5" fill="url(#pf33)"/><polygon points="60.8,353.1 71.8,341.1 71.8,361.1 60.8,373.1" fill="url(#pe33)"/><polygon points="34.0,332.5 60.8,353.1 71.8,341.1 45.0,320.5" fill="url(#pr33)"/><defs><pattern id="pf34" width="3.6" height="3" patternUnits="userSpaceOnUse" patternTransform="translate(59.053985520075685,353.53201579628103) skewY(37.6)"><rect width="3.6" height="3" fill="#969aa2"/><rect x="0" y="0" width="1.5" height="3" fill="#d0d4dc" opacity="0.8"/><rect x="1.8" y="0.5" width="1.5" height="2" fill="#33373e" opacity="0.9"/></pattern>
<pattern id="pe34" width="3" height="3.4" patternUnits="userSpaceOnUse" patternTransform="translate(85.05398552007568,373.53201579628103) skewY(-47.5)"><rect width="3" height="3.4" fill="#c0c5d0"/><rect x="1.8" y="0.8" width="0.9" height="1.6" fill="#33373e" opacity="0.55"/></pattern>
<pattern id="pr34" width="4" height="3" patternUnits="userSpaceOnUse" patternTransform="translate(59.053985520075685,353.53201579628103) skewY(37.6)"><rect width="4" height="3" fill="#3a3d43"/><rect x="0" y="0" width="2.2" height="1.5" fill="#16181c" opacity="0.8"/><rect x="2" y="1.5" width="2" height="1.5" fill="#9a9480" opacity="0.7"/></pattern></defs><polygon points="59.1,353.5 85.1,373.5 85.1,393.5 59.1,373.5" fill="url(#pf34)"/><polygon points="85.1,373.5 96.1,361.5 96.1,381.5 85.1,393.5" fill="url(#pe34)"/><polygon points="59.1,353.5 85.1,373.5 96.1,361.5 70.1,341.5" fill="url(#pr34)"/><rect x="259" y="258.0" width="5.5" height="5.5" fill="#0000ff"/><rect x="0" y="361.8" width="371" height="8.699999999999989" fill="#083d3d"/><text x="311" y="368.8" font-size="5.6" fill="#e4ecec" font-family="Liberation Sans">相机高程: 373.11米</text></svg>
<div style="left:909.5px;top:110px;width:4px;height:374px;background:#f7f7f7"></div>
<div style="left:918.5px;top:101.4px;width:161.5px;height:12px;background:#e3e3e3"></div>
<div style="left:1056.0px;top:101.4px;width:24px;height:12px;background:#ececec"></div>
<div style="left:921.5px;top:100.5px;height:14.4px;line-height:14.4px;font-size:7.2px;color:#424242;white-space:nowrap;">地理实体管理列表</div>
<svg style="position:absolute;left:1056.0px;top:101.4px;" width="24" height="12" viewBox="0 0 24 12"><rect x="5.5" y="5.5" width="3.5" height="3" fill="none" stroke="#333" stroke-width="0.8"/><rect x="6.8" y="4" width="3.5" height="3" fill="#ececec" stroke="#333" stroke-width="0.8"/><path d="M15.8 4.8l3.4 3.4M19.2 4.8l-3.4 3.4" stroke="#222" stroke-width="1.1"/></svg>
<div style="left:921px;top:116.3px;height:14px;line-height:14px;font-size:7px;color:#424242;white-space:nowrap;">检索:</div>
<div style="left:942.5px;top:117.5px;width:138px;height:11px;background:#fff;border:1px solid #dcdcdc;box-sizing:border-box"></div>
<div style="left:922px;top:131.5px;width:158px;height:31.5px;background:#fff;border:1px solid #c4c4c4;box-sizing:border-box"></div>
<div style="left:934px;top:131.8px;width:137px;height:31px;background:transparent;border-left:0.8px solid #e8e8e8"></div>
<div style="left:934px;top:145.6px;width:137px;height:10.4px;background:#d7e3f2"></div>
<div style="left:951.5px;top:139px;width:0.8px;height:24px;background:#cfcfcf"></div>
<div style="left:964.5px;top:148px;width:0.8px;height:15px;background:#cfcfcf"></div>
<svg style="position:absolute;left:947px;top:135px;" width="8" height="6" viewBox="0 0 8 6"><path d="M0.5 0.5h7l-3.5 4.5z" fill="#6b3d3d"/></svg>
<div style="left:958px;top:135px;width:6px;height:6px;background:#fff;border:0.7px solid #8c8c8c;box-sizing:border-box;border-radius:0.5px"></div>
<svg style="position:absolute;left:958px;top:135px;" width="6" height="6" viewBox="0 0 6 6"><path d="M1.50 3.00l1.20 1.80 1.98-3.30" fill="none" stroke="#555" stroke-width="0.6"/></svg>
<div style="left:968px;top:135.3px;width:5.5px;height:5.5px;background:#6b6b00"></div>
<div style="left:978px;top:131.20000000000002px;height:14.4px;line-height:14.4px;font-size:7.2px;color:#3a3a3a;white-space:nowrap;">2301 房屋[24]</div>
<div style="left:965px;top:148px;width:4px;height:0.7px;background:#bbb"></div>
<div style="left:969px;top:145.5px;width:6px;height:6px;background:#fff;border:0.7px solid #8c8c8c;box-sizing:border-box;border-radius:0.5px"></div>
<svg style="position:absolute;left:969px;top:145.5px;" width="6" height="6" viewBox="0 0 6 6"><path d="M1.50 3.00l1.20 1.80 1.98-3.30" fill="none" stroke="#555" stroke-width="0.6"/></svg>
<div style="left:979px;top:146.5px;width:5px;height:5px;background:#8c8c3c"></div>
<div style="left:990.5px;top:142.10000000000002px;height:14.4px;line-height:14.4px;font-size:7.2px;color:#333;white-space:nowrap;">230101 普通房屋[24]</div>
<div style="left:965px;top:159.5px;width:4px;height:0.7px;background:#bbb"></div>
<div style="left:969px;top:157px;width:6px;height:6px;background:#fff;border:0.7px solid #8c8c8c;box-sizing:border-box;border-radius:0.5px"></div>
<svg style="position:absolute;left:969px;top:157px;" width="6" height="6" viewBox="0 0 6 6"><path d="M1.50 3.00l1.20 1.80 1.98-3.30" fill="none" stroke="#555" stroke-width="0.6"/></svg>
<div style="left:979px;top:157.5px;width:5px;height:5px;background:#6b6b00"></div>
<div style="left:990.5px;top:153.60000000000002px;height:14.4px;line-height:14.4px;font-size:7.2px;color:#333;white-space:nowrap;">230102 棚房[0]</div>
<div style="left:1071px;top:131.5px;width:9px;height:31.5px;background:#e6e6e6;border-left:1px solid #d8d8d8;box-sizing:border-box"></div>
<div style="left:1071.5px;top:132.0px;width:8px;height:8px;background:#f6f6f6;border:1px solid #cfcfcf;box-sizing:border-box"></div>
<svg style="position:absolute;left:1073.5px;top:134.60000000000002px" width="4" height="2.4"><polygon points="0,2.4 4,2.4 2.0,0" fill="#424242"/></svg>
<div style="left:1071.5px;top:154.5px;width:8px;height:8px;background:#f6f6f6;border:1px solid #cfcfcf;box-sizing:border-box"></div>
<svg style="position:absolute;left:1073.5px;top:157.3px" width="4" height="2.4"><polygon points="0,0 4,0 2.0,2.4" fill="#424242"/></svg>
<div style="left:1072px;top:144px;width:7.5px;height:6px;background:#f6f6f6;border:1px solid #d0d0d0;box-sizing:border-box"></div>
<div style="left:918.5px;top:166.5px;width:161.5px;height:11.5px;background:#e3e3e3"></div>
<div style="left:1056.0px;top:166.5px;width:24px;height:11.5px;background:#ececec"></div>
<div style="left:921.5px;top:165.35000000000002px;height:14.4px;line-height:14.4px;font-size:7.2px;color:#424242;white-space:nowrap;">规则执行器</div>
<svg style="position:absolute;left:1056.0px;top:166.5px;" width="24" height="11.5" viewBox="0 0 24 11.5"><rect x="5.5" y="5.5" width="3.5" height="3" fill="none" stroke="#333" stroke-width="0.8"/><rect x="6.8" y="4" width="3.5" height="3" fill="#ececec" stroke="#333" stroke-width="0.8"/><path d="M15.8 4.8l3.4 3.4M19.2 4.8l-3.4 3.4" stroke="#222" stroke-width="1.1"/></svg>
<div style="left:921px;top:180px;width:14px;height:14px;background:#ebebeb;border:1px solid #dedede;box-sizing:border-box"></div>
<div style="left:939px;top:180px;width:14px;height:14px;background:#ebebeb;border:1px solid #dedede;box-sizing:border-box"></div>
<div style="left:955px;top:180px;width:16px;height:14px;background:#ebebeb;border:1px solid #dedede;box-sizing:border-box"></div>
<svg style="position:absolute;left:921px;top:180px;" width="14" height="14" viewBox="0 0 14 14"><circle cx="7" cy="7" r="4.2" fill="#8a8a8a"/><path d="M4.8 7h4.4M7 4.8v4.4" stroke="#fff" stroke-width="1.2"/></svg>
<svg style="position:absolute;left:939px;top:180px;" width="14" height="14" viewBox="0 0 14 14"><circle cx="7" cy="7" r="4.2" fill="#8a8a8a"/><path d="M4.8 7h4.4" stroke="#fff" stroke-width="1.2"/></svg>
<svg style="position:absolute;left:955px;top:180px;" width="16" height="14" viewBox="0 0 16 14"><path d="M4 3.5l4 3.5-4 3.5zM8 3.5l4 3.5-4 3.5z" fill="none" stroke="#777" stroke-width="1"/></svg>
<div style="left:975px;top:180.5px;width:85px;height:12px;background:#fff;border:1px solid #e0e0e0;box-sizing:border-box"></div>
<div style="left:977px;top:179.6px;height:14px;line-height:14px;font-size:7px;color:#3a3a3a;white-space:nowrap;width:72px;overflow:hidden">6-江苏图元实体关系质检</div>
<svg style="position:absolute;left:1053.0px;top:185.4px" width="4" height="2.4"><polygon points="0,0 4,0 2.0,2.4" fill="#666"/></svg>
<div style="left:1065px;top:180px;width:15px;height:14px;background:#ebebeb;border:1px solid #dedede;box-sizing:border-box"></div>
<svg style="position:absolute;left:1066px;top:181px;" width="13" height="12" viewBox="0 0 13 12"><path d="M2 6l5-4v8z" fill="#e86a2a"/><circle cx="9" cy="5" r="2" fill="#fff" stroke="#999" stroke-width="0.6"/></svg>
<div style="left:1022.5px;top:197px;width:57.5px;height:11px;background:#fff;border:1px solid #e6e6e6;box-sizing:border-box"></div>
<div style="left:1024.5px;top:195.7px;height:14px;line-height:14px;font-size:7px;color:#3a3a3a;white-space:nowrap;">默认</div>
<svg style="position:absolute;left:1071.5px;top:201.5px" width="4" height="2.4"><polygon points="0,0 4,0 2.0,2.4" fill="#666"/></svg>
<div style="left:919.5px;top:212px;width:160.5px;height:53px;background:#fff;border:1px solid #c4c4c4;box-sizing:border-box"></div>
<svg style="position:absolute;left:921.0px;top:217.5px" width="4" height="2.4"><polygon points="0,0 4,0 2.0,2.4" fill="#666"/></svg>
<div style="left:926.5px;top:215.39999999999998px;width:6.5px;height:6.5px;background:#fff;border:0.7px solid #8c8c8c;box-sizing:border-box;border-radius:0.5px"></div>
<svg style="position:absolute;left:935.5px;top:215.2px;" width="9" height="7" viewBox="0 0 9 7"><path d="M0.5 1.5h3l1 1h4v4h-8z" fill="#f6c445" stroke="#d9a21d" stroke-width="0.5"/></svg>
<div style="left:945.5px;top:211.89999999999998px;height:14px;line-height:14px;font-size:7px;color:#424242;white-space:nowrap;">江苏实体与图元构建关系检查</div>
<svg style="position:absolute;left:927.3px;top:227.7px" width="2.4" height="4"><polygon points="0,0 2.4,2.0 0,4" fill="#888"/></svg>
<div style="left:932.0px;top:226.39999999999998px;width:6.5px;height:6.5px;background:#fff;border:0.7px solid #8c8c8c;box-sizing:border-box;border-radius:0.5px"></div>
<svg style="position:absolute;left:941.0px;top:226.2px;" width="9" height="7" viewBox="0 0 9 7"><path d="M0.5 1.5h3l1 1h4v4h-8z" fill="#f6c445" stroke="#d9a21d" stroke-width="0.5"/></svg>
<div style="left:951.0px;top:222.89999999999998px;height:14px;line-height:14px;font-size:7px;color:#424242;white-space:nowrap;">实体组成信息检查</div>
<svg style="position:absolute;left:927.3px;top:238.7px" width="2.4" height="4"><polygon points="0,0 2.4,2.0 0,4" fill="#888"/></svg>
<div style="left:932.0px;top:237.39999999999998px;width:6.5px;height:6.5px;background:#fff;border:0.7px solid #8c8c8c;box-sizing:border-box;border-radius:0.5px"></div>
<svg style="position:absolute;left:941.0px;top:237.2px;" width="9" height="7" viewBox="0 0 9 7"><path d="M0.5 1.5h3l1 1h4v4h-8z" fill="#f6c445" stroke="#d9a21d" stroke-width="0.5"/></svg>
<div style="left:951.0px;top:233.89999999999998px;height:14px;line-height:14px;font-size:7px;color:#424242;white-space:nowrap;">图元构建信息检查</div>
<svg style="position:absolute;left:927.3px;top:249.2px" width="2.4" height="4"><polygon points="0,0 2.4,2.0 0,4" fill="#888"/></svg>
<div style="left:932.0px;top:247.89999999999998px;width:6.5px;height:6.5px;background:#fff;border:0.7px solid #8c8c8c;box-sizing:border-box;border-radius:0.5px"></div>
<svg style="position:absolute;left:941.0px;top:247.7px;" width="9" height="7" viewBox="0 0 9 7"><path d="M0.5 1.5h3l1 1h4v4h-8z" fill="#f6c445" stroke="#d9a21d" stroke-width="0.5"/></svg>
<div style="left:951.0px;top:244.39999999999998px;height:14px;line-height:14px;font-size:7px;color:#424242;white-space:nowrap;">处理</div>
<div style="left:932.0px;top:258.7px;width:6.5px;height:6.5px;background:#fff;border:0.7px solid #8c8c8c;box-sizing:border-box;border-radius:0.5px"></div>
<svg style="position:absolute;left:941.0px;top:258.5px;" width="9" height="7" viewBox="0 0 9 7"><path d="M0.5 1.5h3l1 1h4v4h-8z" fill="#f6c445" stroke="#d9a21d" stroke-width="0.5"/></svg>
<div style="left:951.0px;top:255.2px;height:14px;line-height:14px;font-size:7px;color:#424242;white-space:nowrap;">图谱语义化——showRelationMap</div>
<div style="left:1071px;top:212.5px;width:9px;height:52px;background:#e6e6e6;border-left:1px solid #d8d8d8;box-sizing:border-box"></div>
<div style="left:1071.5px;top:213.0px;width:8px;height:8px;background:#f6f6f6;border:1px solid #cfcfcf;box-sizing:border-box"></div>
<svg style="position:absolute;left:1073.5px;top:215.60000000000002px" width="4" height="2.4"><polygon points="0,2.4 4,2.4 2.0,0" fill="#424242"/></svg>
<div style="left:1071.5px;top:256.0px;width:8px;height:8px;background:#f6f6f6;border:1px solid #cfcfcf;box-sizing:border-box"></div>
<svg style="position:absolute;left:1073.5px;top:258.8px" width="4" height="2.4"><polygon points="0,0 4,0 2.0,2.4" fill="#424242"/></svg>
<div style="left:1072px;top:222px;width:7.5px;height:32px;background:#f6f6f6;border:1px solid #d0d0d0;box-sizing:border-box"></div>
<div style="left:918.5px;top:270px;width:161.5px;height:11.5px;background:#e3e3e3"></div>
<div style="left:1056.0px;top:270px;width:24px;height:11.5px;background:#ececec"></div>
<div style="left:921.5px;top:268.85px;height:14.4px;line-height:14.4px;font-size:7.2px;color:#424242;white-space:nowrap;">230101 普通房屋</div>
<svg style="position:absolute;left:1056.0px;top:270px;" width="24" height="11.5" viewBox="0 0 24 11.5"><rect x="5.5" y="5.5" width="3.5" height="3" fill="none" stroke="#333" stroke-width="0.8"/><rect x="6.8" y="4" width="3.5" height="3" fill="#ececec" stroke="#333" stroke-width="0.8"/><path d="M15.8 4.8l3.4 3.4M19.2 4.8l-3.4 3.4" stroke="#222" stroke-width="1.1"/></svg>
<div style="left:918.5px;top:282px;width:161.5px;height:272px;background:#fff;border:1px solid #c4c4c4;box-sizing:border-box"></div>
<svg style="position:absolute;left:921.5px;top:296.8px;" width="9" height="9" viewBox="0 0 9 9"><path d="M4.5 0.8l3.5 1.8v3.8l-3.5 1.8-3.5-1.8v-3.8z M1 2.6l3.5 1.8 3.5-1.8 M4.5 4.4v3.8" fill="none" stroke="#777" stroke-width="0.7"/></svg>
<div style="left:933.3px;top:297.1px;width:7.8px;height:7.8px;background:#fff;border:0.7px solid #8c8c8c;box-sizing:border-box;border-radius:0.5px"></div>
<svg style="position:absolute;left:933.3px;top:297.1px;" width="7.8" height="7.8" viewBox="0 0 7.8 7.8"><path d="M1.95 3.90l1.56 2.34 2.57-4.29" fill="none" stroke="#555" stroke-width="0.6"/></svg>
<div style="left:955px;top:293.8px;height:14.4px;line-height:14.4px;font-size:7.2px;color:#424242;white-space:nowrap;">普通房屋2</div>
<div style="left:992.5px;top:293.8px;height:14.4px;line-height:14.4px;font-size:7.2px;color:#424242;white-space:nowrap;">MA1001NE103H1535...</div>
<svg style="position:absolute;left:921.5px;top:308.02000000000004px;" width="9" height="9" viewBox="0 0 9 9"><path d="M4.5 0.8l3.5 1.8v3.8l-3.5 1.8-3.5-1.8v-3.8z M1 2.6l3.5 1.8 3.5-1.8 M4.5 4.4v3.8" fill="none" stroke="#777" stroke-width="0.7"/></svg>
<div style="left:933.3px;top:308.32000000000005px;width:7.8px;height:7.8px;background:#fff;border:0.7px solid #8c8c8c;box-sizing:border-box;border-radius:0.5px"></div>
<svg style="position:absolute;left:933.3px;top:308.32000000000005px;" width="7.8" height="7.8" viewBox="0 0 7.8 7.8"><path d="M1.95 3.90l1.56 2.34 2.57-4.29" fill="none" stroke="#555" stroke-width="0.6"/></svg>
<div style="left:955px;top:305.02000000000004px;height:14.4px;line-height:14.4px;font-size:7.2px;color:#424242;white-space:nowrap;">普通房屋3</div>
<div style="left:992.5px;top:305.02000000000004px;height:14.4px;line-height:14.4px;font-size:7.2px;color:#424242;white-space:nowrap;">MA1001NE103H1535...</div>
<svg style="position:absolute;left:921.5px;top:319.24px;" width="9" height="9" viewBox="0 0 9 9"><path d="M4.5 0.8l3.5 1.8v3.8l-3.5 1.8-3.5-1.8v-3.8z M1 2.6l3.5 1.8 3.5-1.8 M4.5 4.4v3.8" fill="none" stroke="#777" stroke-width="0.7"/></svg>
<div style="left:933.3px;top:319.54px;width:7.8px;height:7.8px;background:#fff;border:0.7px solid #8c8c8c;box-sizing:border-box;border-radius:0.5px"></div>
<svg style="position:absolute;left:933.3px;top:319.54px;" width="7.8" height="7.8" viewBox="0 0 7.8 7.8"><path d="M1.95 3.90l1.56 2.34 2.57-4.29" fill="none" stroke="#555" stroke-width="0.6"/></svg>
<div style="left:955px;top:316.24px;height:14.4px;line-height:14.4px;font-size:7.2px;color:#424242;white-space:nowrap;">普通房屋4</div>
<div style="left:992.5px;top:316.24px;height:14.4px;line-height:14.4px;font-size:7.2px;color:#424242;white-space:nowrap;">MA1001NE103H1535...</div>
<svg style="position:absolute;left:921.5px;top:330.46000000000004px;" width="9" height="9" viewBox="0 0 9 9"><path d="M4.5 0.8l3.5 1.8v3.8l-3.5 1.8-3.5-1.8v-3.8z M1 2.6l3.5 1.8 3.5-1.8 M4.5 4.4v3.8" fill="none" stroke="#777" stroke-width="0.7"/></svg>
<div style="left:933.3px;top:330.76000000000005px;width:7.8px;height:7.8px;background:#fff;border:0.7px solid #8c8c8c;box-sizing:border-box;border-radius:0.5px"></div>
<svg style="position:absolute;left:933.3px;top:330.76000000000005px;" width="7.8" height="7.8" viewBox="0 0 7.8 7.8"><path d="M1.95 3.90l1.56 2.34 2.57-4.29" fill="none" stroke="#555" stroke-width="0.6"/></svg>
<div style="left:955px;top:327.46000000000004px;height:14.4px;line-height:14.4px;font-size:7.2px;color:#424242;white-space:nowrap;">普通房屋5</div>
<div style="left:992.5px;top:327.46000000000004px;height:14.4px;line-height:14.4px;font-size:7.2px;color:#424242;white-space:nowrap;">MA1001NE103H1535...</div>
<svg style="position:absolute;left:921.5px;top:341.68px;" width="9" height="9" viewBox="0 0 9 9"><path d="M4.5 0.8l3.5 1.8v3.8l-3.5 1.8-3.5-1.8v-3.8z M1 2.6l3.5 1.8 3.5-1.8 M4.5 4.4v3.8" fill="none" stroke="#777" stroke-width="0.7"/></svg>
<div style="left:933.3px;top:341.98px;width:7.8px;height:7.8px;background:#fff;border:0.7px solid #8c8c8c;box-sizing:border-box;border-radius:0.5px"></div>
<svg style="position:absolute;left:933.3px;top:341.98px;" width="7.8" height="7.8" viewBox="0 0 7.8 7.8"><path d="M1.95 3.90l1.56 2.34 2.57-4.29" fill="none" stroke="#555" stroke-width="0.6"/></svg>
<div style="left:955px;top:338.68px;height:14.4px;line-height:14.4px;font-size:7.2px;color:#424242;white-space:nowrap;">普通房屋6</div>
<div style="left:992.5px;top:338.68px;height:14.4px;line-height:14.4px;font-size:7.2px;color:#424242;white-space:nowrap;">MA1001NE103H1535...</div>
<svg style="position:absolute;left:921.5px;top:352.90000000000003px;" width="9" height="9" viewBox="0 0 9 9"><path d="M4.5 0.8l3.5 1.8v3.8l-3.5 1.8-3.5-1.8v-3.8z M1 2.6l3.5 1.8 3.5-1.8 M4.5 4.4v3.8" fill="none" stroke="#777" stroke-width="0.7"/></svg>
<div style="left:933.3px;top:353.20000000000005px;width:7.8px;height:7.8px;background:#fff;border:0.7px solid #8c8c8c;box-sizing:border-box;border-radius:0.5px"></div>
<svg style="position:absolute;left:933.3px;top:353.20000000000005px;" width="7.8" height="7.8" viewBox="0 0 7.8 7.8"><path d="M1.95 3.90l1.56 2.34 2.57-4.29" fill="none" stroke="#555" stroke-width="0.6"/></svg>
<div style="left:955px;top:349.90000000000003px;height:14.4px;line-height:14.4px;font-size:7.2px;color:#424242;white-space:nowrap;">普通房屋7</div>
<div style="left:992.5px;top:349.90000000000003px;height:14.4px;line-height:14.4px;font-size:7.2px;color:#424242;white-space:nowrap;">MA1001NE103H1535...</div>
<svg style="position:absolute;left:921.5px;top:364.12px;" width="9" height="9" viewBox="0 0 9 9"><path d="M4.5 0.8l3.5 1.8v3.8l-3.5 1.8-3.5-1.8v-3.8z M1 2.6l3.5 1.8 3.5-1.8 M4.5 4.4v3.8" fill="none" stroke="#777" stroke-width="0.7"/></svg>
<div style="left:933.3px;top:364.42px;width:7.8px;height:7.8px;background:#fff;border:0.7px solid #8c8c8c;box-sizing:border-box;border-radius:0.5px"></div>
<svg style="position:absolute;left:933.3px;top:364.42px;" width="7.8" height="7.8" viewBox="0 0 7.8 7.8"><path d="M1.95 3.90l1.56 2.34 2.57-4.29" fill="none" stroke="#555" stroke-width="0.6"/></svg>
<div style="left:955px;top:361.12px;height:14.4px;line-height:14.4px;font-size:7.2px;color:#424242;white-space:nowrap;">普通房屋8</div>
<div style="left:992.5px;top:361.12px;height:14.4px;line-height:14.4px;font-size:7.2px;color:#424242;white-space:nowrap;">MA1001NE103H1535...</div>
<svg style="position:absolute;left:921.5px;top:375.34000000000003px;" width="9" height="9" viewBox="0 0 9 9"><path d="M4.5 0.8l3.5 1.8v3.8l-3.5 1.8-3.5-1.8v-3.8z M1 2.6l3.5 1.8 3.5-1.8 M4.5 4.4v3.8" fill="none" stroke="#777" stroke-width="0.7"/></svg>
<div style="left:933.3px;top:375.64000000000004px;width:7.8px;height:7.8px;background:#fff;border:0.7px solid #8c8c8c;box-sizing:border-box;border-radius:0.5px"></div>
<svg style="position:absolute;left:933.3px;top:375.64000000000004px;" width="7.8" height="7.8" viewBox="0 0 7.8 7.8"><path d="M1.95 3.90l1.56 2.34 2.57-4.29" fill="none" stroke="#555" stroke-width="0.6"/></svg>
<div style="left:955px;top:372.34000000000003px;height:14.4px;line-height:14.4px;font-size:7.2px;color:#424242;white-space:nowrap;">普通房屋9</div>
<div style="left:992.5px;top:372.34000000000003px;height:14.4px;line-height:14.4px;font-size:7.2px;color:#424242;white-space:nowrap;">MA1001NE103H1535...</div>
<svg style="position:absolute;left:921.5px;top:386.56px;" width="9" height="9" viewBox="0 0 9 9"><path d="M4.5 0.8l3.5 1.8v3.8l-3.5 1.8-3.5-1.8v-3.8z M1 2.6l3.5 1.8 3.5-1.8 M4.5 4.4v3.8" fill="none" stroke="#777" stroke-width="0.7"/></svg>
<div style="left:933.3px;top:386.86px;width:7.8px;height:7.8px;background:#fff;border:0.7px solid #8c8c8c;box-sizing:border-box;border-radius:0.5px"></div>
<svg style="position:absolute;left:933.3px;top:386.86px;" width="7.8" height="7.8" viewBox="0 0 7.8 7.8"><path d="M1.95 3.90l1.56 2.34 2.57-4.29" fill="none" stroke="#555" stroke-width="0.6"/></svg>
<div style="left:955px;top:383.56px;height:14.4px;line-height:14.4px;font-size:7.2px;color:#424242;white-space:nowrap;">普通房屋10</div>
<div style="left:992.5px;top:383.56px;height:14.4px;line-height:14.4px;font-size:7.2px;color:#424242;white-space:nowrap;">MA1001NE103H1535...</div>
<svg style="position:absolute;left:921.5px;top:397.78000000000003px;" width="9" height="9" viewBox="0 0 9 9"><path d="M4.5 0.8l3.5 1.8v3.8l-3.5 1.8-3.5-1.8v-3.8z M1 2.6l3.5 1.8 3.5-1.8 M4.5 4.4v3.8" fill="none" stroke="#777" stroke-width="0.7"/></svg>
<div style="left:933.3px;top:398.08000000000004px;width:7.8px;height:7.8px;background:#fff;border:0.7px solid #8c8c8c;box-sizing:border-box;border-radius:0.5px"></div>
<svg style="position:absolute;left:933.3px;top:398.08000000000004px;" width="7.8" height="7.8" viewBox="0 0 7.8 7.8"><path d="M1.95 3.90l1.56 2.34 2.57-4.29" fill="none" stroke="#555" stroke-width="0.6"/></svg>
<div style="left:955px;top:394.78000000000003px;height:14.4px;line-height:14.4px;font-size:7.2px;color:#424242;white-space:nowrap;">普通房屋11</div>
<div style="left:992.5px;top:394.78000000000003px;height:14.4px;line-height:14.4px;font-size:7.2px;color:#424242;white-space:nowrap;">MA1001NE103H1535...</div>
<svg style="position:absolute;left:921.5px;top:409.0px;" width="9" height="9" viewBox="0 0 9 9"><path d="M4.5 0.8l3.5 1.8v3.8l-3.5 1.8-3.5-1.8v-3.8z M1 2.6l3.5 1.8 3.5-1.8 M4.5 4.4v3.8" fill="none" stroke="#777" stroke-width="0.7"/></svg>
<div style="left:933.3px;top:409.3px;width:7.8px;height:7.8px;background:#fff;border:0.7px solid #8c8c8c;box-sizing:border-box;border-radius:0.5px"></div>
<svg style="position:absolute;left:933.3px;top:409.3px;" width="7.8" height="7.8" viewBox="0 0 7.8 7.8"><path d="M1.95 3.90l1.56 2.34 2.57-4.29" fill="none" stroke="#555" stroke-width="0.6"/></svg>
<div style="left:955px;top:406.0px;height:14.4px;line-height:14.4px;font-size:7.2px;color:#424242;white-space:nowrap;">普通房屋12</div>
<div style="left:992.5px;top:406.0px;height:14.4px;line-height:14.4px;font-size:7.2px;color:#424242;white-space:nowrap;">MA1001NE103H1535...</div>
<svg style="position:absolute;left:921.5px;top:420.22px;" width="9" height="9" viewBox="0 0 9 9"><path d="M4.5 0.8l3.5 1.8v3.8l-3.5 1.8-3.5-1.8v-3.8z M1 2.6l3.5 1.8 3.5-1.8 M4.5 4.4v3.8" fill="none" stroke="#777" stroke-width="0.7"/></svg>
<div style="left:933.3px;top:420.52000000000004px;width:7.8px;height:7.8px;background:#fff;border:0.7px solid #8c8c8c;box-sizing:border-box;border-radius:0.5px"></div>
<svg style="position:absolute;left:933.3px;top:420.52000000000004px;" width="7.8" height="7.8" viewBox="0 0 7.8 7.8"><path d="M1.95 3.90l1.56 2.34 2.57-4.29" fill="none" stroke="#555" stroke-width="0.6"/></svg>
<div style="left:955px;top:417.22px;height:14.4px;line-height:14.4px;font-size:7.2px;color:#424242;white-space:nowrap;">普通房屋13</div>
<div style="left:992.5px;top:417.22px;height:14.4px;line-height:14.4px;font-size:7.2px;color:#424242;white-space:nowrap;">MA1001NE103H1535...</div>
<svg style="position:absolute;left:921.5px;top:431.44000000000005px;" width="9" height="9" viewBox="0 0 9 9"><path d="M4.5 0.8l3.5 1.8v3.8l-3.5 1.8-3.5-1.8v-3.8z M1 2.6l3.5 1.8 3.5-1.8 M4.5 4.4v3.8" fill="none" stroke="#777" stroke-width="0.7"/></svg>
<div style="left:933.3px;top:431.74000000000007px;width:7.8px;height:7.8px;background:#fff;border:0.7px solid #8c8c8c;box-sizing:border-box;border-radius:0.5px"></div>
<svg style="position:absolute;left:933.3px;top:431.74000000000007px;" width="7.8" height="7.8" viewBox="0 0 7.8 7.8"><path d="M1.95 3.90l1.56 2.34 2.57-4.29" fill="none" stroke="#555" stroke-width="0.6"/></svg>
<div style="left:955px;top:428.44000000000005px;height:14.4px;line-height:14.4px;font-size:7.2px;color:#424242;white-space:nowrap;">普通房屋14</div>
<div style="left:992.5px;top:428.44000000000005px;height:14.4px;line-height:14.4px;font-size:7.2px;color:#424242;white-space:nowrap;">MA1001NE103H1535...</div>
<svg style="position:absolute;left:921.5px;top:442.66px;" width="9" height="9" viewBox="0 0 9 9"><path d="M4.5 0.8l3.5 1.8v3.8l-3.5 1.8-3.5-1.8v-3.8z M1 2.6l3.5 1.8 3.5-1.8 M4.5 4.4v3.8" fill="none" stroke="#777" stroke-width="0.7"/></svg>
<div style="left:933.3px;top:442.96000000000004px;width:7.8px;height:7.8px;background:#fff;border:0.7px solid #8c8c8c;box-sizing:border-box;border-radius:0.5px"></div>
<svg style="position:absolute;left:933.3px;top:442.96000000000004px;" width="7.8" height="7.8" viewBox="0 0 7.8 7.8"><path d="M1.95 3.90l1.56 2.34 2.57-4.29" fill="none" stroke="#555" stroke-width="0.6"/></svg>
<div style="left:955px;top:439.66px;height:14.4px;line-height:14.4px;font-size:7.2px;color:#424242;white-space:nowrap;">普通房屋15</div>
<div style="left:992.5px;top:439.66px;height:14.4px;line-height:14.4px;font-size:7.2px;color:#424242;white-space:nowrap;">MA1001NE103H1535...</div>
<svg style="position:absolute;left:921.5px;top:453.88px;" width="9" height="9" viewBox="0 0 9 9"><path d="M4.5 0.8l3.5 1.8v3.8l-3.5 1.8-3.5-1.8v-3.8z M1 2.6l3.5 1.8 3.5-1.8 M4.5 4.4v3.8" fill="none" stroke="#777" stroke-width="0.7"/></svg>
<div style="left:933.3px;top:454.18px;width:7.8px;height:7.8px;background:#fff;border:0.7px solid #8c8c8c;box-sizing:border-box;border-radius:0.5px"></div>
<svg style="position:absolute;left:933.3px;top:454.18px;" width="7.8" height="7.8" viewBox="0 0 7.8 7.8"><path d="M1.95 3.90l1.56 2.34 2.57-4.29" fill="none" stroke="#555" stroke-width="0.6"/></svg>
<div style="left:955px;top:450.88px;height:14.4px;line-height:14.4px;font-size:7.2px;color:#424242;white-space:nowrap;">普通房屋16</div>
<div style="left:992.5px;top:450.88px;height:14.4px;line-height:14.4px;font-size:7.2px;color:#424242;white-space:nowrap;">MA1001NE103H1535...</div>
<svg style="position:absolute;left:921.5px;top:465.1px;" width="9" height="9" viewBox="0 0 9 9"><path d="M4.5 0.8l3.5 1.8v3.8l-3.5 1.8-3.5-1.8v-3.8z M1 2.6l3.5 1.8 3.5-1.8 M4.5 4.4v3.8" fill="none" stroke="#777" stroke-width="0.7"/></svg>
<div style="left:933.3px;top:465.40000000000003px;width:7.8px;height:7.8px;background:#fff;border:0.7px solid #8c8c8c;box-sizing:border-box;border-radius:0.5px"></div>
<svg style="position:absolute;left:933.3px;top:465.40000000000003px;" width="7.8" height="7.8" viewBox="0 0 7.8 7.8"><path d="M1.95 3.90l1.56 2.34 2.57-4.29" fill="none" stroke="#555" stroke-width="0.6"/></svg>
<div style="left:955px;top:462.1px;height:14.4px;line-height:14.4px;font-size:7.2px;color:#424242;white-space:nowrap;">普通房屋17</div>
<div style="left:992.5px;top:462.1px;height:14.4px;line-height:14.4px;font-size:7.2px;color:#424242;white-space:nowrap;">MA1001NE103H1535...</div>
<svg style="position:absolute;left:921.5px;top:476.32000000000005px;" width="9" height="9" viewBox="0 0 9 9"><path d="M4.5 0.8l3.5 1.8v3.8l-3.5 1.8-3.5-1.8v-3.8z M1 2.6l3.5 1.8 3.5-1.8 M4.5 4.4v3.8" fill="none" stroke="#777" stroke-width="0.7"/></svg>
<div style="left:933.3px;top:476.62000000000006px;width:7.8px;height:7.8px;background:#fff;border:0.7px solid #8c8c8c;box-sizing:border-box;border-radius:0.5px"></div>
<svg style="position:absolute;left:933.3px;top:476.62000000000006px;" width="7.8" height="7.8" viewBox="0 0 7.8 7.8"><path d="M1.95 3.90l1.56 2.34 2.57-4.29" fill="none" stroke="#555" stroke-width="0.6"/></svg>
<div style="left:955px;top:473.32000000000005px;height:14.4px;line-height:14.4px;font-size:7.2px;color:#424242;white-space:nowrap;">普通房屋18</div>
<div style="left:992.5px;top:473.32000000000005px;height:14.4px;line-height:14.4px;font-size:7.2px;color:#424242;white-space:nowrap;">MA1001NE103H1535...</div>
<svg style="position:absolute;left:921.5px;top:487.54px;" width="9" height="9" viewBox="0 0 9 9"><path d="M4.5 0.8l3.5 1.8v3.8l-3.5 1.8-3.5-1.8v-3.8z M1 2.6l3.5 1.8 3.5-1.8 M4.5 4.4v3.8" fill="none" stroke="#777" stroke-width="0.7"/></svg>
<div style="left:933.3px;top:487.84000000000003px;width:7.8px;height:7.8px;background:#fff;border:0.7px solid #8c8c8c;box-sizing:border-box;border-radius:0.5px"></div>
<svg style="position:absolute;left:933.3px;top:487.84000000000003px;" width="7.8" height="7.8" viewBox="0 0 7.8 7.8"><path d="M1.95 3.90l1.56 2.34 2.57-4.29" fill="none" stroke="#555" stroke-width="0.6"/></svg>
<div style="left:955px;top:484.54px;height:14.4px;line-height:14.4px;font-size:7.2px;color:#424242;white-space:nowrap;">普通房屋19</div>
<div style="left:992.5px;top:484.54px;height:14.4px;line-height:14.4px;font-size:7.2px;color:#424242;white-space:nowrap;">MA1001NE103H1535...</div>
<svg style="position:absolute;left:921.5px;top:498.76px;" width="9" height="9" viewBox="0 0 9 9"><path d="M4.5 0.8l3.5 1.8v3.8l-3.5 1.8-3.5-1.8v-3.8z M1 2.6l3.5 1.8 3.5-1.8 M4.5 4.4v3.8" fill="none" stroke="#777" stroke-width="0.7"/></svg>
<div style="left:933.3px;top:499.06px;width:7.8px;height:7.8px;background:#fff;border:0.7px solid #8c8c8c;box-sizing:border-box;border-radius:0.5px"></div>
<svg style="position:absolute;left:933.3px;top:499.06px;" width="7.8" height="7.8" viewBox="0 0 7.8 7.8"><path d="M1.95 3.90l1.56 2.34 2.57-4.29" fill="none" stroke="#555" stroke-width="0.6"/></svg>
<div style="left:955px;top:495.76px;height:14.4px;line-height:14.4px;font-size:7.2px;color:#424242;white-space:nowrap;">普通房屋20</div>
<div style="left:992.5px;top:495.76px;height:14.4px;line-height:14.4px;font-size:7.2px;color:#424242;white-space:nowrap;">MA1001NE103H1535...</div>
<svg style="position:absolute;left:921.5px;top:509.98px;" width="9" height="9" viewBox="0 0 9 9"><path d="M4.5 0.8l3.5 1.8v3.8l-3.5 1.8-3.5-1.8v-3.8z M1 2.6l3.5 1.8 3.5-1.8 M4.5 4.4v3.8" fill="none" stroke="#777" stroke-width="0.7"/></svg>
<div style="left:933.3px;top:510.28000000000003px;width:7.8px;height:7.8px;background:#fff;border:0.7px solid #8c8c8c;box-sizing:border-box;border-radius:0.5px"></div>
<svg style="position:absolute;left:933.3px;top:510.28000000000003px;" width="7.8" height="7.8" viewBox="0 0 7.8 7.8"><path d="M1.95 3.90l1.56 2.34 2.57-4.29" fill="none" stroke="#555" stroke-width="0.6"/></svg>
<div style="left:955px;top:506.9800000000001px;height:14.4px;line-height:14.4px;font-size:7.2px;color:#424242;white-space:nowrap;">普通房屋21</div>
<div style="left:992.5px;top:506.9800000000001px;height:14.4px;line-height:14.4px;font-size:7.2px;color:#424242;white-space:nowrap;">MA1001NE103H1535...</div>
<svg style="position:absolute;left:921.5px;top:521.2px;" width="9" height="9" viewBox="0 0 9 9"><path d="M4.5 0.8l3.5 1.8v3.8l-3.5 1.8-3.5-1.8v-3.8z M1 2.6l3.5 1.8 3.5-1.8 M4.5 4.4v3.8" fill="none" stroke="#777" stroke-width="0.7"/></svg>
<div style="left:933.3px;top:521.5px;width:7.8px;height:7.8px;background:#fff;border:0.7px solid #8c8c8c;box-sizing:border-box;border-radius:0.5px"></div>
<svg style="position:absolute;left:933.3px;top:521.5px;" width="7.8" height="7.8" viewBox="0 0 7.8 7.8"><path d="M1.95 3.90l1.56 2.34 2.57-4.29" fill="none" stroke="#555" stroke-width="0.6"/></svg>
<div style="left:955px;top:518.2px;height:14.4px;line-height:14.4px;font-size:7.2px;color:#424242;white-space:nowrap;">普通房屋22</div>
<div style="left:992.5px;top:518.2px;height:14.4px;line-height:14.4px;font-size:7.2px;color:#424242;white-space:nowrap;">MA1001NE103H1535...</div>
<svg style="position:absolute;left:921.5px;top:532.4200000000001px;" width="9" height="9" viewBox="0 0 9 9"><path d="M4.5 0.8l3.5 1.8v3.8l-3.5 1.8-3.5-1.8v-3.8z M1 2.6l3.5 1.8 3.5-1.8 M4.5 4.4v3.8" fill="none" stroke="#777" stroke-width="0.7"/></svg>
<div style="left:933.3px;top:532.72px;width:7.8px;height:7.8px;background:#fff;border:0.7px solid #8c8c8c;box-sizing:border-box;border-radius:0.5px"></div>
<svg style="position:absolute;left:933.3px;top:532.72px;" width="7.8" height="7.8" viewBox="0 0 7.8 7.8"><path d="M1.95 3.90l1.56 2.34 2.57-4.29" fill="none" stroke="#555" stroke-width="0.6"/></svg>
<div style="left:955px;top:529.4200000000001px;height:14.4px;line-height:14.4px;font-size:7.2px;color:#424242;white-space:nowrap;">普通房屋23</div>
<div style="left:992.5px;top:529.4200000000001px;height:14.4px;line-height:14.4px;font-size:7.2px;color:#424242;white-space:nowrap;">MA1001NE103H1535...</div>
<svg style="position:absolute;left:921.5px;top:543.64px;" width="9" height="9" viewBox="0 0 9 9"><path d="M4.5 0.8l3.5 1.8v3.8l-3.5 1.8-3.5-1.8v-3.8z M1 2.6l3.5 1.8 3.5-1.8 M4.5 4.4v3.8" fill="none" stroke="#777" stroke-width="0.7"/></svg>
<div style="left:933.3px;top:543.9399999999999px;width:7.8px;height:7.8px;background:#fff;border:0.7px solid #8c8c8c;box-sizing:border-box;border-radius:0.5px"></div>
<svg style="position:absolute;left:933.3px;top:543.9399999999999px;" width="7.8" height="7.8" viewBox="0 0 7.8 7.8"><path d="M1.95 3.90l1.56 2.34 2.57-4.29" fill="none" stroke="#555" stroke-width="0.6"/></svg>
<div style="left:954px;top:542.64px;width:35px;height:10.5px;background:#d7e3f2"></div>
<div style="left:955px;top:540.64px;height:14.4px;line-height:14.4px;font-size:7.2px;color:#424242;white-space:nowrap;">普通房屋24</div>
<div style="left:992.5px;top:540.64px;height:14.4px;line-height:14.4px;font-size:7.2px;color:#424242;white-space:nowrap;">MA1001NE103H1535...</div>
<div style="left:919px;top:282px;width:151px;height:14.5px;background:#f3f3f3;border-bottom:1px solid #dcdcdc;box-sizing:border-box"></div>
<div style="left:932px;top:282.5px;width:0.8px;height:13.5px;background:#dedede"></div>
<div style="left:953px;top:282.5px;width:0.8px;height:13.5px;background:#dedede"></div>
<div style="left:991px;top:282.5px;width:0.8px;height:13.5px;background:#dedede"></div>
<div style="left:843px;width:200px;text-align:center;top:282.5px;height:14px;line-height:14px;font-size:7px;color:#ccc;white-space:nowrap;">△</div>
<div style="left:872px;width:200px;text-align:center;top:282.3px;height:14.4px;line-height:14.4px;font-size:7.2px;color:#3a3a3a;white-space:nowrap;">名称</div>
<div style="left:930.5px;width:200px;text-align:center;top:282.3px;height:14.4px;line-height:14.4px;font-size:7.2px;color:#424242;white-space:nowrap;">标识码</div>
<div style="left:1070.5px;top:282.5px;width:9px;height:271px;background:#e6e6e6;border-left:1px solid #d8d8d8;box-sizing:border-box"></div>
<div style="left:1071.0px;top:283.0px;width:8px;height:8px;background:#f6f6f6;border:1px solid #cfcfcf;box-sizing:border-box"></div>
<svg style="position:absolute;left:1073.0px;top:285.6px" width="4" height="2.4"><polygon points="0,2.4 4,2.4 2.0,0" fill="#424242"/></svg>
<div style="left:1071.0px;top:545.0px;width:8px;height:8px;background:#f6f6f6;border:1px solid #cfcfcf;box-sizing:border-box"></div>
<svg style="position:absolute;left:1073.0px;top:547.8px" width="4" height="2.4"><polygon points="0,0 4,0 2.0,2.4" fill="#424242"/></svg>
<div style="left:1071.5px;top:312px;width:7.5px;height:233px;background:#f6f6f6;border:1px solid #d0d0d0;box-sizing:border-box"></div>
<div style="left:1079px;top:15.5px;width:1px;height:556px;background:#6a6a6a"></div>
<div style="left:196.5px;top:486px;width:718px;height:67px;background:#f0f0f0"></div>
<div style="left:197px;top:489px;width:12px;height:62px;background:#e9e9e9"></div>
<svg style="position:absolute;left:200px;top:491.5px;" width="6" height="6" viewBox="0 0 6 6"><path d="M1 1l4 4M5 1l-4 4" stroke="#222" stroke-width="1.1"/></svg>
<svg style="position:absolute;left:199px;top:502px;" width="9" height="8" viewBox="0 0 9 8"><rect x="1.5" y="3" width="4" height="4" fill="none" stroke="#333" stroke-width="0.8"/><rect x="3" y="1.5" width="4" height="4" fill="#e9e9e9" stroke="#333" stroke-width="0.8"/></svg>
<div style="left:197px;top:513px;width:12px;height:38px;background:#e2e2e2"></div>
<div style="left:103px;width:200px;text-align:center;top:524.0px;height:13.0px;line-height:13.0px;font-size:6.5px;color:#5a6a8a;white-space:nowrap;">命</div>
<div style="left:103px;width:200px;text-align:center;top:531.3px;height:13.0px;line-height:13.0px;font-size:6.5px;color:#5a6a8a;white-space:nowrap;">令</div>
<div style="left:103px;width:200px;text-align:center;top:538.6px;height:13.0px;line-height:13.0px;font-size:6.5px;color:#5a6a8a;white-space:nowrap;">栏</div>
<div style="left:209.5px;top:489px;width:704.5px;height:46.5px;background:#fff;border-left:1px solid #ccc;box-sizing:border-box"></div>
<div style="left:209.5px;top:535px;width:704.5px;height:1.2px;background:#a8a8a8"></div>
<div style="left:209.5px;top:536.2px;width:704.5px;height:15px;background:#fff"></div>
<div style="left:209.5px;top:551px;width:704.5px;height:1px;background:#c8c8c8"></div>
<div style="left:212.5px;top:485.7px;height:13.2px;line-height:13.2px;font-size:6.6px;color:#4a4a4a;white-space:nowrap;font-family:'Liberation Mono',monospace">nodes to select: 1</div>
<div style="left:212.5px;top:494.65px;height:13.2px;line-height:13.2px;font-size:6.6px;color:#4a4a4a;white-space:nowrap;font-family:'Liberation Mono',monospace">get id: SXJZ0004.osgb</div>
<div style="left:212.5px;top:503.59999999999997px;height:13.2px;line-height:13.2px;font-size:6.6px;color:#4a4a4a;white-space:nowrap;font-family:'Liberation Mono',monospace">nodes to select: 1</div>
<div style="left:212.5px;top:512.55px;height:13.2px;line-height:13.2px;font-size:6.6px;color:#4a4a4a;white-space:nowrap;font-family:'Liberation Mono',monospace">get id: SXJZ0004.osgb</div>
<div style="left:212.5px;top:521.5px;height:13.2px;line-height:13.2px;font-size:6.6px;color:#4a4a4a;white-space:nowrap;font-family:'Liberation Mono',monospace">nodes to select: 1</div>
<div style="left:212.5px;top:536.7px;height:13.6px;line-height:13.6px;font-size:6.8px;color:#444;white-space:nowrap;">命令:</div>
<div style="left:905.5px;top:489px;width:8.5px;height:46px;background:#e8e8e8;border-left:1px solid #ddd;box-sizing:border-box"></div>
<div style="left:906px;top:491px;width:8px;height:8px;background:#f6f6f6;border:1px solid #d0d0d0;box-sizing:border-box"></div>
<svg style="position:absolute;left:908.0px;top:493.3px" width="4" height="2.4"><polygon points="0,2.4 4,2.4 2.0,0" fill="#555"/></svg>
<div style="left:906px;top:521.5px;width:8px;height:6px;background:#f9f9f9;border:1px solid #d0d0d0;box-sizing:border-box"></div>
<div style="left:906px;top:527.5px;width:8px;height:8px;background:#f6f6f6;border:1px solid #d0d0d0;box-sizing:border-box"></div>
<svg style="position:absolute;left:908.0px;top:530.3px" width="4" height="2.4"><polygon points="0,0 4,0 2.0,2.4" fill="#555"/></svg>
<div style="left:905.5px;top:537px;width:8.5px;height:14px;background:#e8e8e8"></div>
<svg style="position:absolute;left:908.0px;top:539.3px" width="4" height="2.4"><polygon points="0,2.4 4,2.4 2.0,0" fill="#555"/></svg>
<svg style="position:absolute;left:908.0px;top:546.3px" width="4" height="2.4"><polygon points="0,0 4,0 2.0,2.4" fill="#555"/></svg>
<div style="left:0px;top:553px;width:1080px;height:18px;background:#f0f0f0"></div>
<div style="left:0px;top:569.5px;width:1080px;height:1.5px;background:#5a6470"></div>
<div style="left:0px;top:555.3px;height:14.4px;line-height:14.4px;font-size:7.2px;color:#444;white-space:nowrap;">比例尺:</div>
<div style="left:27.5px;top:555.5px;width:66px;height:13px;background:#fff;border:1px solid #e0e0e0;box-sizing:border-box"></div>
<div style="left:30px;top:555.8px;height:13.0px;line-height:13.0px;font-size:6.5px;color:#444;white-space:nowrap;font-family:'Liberation Mono',monospace">1:1496</div>
<svg style="position:absolute;left:87.0px;top:561.0999999999999px" width="4" height="2.4"><polygon points="0,0 4,0 2.0,2.4" fill="#555"/></svg>
<div style="left:96px;top:555.5px;width:150px;height:13px;background:#fff;border:1px solid #e0e0e0;box-sizing:border-box"></div>
<div style="left:100.5px;top:555.65px;height:13.3px;line-height:13.3px;font-size:6.65px;color:#444;white-space:nowrap;font-family:'Liberation Mono',monospace">491154.3502, 3306457.4013, 145.3430</div>
<div style="left:245px;top:556px;width:12px;height:12px;background:#f0f0f0"></div>
<svg style="position:absolute;left:246px;top:557px;" width="10" height="10" viewBox="0 0 10 10"><path d="M2 1v8h7M2 6h3v3" fill="none" stroke="#444" stroke-width="0.8"/></svg>
<div style="left:260px;top:556px;width:12px;height:12px;background:#f0f0f0"></div>
<svg style="position:absolute;left:261px;top:557px;" width="10" height="10" viewBox="0 0 10 10"><circle cx="5" cy="5.5" r="3" fill="none" stroke="#444" stroke-width="0.8"/><path d="M5 5.5l3-3" stroke="#444" stroke-width="0.8"/></svg>
<div style="left:272.75px;top:556px;width:12px;height:12px;background:#f0f0f0"></div>
<svg style="position:absolute;left:273.75px;top:557px;" width="10" height="10" viewBox="0 0 10 10"><rect x="2" y="2" width="7" height="7" fill="#fff" stroke="#555" stroke-width="0.7"/><circle cx="2" cy="2" r="1.2" fill="#f08030"/></svg>
<div style="left:285.75px;top:556px;width:12px;height:12px;background:#dde6f2"></div>
<svg style="position:absolute;left:286.75px;top:557px;" width="10" height="10" viewBox="0 0 10 10"><rect x="0.5" y="1" width="9" height="8" fill="#111"/><rect x="2" y="3" width="6" height="4" fill="#eee" rx="1"/></svg>
<div style="left:299px;top:556px;width:12px;height:12px;background:#dde6f2"></div>
<svg style="position:absolute;left:300px;top:557px;" width="10" height="10" viewBox="0 0 10 10"><rect x="1" y="1" width="8" height="8" fill="#fff" stroke="#555" stroke-width="0.7"/><path d="M2.5 7.5l5-5" stroke="#222" stroke-width="0.9"/></svg>
<div style="left:312px;top:556px;width:12px;height:12px;background:#f0f0f0"></div>
<svg style="position:absolute;left:313px;top:557px;" width="10" height="10" viewBox="0 0 10 10"><rect x="1" y="1" width="8" height="8" fill="#fff" stroke="#555" stroke-width="0.7"/><rect x="4" y="4" width="2" height="2" fill="#333"/></svg>
<div style="left:324.5px;top:556px;width:12px;height:12px;background:#f0f0f0"></div>
<svg style="position:absolute;left:325.5px;top:557px;" width="10" height="10" viewBox="0 0 10 10"><rect x="1" y="1" width="8" height="8" fill="#fff" stroke="#555" stroke-width="0.7"/><path d="M2 2l6 6" stroke="#222" stroke-width="0.9"/></svg>
<div style="left:338px;top:556px;width:12px;height:12px;background:#f0f0f0"></div>
<svg style="position:absolute;left:339px;top:557px;" width="10" height="10" viewBox="0 0 10 10"><rect x="1" y="1.5" width="8" height="7" fill="#fff" stroke="#555" stroke-width="0.7"/><rect x="2.5" y="3" width="5" height="4" fill="#111"/></svg>
<div style="left:350.75px;top:556px;width:12px;height:12px;background:#dde6f2"></div>
<svg style="position:absolute;left:351.75px;top:557px;" width="10" height="10" viewBox="0 0 10 10"><path d="M1 3h8M1 5.5h8M1 8h8M3 1v8M5.5 1v8M8 1v8" stroke="#555" stroke-width="0.6"/></svg>
<div style="left:364px;top:556px;width:12px;height:12px;background:#dde6f2"></div>
<svg style="position:absolute;left:365px;top:557px;" width="10" height="10" viewBox="0 0 10 10"><rect x="1" y="1" width="6" height="6" fill="none" stroke="#555" stroke-width="0.6"/><text x="4.5" y="9.5" font-size="7" fill="#224" font-family="Liberation Sans">A</text></svg>
<div style="left:375.25px;top:556px;width:12px;height:12px;background:#f0f0f0"></div>
<svg style="position:absolute;left:376.25px;top:557px;" width="10" height="10" viewBox="0 0 10 10"><path d="M1 3h8M1 5.5h8M1 8h8M3 1v8M5.5 1v8M8 1v8" stroke="#555" stroke-width="0.6"/></svg>
<div style="left:389.5px;top:556px;width:12px;height:12px;background:#f0f0f0"></div>
<svg style="position:absolute;left:390.5px;top:557px;" width="10" height="10" viewBox="0 0 10 10"><rect x="1" y="1" width="8" height="8" fill="#fff" stroke="#555" stroke-width="0.7"/><path d="M2 8v-4l2 1 2-2 2 2v3z" fill="#111"/></svg>
<div style="left:402.75px;top:556px;width:12px;height:12px;background:#dde6f2"></div>
<svg style="position:absolute;left:403.75px;top:557px;" width="10" height="10" viewBox="0 0 10 10"><rect x="1" y="1" width="8" height="8" fill="#fff" stroke="#555" stroke-width="0.7"/><path d="M2.5 7.5l5-5" stroke="#333" stroke-width="0.8"/></svg>
<div style="left:415.75px;top:556px;width:12px;height:12px;background:#f0f0f0"></div>
<svg style="position:absolute;left:416.75px;top:557px;" width="10" height="10" viewBox="0 0 10 10"><rect x="0.5" y="1" width="9" height="8" fill="#111"/><path d="M2 3.5h6M2 6h6" stroke="#ddd" stroke-width="1" stroke-dasharray="1.2 0.6"/></svg>
<div style="left:428.5px;top:556px;width:12px;height:12px;background:#f0f0f0"></div>
<svg style="position:absolute;left:429.5px;top:557px;" width="10" height="10" viewBox="0 0 10 10"><rect x="0.5" y="1" width="9" height="8" fill="#111"/><path d="M2 3.5h6M2 6h6" stroke="#ddd" stroke-width="1" stroke-dasharray="1.2 0.6"/></svg>
<div style="left:470px;top:557.5px;width:75px;height:10.5px;background:#b8b8b8"></div>
<div style="left:378px;width:200px;text-align:center;top:555.8px;height:14px;line-height:14px;font-size:7px;color:#666;white-space:nowrap;">点</div>
<div style="left:394.5px;width:200px;text-align:center;top:555.8px;height:14px;line-height:14px;font-size:7px;color:#666;white-space:nowrap;">线</div>
<div style="left:411px;width:200px;text-align:center;top:555.8px;height:14px;line-height:14px;font-size:7px;color:#666;white-space:nowrap;">面</div>
<div style="left:427.5px;width:200px;text-align:center;top:555.8px;height:14px;line-height:14px;font-size:7px;color:#666;white-space:nowrap;">注</div>
<div style="left:1030px;top:556px;width:48px;height:13px;background:#c9c9c9"></div>
<svg style="position:absolute;left:1032px;top:557px;" width="12" height="11" viewBox="0 0 12 11"><circle cx="6" cy="5.5" r="4.2" fill="#1f9a2a"/><ellipse cx="5" cy="4.2" rx="2.3" ry="1.5" fill="#7ad27f"/></svg>
<div style="left:1045px;top:555.5px;height:14px;line-height:14px;font-size:7px;color:#555;white-space:nowrap;">模块加载</div>
</div></body></html>
